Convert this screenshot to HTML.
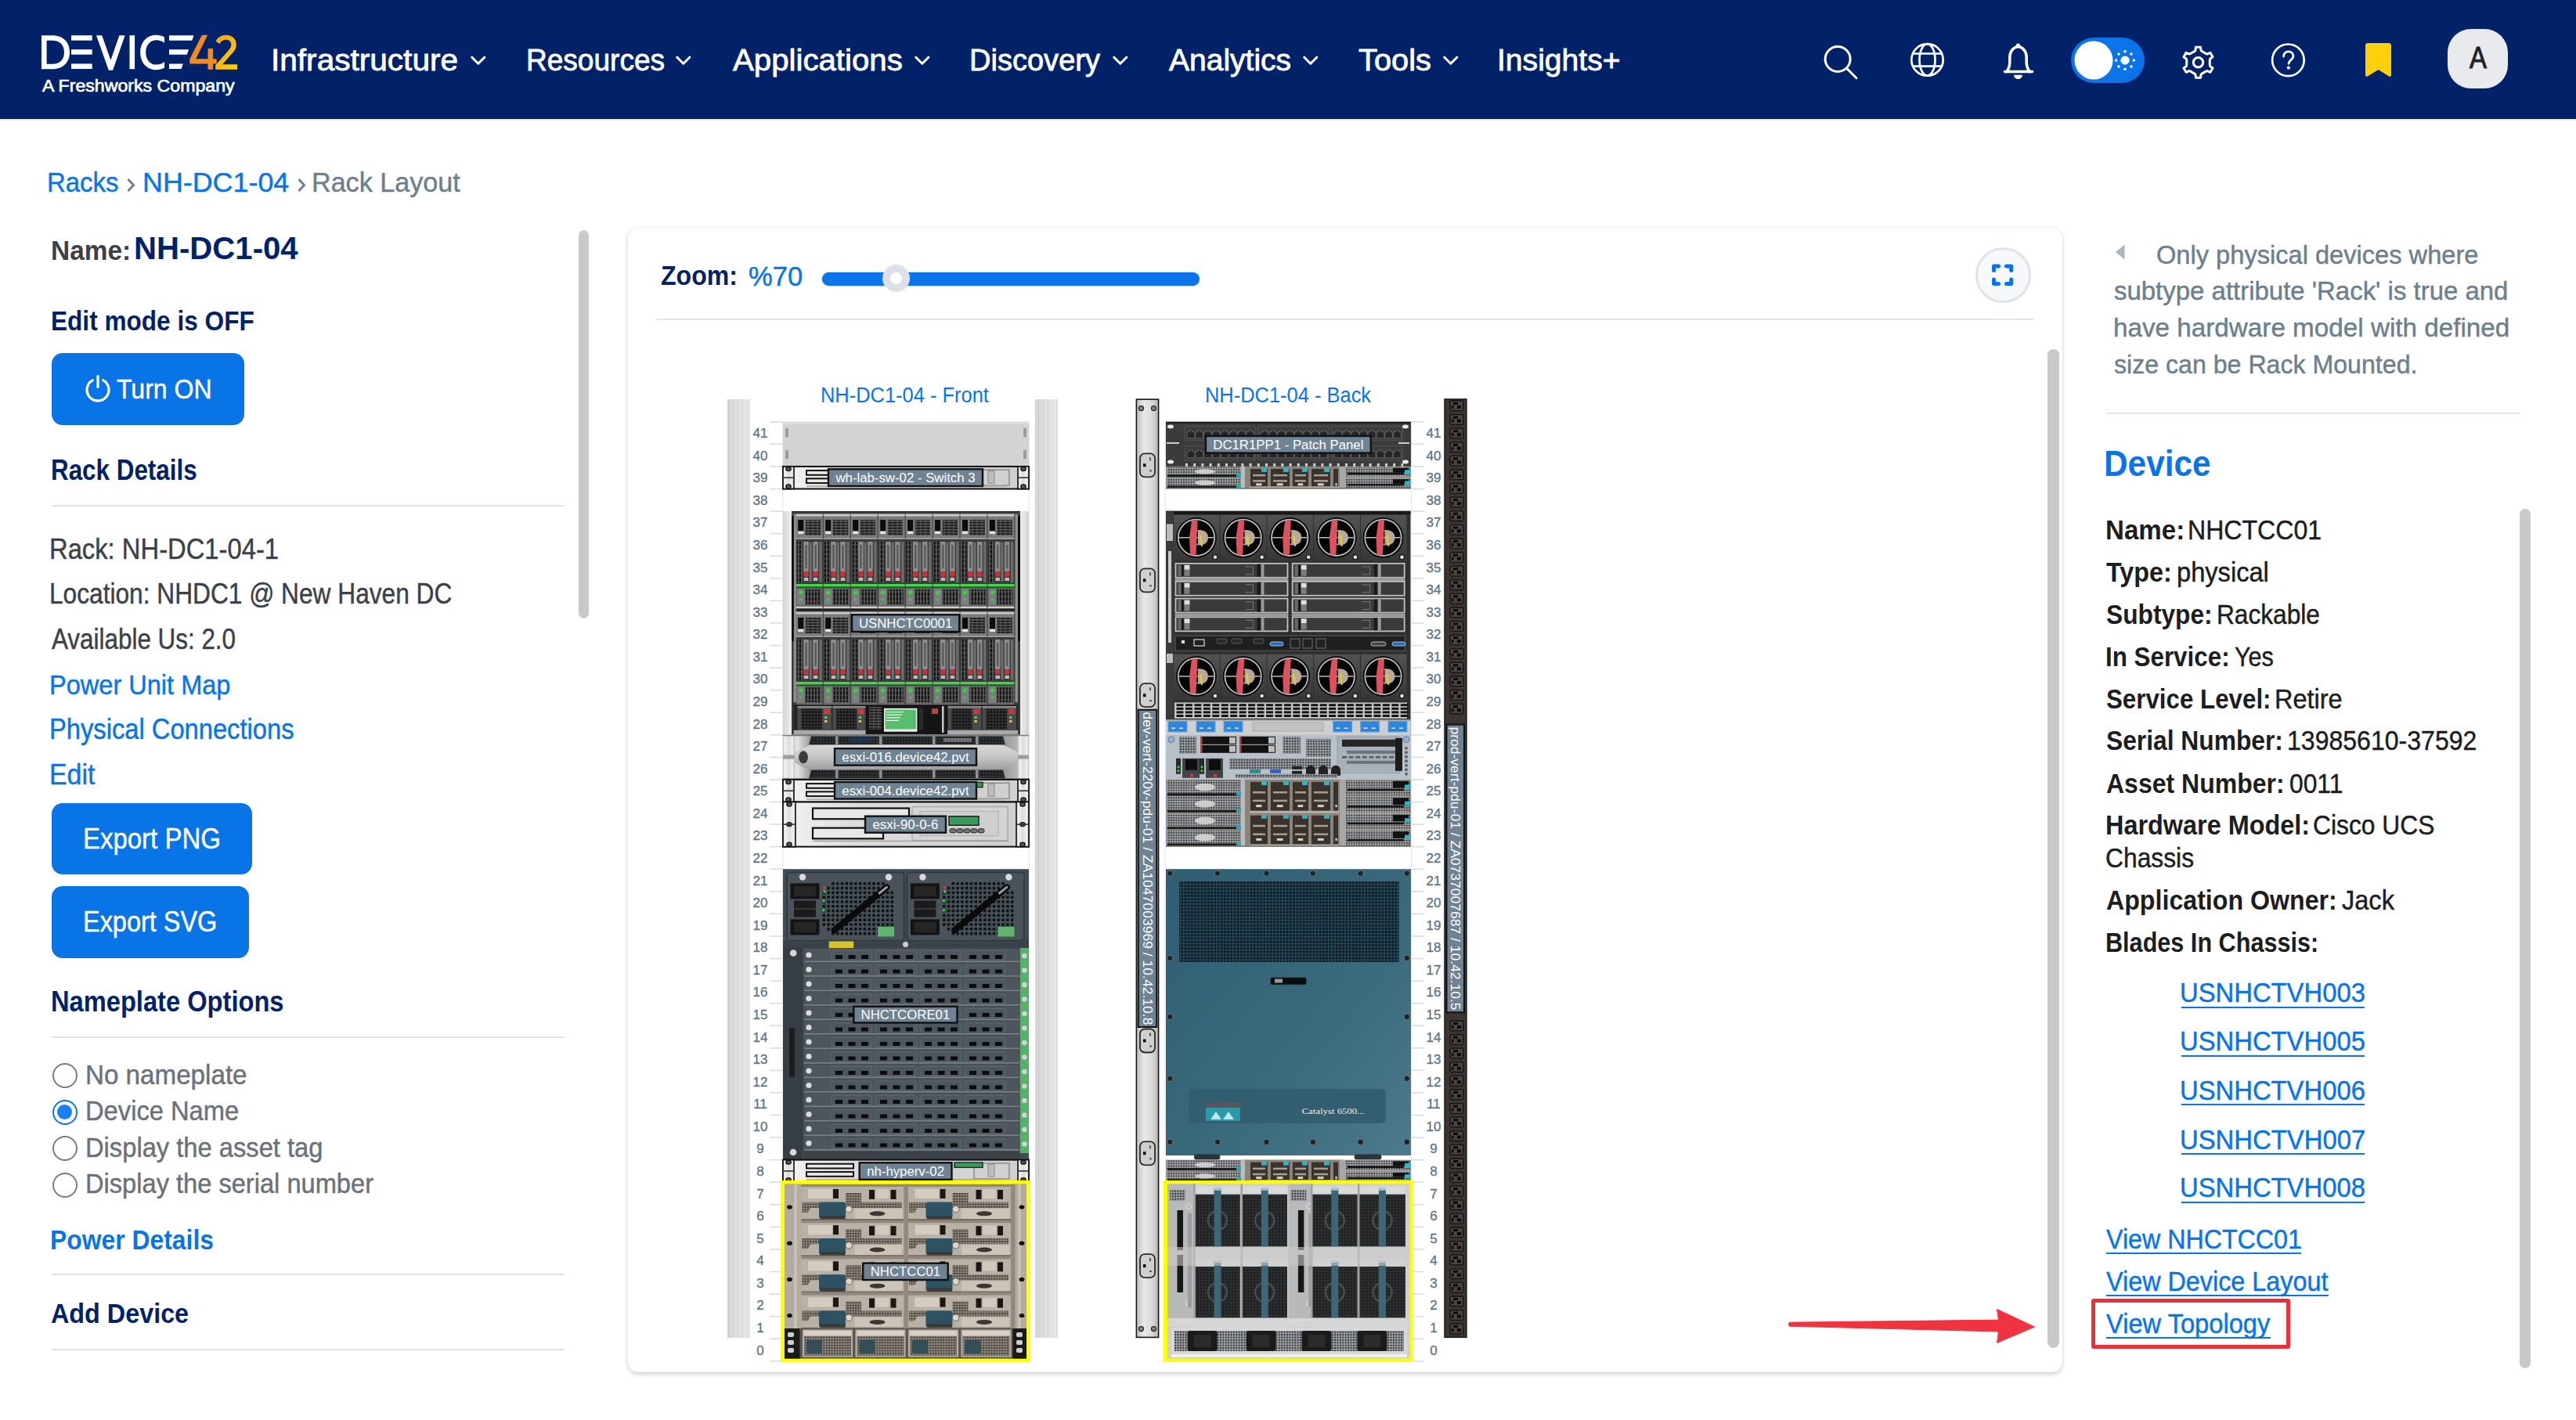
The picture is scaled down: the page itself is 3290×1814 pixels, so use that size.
<!DOCTYPE html>
<html><head><meta charset="utf-8"><title>Rack Layout</title><style>
*{margin:0;padding:0;box-sizing:border-box}
html,body{width:3290px;height:1814px;overflow:hidden;background:#fff;font-family:"Liberation Sans",sans-serif}
.t{position:absolute;white-space:nowrap;line-height:1;transform-origin:0 0}
.a{position:absolute}
</style></head>
<body>
<div class="a" style="left:0;top:0;width:3290px;height:152px;background:#012269"></div>
<div class="a" style="left:0;top:152px;width:3290px;height:2px;background:#e6e9ee"></div>
<svg class="a" style="left:0;top:0" width="320" height="130" viewBox="0 0 320 130">
<defs><linearGradient id="lg2" x1="0" y1="0" x2="1" y2="1"><stop offset="0" stop-color="#f7a21b"/><stop offset="1" stop-color="#fcd20a"/></linearGradient></defs>
<g fill="#fff">
<path d="M53 45.2h14c14 0 22 9 22 21.5S81 88.2 67 88.2H53zM59.6 51.7v30h7.2c9.5 0 15.2-5.5 15.2-15s-5.7-15-15.2-15z"/>
<rect x="91" y="45.2" width="26.7" height="6.5"/><rect x="91" y="63.2" width="26.7" height="6.5"/><rect x="91" y="81.4" width="26.7" height="6.6"/>
<path d="M123 45.2h7.2l11.2 31.5 11-31.5h7.2l-15.5 44.5h-5.3z"/>
<rect x="165.5" y="45.2" width="6.6" height="43"/>
<path d="M210 47.5c-3-1.8-6.7-2.8-10.8-2.8-11.8 0-20 9.4-20 22.2s8.2 22.3 20 22.3c4.1 0 7.8-1 10.8-2.8v-7.4c-2.8 2.3-6.3 3.6-10.3 3.6-8 0-13.5-6.6-13.5-15.7s5.5-15.6 13.5-15.6c4 0 7.5 1.3 10.3 3.6z"/>
<path d="M216 45.2h31.5l-2.2 6.5H216z"/><path d="M216 63.2h25l-2.2 6.5H216z"/><path d="M216 81.5h17.8l-2.2 6.5H216z"/>
</g>
<path fill="#f28a22" d="M258 44.7h7.2l-15 30.5h15.3V62h6.6v13.2h4.6v6.3h-4.6v7.2h-6.6v-7.2h-23.2v-6z"/>
<path fill="url(#lg2)" d="M275.5 53c2.2-5.3 7-8.3 13-8.3 8 0 13.3 5 13.3 12.3 0 5-2.8 9-7 13l-10.8 12.3H303v6.4h-27.8v-5.5l15.7-17.6c3-3.4 4.4-6 4.4-8.5 0-3.8-2.7-6.3-6.8-6.3-3.7 0-6.5 2-7.7 5.3z"/>
</svg>
<div class="t" style="left:54.00px;top:98.34px;font-size:22.90px;font-weight:400;color:#fff;transform:scaleX(1.0109);-webkit-text-stroke:0.7px #fff;">A Freshworks Company</div>
<div class="t" style="left:346.35px;top:57.49px;font-size:39.42px;font-weight:400;color:#fff;transform:scaleX(1.0297);-webkit-text-stroke:0.8px #fff;">Infrastructure</div>
<svg class="a" style="left:601px;top:70px" width="20" height="16" viewBox="0 0 20 16"><path d="M1.8 3.2l8 8 8-8" fill="none" stroke="#fff" stroke-width="3" stroke-linecap="round" stroke-linejoin="round"/></svg>
<div class="t" style="left:672.04px;top:57.49px;font-size:39.42px;font-weight:400;color:#fff;transform:scaleX(0.9398);-webkit-text-stroke:0.8px #fff;">Resources</div>
<svg class="a" style="left:863px;top:70px" width="20" height="16" viewBox="0 0 20 16"><path d="M1.8 3.2l8 8 8-8" fill="none" stroke="#fff" stroke-width="3" stroke-linecap="round" stroke-linejoin="round"/></svg>
<div class="t" style="left:936.00px;top:57.49px;font-size:39.42px;font-weight:400;color:#fff;transform:scaleX(1.0200);-webkit-text-stroke:0.8px #fff;">Applications</div>
<svg class="a" style="left:1168px;top:70px" width="20" height="16" viewBox="0 0 20 16"><path d="M1.8 3.2l8 8 8-8" fill="none" stroke="#fff" stroke-width="3" stroke-linecap="round" stroke-linejoin="round"/></svg>
<div class="t" style="left:1237.96px;top:57.49px;font-size:39.42px;font-weight:400;color:#fff;transform:scaleX(0.9653);-webkit-text-stroke:0.8px #fff;">Discovery</div>
<svg class="a" style="left:1421px;top:70px" width="20" height="16" viewBox="0 0 20 16"><path d="M1.8 3.2l8 8 8-8" fill="none" stroke="#fff" stroke-width="3" stroke-linecap="round" stroke-linejoin="round"/></svg>
<div class="t" style="left:1493.00px;top:57.49px;font-size:39.42px;font-weight:400;color:#fff;transform:scaleX(0.9901);-webkit-text-stroke:0.8px #fff;">Analytics</div>
<svg class="a" style="left:1664px;top:70px" width="20" height="16" viewBox="0 0 20 16"><path d="M1.8 3.2l8 8 8-8" fill="none" stroke="#fff" stroke-width="3" stroke-linecap="round" stroke-linejoin="round"/></svg>
<div class="t" style="left:1735.20px;top:57.49px;font-size:39.42px;font-weight:400;color:#fff;transform:scaleX(1.0105);-webkit-text-stroke:0.8px #fff;">Tools</div>
<svg class="a" style="left:1843px;top:70px" width="20" height="16" viewBox="0 0 20 16"><path d="M1.8 3.2l8 8 8-8" fill="none" stroke="#fff" stroke-width="3" stroke-linecap="round" stroke-linejoin="round"/></svg>
<div class="t" style="left:1912.08px;top:57.49px;font-size:39.42px;font-weight:400;color:#fff;transform:scaleX(0.9922);-webkit-text-stroke:0.8px #fff;">Insights+</div>
<svg class="a" style="left:2300px;top:30px" width="960" height="100" viewBox="2300 30 960 100">
<g fill="none" stroke="#fff" stroke-width="3" stroke-linecap="round" stroke-linejoin="round">
<circle cx="2347.1" cy="75.5" r="16"/><path d="M2358.8 87.6l12.2 12.2"/>
<g stroke-width="2.7"><circle cx="2461.5" cy="76.4" r="20.2"/><ellipse cx="2461.5" cy="76.4" rx="10" ry="20.2"/><path d="M2443.3 68.5h36.4M2443.3 84.6h36.4"/></g>
<path d="M2560.5 91.5h35" stroke-width="3.6"/>
<path d="M2562.8 91.5c2.5-3 4-7.5 4-12.5v-5c0-8.8 5-14 10.7-14.5 5.7.5 10.7 5.7 10.7 14.5v5c0 5 1.5 9.5 4 12.5" stroke-width="3.6"/>
<circle cx="2807.5" cy="79.8" r="6.2"/>
<path d="M2801.96 66.08L2803.95 64.40L2804.40 60.24L2810.60 60.24L2811.05 64.40L2813.04 66.08A14.8 14.8 0 0 1 2816.61 68.14L2819.06 69.02L2822.89 67.34L2825.98 72.70L2822.61 75.18L2822.16 77.74A14.8 14.8 0 0 1 2822.16 81.86L2822.61 84.42L2825.98 86.90L2822.89 92.26L2819.06 90.58L2816.61 91.46A14.8 14.8 0 0 1 2813.04 93.52L2811.05 95.20L2810.60 99.36L2804.40 99.36L2803.95 95.20L2801.96 93.52A14.8 14.8 0 0 1 2798.39 91.46L2795.94 90.58L2792.11 92.26L2789.02 86.90L2792.39 84.42L2792.84 81.86A14.8 14.8 0 0 1 2792.84 77.74L2792.39 75.18L2789.02 72.70L2792.11 67.34L2795.94 69.02L2798.39 68.14A14.8 14.8 0 0 1 2801.96 66.08z"/>
<circle cx="2922.4" cy="76.8" r="20.3" stroke-width="2.7"/><path d="M2916.6 72c0-3.6 2.8-6.2 6.2-6.2s6.1 2.5 6.1 5.9c0 4.6-5.9 5.3-5.9 9.6" stroke-width="2.8"/>
</g>
<g fill="#fff"><circle cx="2577.5" cy="58.3" r="2.7"/><path d="M2572 95.8a5.5 5.3 0 0 0 11 0z"/><circle cx="2922.9" cy="86.6" r="2.1"/></g>
<rect x="2645" y="48" width="94" height="58" rx="29" fill="#0a74e8"/>
<circle cx="2674" cy="77" r="24.5" fill="#fff"/>
<circle cx="2714" cy="77" r="5.6" fill="#fff"/>
<g fill="#fff"><circle cx="2714" cy="65.7" r="1.8"/><circle cx="2714" cy="88.3" r="1.8"/><circle cx="2702.7" cy="77" r="1.8"/><circle cx="2725.3" cy="77" r="1.8"/><circle cx="2706" cy="69" r="1.8"/><circle cx="2722" cy="69" r="1.8"/><circle cx="2706" cy="85" r="1.8"/><circle cx="2722" cy="85" r="1.8"/></g>
<path d="M3024 55h27c1.6 0 3 1.4 3 3v38c0 1.5-1.6 2.3-2.8 1.5l-13.7-8.5-13.7 8.5c-1.2.8-2.8 0-2.8-1.5V58c0-1.6 1.4-3 3-3z" fill="#fdd10a"/>
<rect x="3126" y="37" width="77" height="76" rx="30" fill="#e8eaee"/>
</svg>
<div class="t" style="left:3153.50px;top:55.16px;font-size:38.41px;font-weight:400;color:#1f2023;transform:scaleX(0.8550);-webkit-text-stroke:1.0px #1f2023;">A</div>
<div class="t" style="left:60.16px;top:215.91px;font-size:34.93px;font-weight:400;color:#0874e6;transform:scaleX(0.9432);-webkit-text-stroke:0.45px #0874e6;">Racks</div>
<svg class="a" style="left:158px;top:224px" width="20" height="24" viewBox="0 0 20 24"><path d="M5.5 5l7 7.5-7 7.5" fill="none" stroke="#6f7f8b" stroke-width="3"/></svg>
<div class="t" style="left:181.63px;top:215.91px;font-size:34.93px;font-weight:400;color:#0874e6;transform:scaleX(1.0267);-webkit-text-stroke:0.45px #0874e6;">NH-DC1-04</div>
<svg class="a" style="left:376px;top:224px" width="20" height="24" viewBox="0 0 20 24"><path d="M5.5 5l7 7.5-7 7.5" fill="none" stroke="#6f7f8b" stroke-width="3"/></svg>
<div class="t" style="left:398.27px;top:215.91px;font-size:34.93px;font-weight:400;color:#6c7f8d;transform:scaleX(0.9769);-webkit-text-stroke:0.45px #6c7f8d;">Rack Layout</div>
<div class="t" style="left:65.00px;top:301.87px;font-size:35.22px;font-weight:700;color:#3b4149;transform:scaleX(0.9486);">Name:</div>
<div class="t" style="left:171.19px;top:297.31px;font-size:40.58px;font-weight:700;color:#012269;transform:scaleX(0.9891);">NH-DC1-04</div>
<div class="t" style="left:65.10px;top:393.23px;font-size:34.78px;font-weight:700;color:#012269;transform:scaleX(0.9086);">Edit mode is OFF</div>
<div class="a" style="left:66px;top:451px;width:246px;height:92px;background:#0874e6;border-radius:14px"></div>
<svg class="a" style="left:105px;top:476px" width="40" height="40" viewBox="0 0 40 40"><path d="M13.2 9.8a14 14 0 1 0 13.6 0" fill="none" stroke="#fff" stroke-width="3.2" stroke-linecap="round"/><path d="M20 4.5v14" stroke="#fff" stroke-width="3.2" stroke-linecap="round"/></svg>
<div class="t" style="left:149.36px;top:479.62px;font-size:35.51px;font-weight:400;color:#fff;transform:scaleX(0.9016);-webkit-text-stroke:0.45px #fff;">Turn ON</div>
<div class="t" style="left:65.12px;top:583.00px;font-size:36.23px;font-weight:700;color:#012269;transform:scaleX(0.8664);">Rack Details</div>
<div class="a" style="left:66px;top:645px;width:655px;height:2px;background:#dfe3e8"></div>
<div class="t" style="left:63.38px;top:683.51px;font-size:36.81px;font-weight:400;color:#3b4149;transform:scaleX(0.8901);-webkit-text-stroke:0.45px #3b4149;">Rack: NH-DC1-04-1</div>
<div class="t" style="left:63.47px;top:740.51px;font-size:36.81px;font-weight:400;color:#3b4149;transform:scaleX(0.8605);-webkit-text-stroke:0.45px #3b4149;">Location: NHDC1 @ New Haven DC</div>
<div class="t" style="left:66.00px;top:799.00px;font-size:36.23px;font-weight:400;color:#3b4149;transform:scaleX(0.8669);-webkit-text-stroke:0.45px #3b4149;">Available Us: 2.0</div>
<div class="t" style="left:63.40px;top:857.14px;font-size:35.36px;font-weight:400;color:#0874e6;transform:scaleX(0.9202);-webkit-text-stroke:0.45px #0874e6;">Power Unit Map</div>
<div class="t" style="left:63.38px;top:914.00px;font-size:36.23px;font-weight:400;color:#0874e6;transform:scaleX(0.9024);-webkit-text-stroke:0.45px #0874e6;">Physical Connections</div>
<div class="t" style="left:63.29px;top:972.00px;font-size:36.23px;font-weight:400;color:#0874e6;transform:scaleX(0.9344);-webkit-text-stroke:0.45px #0874e6;">Edit</div>
<div class="a" style="left:66px;top:1025.5px;width:256px;height:91px;background:#0874e6;border-radius:14px"></div>
<div class="t" style="left:106.36px;top:1052.82px;font-size:37.39px;font-weight:400;color:#fff;transform:scaleX(0.8817);-webkit-text-stroke:0.45px #fff;">Export PNG</div>
<div class="a" style="left:66px;top:1131.5px;width:252px;height:92.5px;background:#0874e6;border-radius:14px"></div>
<div class="t" style="left:106.40px;top:1158.62px;font-size:37.39px;font-weight:400;color:#fff;transform:scaleX(0.8682);-webkit-text-stroke:0.45px #fff;">Export SVG</div>
<div class="t" style="left:64.64px;top:1261.89px;font-size:36.96px;font-weight:700;color:#012269;transform:scaleX(0.8835);">Nameplate Options</div>
<div class="a" style="left:66px;top:1323.6px;width:655px;height:2px;background:#dfe3e8"></div>
<div class="a" style="left:66.6px;top:1358px;width:32px;height:32px;border-radius:50%;border:2.5px solid #767c83;background:#fff"></div>
<div class="t" style="left:109.35px;top:1354.74px;font-size:35.36px;font-weight:400;color:#6b7178;transform:scaleX(0.9382);-webkit-text-stroke:0.45px #6b7178;">No nameplate</div>
<div class="a" style="left:66.6px;top:1404.5px;width:32px;height:32px;border-radius:50%;border:2.5px solid #0a74e8;background:#fff"></div>
<div class="a" style="left:73.1px;top:1411.0px;width:19px;height:19px;border-radius:50%;background:#1a7ff0"></div>
<div class="t" style="left:109.38px;top:1401.24px;font-size:35.36px;font-weight:400;color:#6b7178;transform:scaleX(0.9244);-webkit-text-stroke:0.45px #6b7178;">Device Name</div>
<div class="a" style="left:66.6px;top:1451px;width:32px;height:32px;border-radius:50%;border:2.5px solid #767c83;background:#fff"></div>
<div class="t" style="left:109.38px;top:1447.74px;font-size:35.36px;font-weight:400;color:#6b7178;transform:scaleX(0.9244);-webkit-text-stroke:0.45px #6b7178;">Display the asset tag</div>
<div class="a" style="left:66.6px;top:1497.5px;width:32px;height:32px;border-radius:50%;border:2.5px solid #767c83;background:#fff"></div>
<div class="t" style="left:109.39px;top:1494.24px;font-size:35.36px;font-weight:400;color:#6b7178;transform:scaleX(0.9224);-webkit-text-stroke:0.45px #6b7178;">Display the serial number</div>
<div class="t" style="left:64.09px;top:1566.73px;font-size:34.20px;font-weight:700;color:#0874e6;transform:scaleX(0.9321);">Power Details</div>
<div class="a" style="left:66px;top:1627px;width:655px;height:2px;background:#dfe3e8"></div>
<div class="t" style="left:65.35px;top:1661.07px;font-size:35.80px;font-weight:700;color:#012269;transform:scaleX(0.9032);">Add Device</div>
<div class="a" style="left:66px;top:1722.6px;width:655px;height:2px;background:#dfe3e8"></div>
<div class="a" style="left:739px;top:294px;width:13px;height:496px;background:#c9c9c9;border-radius:7px"></div>
<div class="a" style="left:802px;top:290.5px;width:1832px;height:1462px;background:#fff;border-radius:13px;box-shadow:0 3px 6px rgba(0,0,0,0.16),0 0 2px rgba(0,0,0,0.12)"></div>
<div class="t" style="left:843.66px;top:334.62px;font-size:35.51px;font-weight:700;color:#012269;transform:scaleX(0.9038);">Zoom:</div>
<div class="t" style="left:955.96px;top:335.60px;font-size:34.35px;font-weight:400;color:#0874e6;transform:scaleX(1.0079);-webkit-text-stroke:0.45px #0874e6;">%70</div>
<div class="a" style="left:1050px;top:347.5px;width:482px;height:17.5px;background:#0a74e8;border-radius:9px;box-shadow:0 0 0 1px #d6dde6"></div>
<div class="a" style="left:1126.5px;top:337.5px;width:35px;height:35px;border-radius:50%;background:#fff;border:10px solid #dde1e7"></div>
<div class="a" style="left:2523.4px;top:316.3px;width:70.5px;height:70.5px;border-radius:50%;background:#f6f8f9;border:3.5px solid #dfe2e6"></div>
<svg class="a" style="left:2540px;top:334px" width="36" height="36" viewBox="2540 334 36 36"><path d="M2546.5 345.5v-5.5h6M2562.5 340h6.2v5.5M2546.5 357v5.5h6M2562.5 362.5h6.2V357" fill="none" stroke="#0a74e8" stroke-width="5" stroke-linecap="round" stroke-linejoin="round"/></svg>
<div class="a" style="left:838px;top:406.5px;width:1760px;height:2px;background:#e3e6ea"></div>
<div class="a" style="left:2615px;top:446px;width:15px;height:1276px;background:#c9c9c9;border-radius:8px"></div>
<svg class="a" style="left:2698px;top:308px" width="20" height="28" viewBox="0 0 20 28"><path d="M15.5 4.5v19L4 14z" fill="#aab4bc"/></svg>
<div class="t" style="left:2753.70px;top:308.97px;font-size:33.33px;font-weight:400;color:#6c7f8d;transform:scaleX(0.9784);-webkit-text-stroke:0.45px #6c7f8d;">Only physical devices where</div>
<div class="t" style="left:2700.34px;top:355.47px;font-size:33.33px;font-weight:400;color:#6c7f8d;transform:scaleX(0.9886);-webkit-text-stroke:0.45px #6c7f8d;">subtype attribute 'Rack' is true and</div>
<div class="t" style="left:2699.01px;top:402.17px;font-size:33.33px;font-weight:400;color:#6c7f8d;transform:scaleX(0.9973);-webkit-text-stroke:0.45px #6c7f8d;">have hardware model with defined</div>
<div class="t" style="left:2700.36px;top:449.47px;font-size:33.33px;font-weight:400;color:#6c7f8d;transform:scaleX(0.9637);-webkit-text-stroke:0.45px #6c7f8d;">size can be Rack Mounted.</div>
<div class="a" style="left:2690px;top:527px;width:528px;height:2px;background:#e0e4e8"></div>
<div class="t" style="left:2687.46px;top:569.38px;font-size:46.38px;font-weight:700;color:#0874e6;transform:scaleX(0.9138);">Device</div>
<div class="a" style="left:3218px;top:650px;width:14px;height:1097.5px;background:#c9c9c9;border-radius:7px"></div>
<div class="t" style="left:2688.51px;top:658.74px;font-size:35.36px;font-weight:700;color:#1c1d20;transform:scaleX(0.9359);">Name:</div>
<div class="t" style="left:2793.93px;top:658.74px;font-size:35.36px;font-weight:400;color:#1c1d20;transform:scaleX(0.9074);-webkit-text-stroke:0.45px #1c1d20;">NHCTCC01</div>
<div class="t" style="left:2690.18px;top:712.94px;font-size:35.36px;font-weight:700;color:#1c1d20;transform:scaleX(0.9143);">Type:</div>
<div class="t" style="left:2779.54px;top:712.94px;font-size:35.36px;font-weight:400;color:#1c1d20;transform:scaleX(0.9227);-webkit-text-stroke:0.45px #1c1d20;">physical</div>
<div class="t" style="left:2689.87px;top:766.74px;font-size:35.36px;font-weight:700;color:#1c1d20;transform:scaleX(0.8969);">Subtype:</div>
<div class="t" style="left:2830.87px;top:766.74px;font-size:35.36px;font-weight:400;color:#1c1d20;transform:scaleX(0.8952);-webkit-text-stroke:0.45px #1c1d20;">Rackable</div>
<div class="t" style="left:2688.62px;top:820.64px;font-size:35.36px;font-weight:700;color:#1c1d20;transform:scaleX(0.8867);">In Service:</div>
<div class="t" style="left:2853.69px;top:820.64px;font-size:35.36px;font-weight:400;color:#1c1d20;transform:scaleX(0.8655);-webkit-text-stroke:0.45px #1c1d20;">Yes</div>
<div class="t" style="left:2689.87px;top:874.94px;font-size:35.36px;font-weight:700;color:#1c1d20;transform:scaleX(0.8851);">Service Level:</div>
<div class="t" style="left:2905.10px;top:874.94px;font-size:35.36px;font-weight:400;color:#1c1d20;transform:scaleX(0.9189);-webkit-text-stroke:0.45px #1c1d20;">Retire</div>
<div class="t" style="left:2689.86px;top:928.24px;font-size:35.36px;font-weight:700;color:#1c1d20;transform:scaleX(0.8980);">Serial Number:</div>
<div class="t" style="left:2920.76px;top:928.24px;font-size:35.36px;font-weight:400;color:#1c1d20;transform:scaleX(0.9064);-webkit-text-stroke:0.45px #1c1d20;">13985610-37592</div>
<div class="t" style="left:2689.86px;top:982.74px;font-size:35.36px;font-weight:700;color:#1c1d20;transform:scaleX(0.9049);">Asset Number:</div>
<div class="t" style="left:2923.75px;top:982.74px;font-size:35.36px;font-weight:400;color:#1c1d20;transform:scaleX(0.8984);-webkit-text-stroke:0.45px #1c1d20;">0011</div>
<div class="t" style="left:2688.56px;top:1035.94px;font-size:35.36px;font-weight:700;color:#1c1d20;transform:scaleX(0.9166);">Hardware Model:</div>
<div class="t" style="left:2954.31px;top:1035.94px;font-size:35.36px;font-weight:400;color:#1c1d20;transform:scaleX(0.8985);-webkit-text-stroke:0.45px #1c1d20;">Cisco UCS</div>
<div class="t" style="left:2689.86px;top:1132.34px;font-size:35.36px;font-weight:700;color:#1c1d20;transform:scaleX(0.9095);">Application Owner:</div>
<div class="t" style="left:2991.07px;top:1132.34px;font-size:35.36px;font-weight:400;color:#1c1d20;transform:scaleX(0.9201);-webkit-text-stroke:0.45px #1c1d20;">Jack</div>
<div class="t" style="left:2688.66px;top:1186.04px;font-size:35.36px;font-weight:700;color:#1c1d20;transform:scaleX(0.8656);">Blades In Chassis:</div>
<div class="t" style="left:2688.91px;top:1077.74px;font-size:35.36px;font-weight:400;color:#1c1d20;transform:scaleX(0.8988);-webkit-text-stroke:0.45px #1c1d20;">Chassis</div>
<div class="t" style="left:2783.70px;top:1251.33px;font-size:34.20px;font-weight:400;color:#0874e6;transform:scaleX(0.9591);-webkit-text-stroke:0.45px #0874e6;">USNHCTVH003</div>
<div class="a" style="left:2786px;top:1285.6px;width:233.5px;height:2.4px;background:#0874e6"></div>
<div class="t" style="left:2783.70px;top:1313.33px;font-size:34.20px;font-weight:400;color:#0874e6;transform:scaleX(0.9591);-webkit-text-stroke:0.45px #0874e6;">USNHCTVH005</div>
<div class="a" style="left:2786px;top:1347.6px;width:233.5px;height:2.4px;background:#0874e6"></div>
<div class="t" style="left:2783.70px;top:1375.73px;font-size:34.20px;font-weight:400;color:#0874e6;transform:scaleX(0.9591);-webkit-text-stroke:0.45px #0874e6;">USNHCTVH006</div>
<div class="a" style="left:2786px;top:1410px;width:233.5px;height:2.4px;background:#0874e6"></div>
<div class="t" style="left:2783.70px;top:1438.73px;font-size:34.20px;font-weight:400;color:#0874e6;transform:scaleX(0.9605);-webkit-text-stroke:0.45px #0874e6;">USNHCTVH007</div>
<div class="a" style="left:2786px;top:1473px;width:233.5px;height:2.4px;background:#0874e6"></div>
<div class="t" style="left:2783.70px;top:1500.43px;font-size:34.20px;font-weight:400;color:#0874e6;transform:scaleX(0.9591);-webkit-text-stroke:0.45px #0874e6;">USNHCTVH008</div>
<div class="a" style="left:2786px;top:1534.7px;width:233.5px;height:2.4px;background:#0874e6"></div>
<div class="t" style="left:2690.00px;top:1565.73px;font-size:34.20px;font-weight:400;color:#0874e6;transform:scaleX(0.9417);-webkit-text-stroke:0.45px #0874e6;">View NHCTCC01</div>
<div class="a" style="left:2690px;top:1600px;width:248.5px;height:2.4px;background:#0874e6"></div>
<div class="t" style="left:2690.00px;top:1619.73px;font-size:34.20px;font-weight:400;color:#0874e6;transform:scaleX(0.9459);-webkit-text-stroke:0.45px #0874e6;">View Device Layout</div>
<div class="a" style="left:2690px;top:1654px;width:283.5999999999999px;height:2.4px;background:#0874e6"></div>
<div class="t" style="left:2690.00px;top:1673.73px;font-size:34.20px;font-weight:400;color:#0874e6;transform:scaleX(0.9548);-webkit-text-stroke:0.45px #0874e6;">View Topology</div>
<div class="a" style="left:2690px;top:1708px;width:210px;height:2.4px;background:#0874e6"></div>
<div class="a" style="left:2670.6px;top:1658.6px;width:254px;height:64px;border:5px solid #e8303d;border-radius:3px"></div>
<svg class="a" style="left:2280px;top:1665px" width="325" height="56" viewBox="2280 1665 325 56"><path d="M2285.5 1689.2L2552.5 1686.2L2550.5 1672.5L2598.5 1695L2550.5 1715.5L2552.5 1701L2285.5 1694.2Q2283 1691.7 2285.5 1689.2z" fill="#ef3340" stroke="#ef3340" stroke-width="1" stroke-linejoin="round"/></svg>
<div class="t" style="left:1047.96px;top:492.31px;font-size:26.81px;font-weight:400;color:#0874e6;transform:scaleX(0.9494);">NH-DC1-04 - Front</div>
<div class="t" style="left:1538.56px;top:492.31px;font-size:26.81px;font-weight:400;color:#0874e6;transform:scaleX(0.9495);">NH-DC1-04 - Back</div>
<svg class="a" style="left:880px;top:480px" width="1020" height="1290" viewBox="880 480 1020 1290">

<defs>
<linearGradient id="rail" x1="0" x2="1" y1="0" y2="0">
 <stop offset="0" stop-color="#d2d2d2"/><stop offset="0.3" stop-color="#dbdbdb"/><stop offset="0.6" stop-color="#e0e0e1"/><stop offset="0.85" stop-color="#e6e7e9"/><stop offset="1" stop-color="#dedfe0"/>
</linearGradient>
<pattern id="railstreak" width="6" height="10" patternUnits="userSpaceOnUse">
 <rect width="1" height="10" fill="#000" opacity="0.04"/><rect x="3" width="1" height="10" fill="#fff" opacity="0.12"/>
</pattern>
<linearGradient id="silverV" x1="0" x2="0" y1="0" y2="1">
 <stop offset="0" stop-color="#f4f4f4"/><stop offset="0.5" stop-color="#dedede"/><stop offset="1" stop-color="#c4c4c4"/>
</linearGradient>
<linearGradient id="silverH" x1="0" x2="1" y1="0" y2="0">
 <stop offset="0" stop-color="#bdbdbd"/><stop offset="0.15" stop-color="#f2f2f2"/><stop offset="0.5" stop-color="#dcdcdc"/><stop offset="0.85" stop-color="#f0f0f0"/><stop offset="1" stop-color="#bcbcbc"/>
</linearGradient>
<linearGradient id="srv1u" x1="0" x2="1" y1="0" y2="0">
 <stop offset="0" stop-color="#f4f4f4"/><stop offset="0.3" stop-color="#dcdcdc"/><stop offset="1" stop-color="#cfcfcf"/>
</linearGradient>
<pattern id="gDark" width="5" height="4" patternUnits="userSpaceOnUse">
 <rect width="5" height="4" fill="#6a6a6a"/><rect x="0.6" y="0.6" width="3.8" height="2.4" fill="#111"/>
</pattern>
<pattern id="gSlots" width="6" height="3.6" patternUnits="userSpaceOnUse">
 <rect width="6" height="3.6" fill="#5d5d5d"/><rect x="0.5" y="0.6" width="5" height="2" fill="#141414"/>
</pattern>
<pattern id="gVert" width="4" height="6" patternUnits="userSpaceOnUse">
 <rect width="4" height="6" fill="#5a5a5a"/><rect x="0.7" y="0.5" width="2.3" height="5" fill="#121212"/>
</pattern>
<pattern id="gMesh" width="3.4" height="3.4" patternUnits="userSpaceOnUse">
 <rect width="3.4" height="3.4" fill="#9a9ea3"/><circle cx="1.7" cy="1.7" r="1.05" fill="#2a2c2f"/>
</pattern>
<pattern id="gMeshL" width="3.2" height="3.2" patternUnits="userSpaceOnUse">
 <rect width="3.2" height="3.2" fill="#a3a5a8"/><circle cx="1.6" cy="1.6" r="1.1" fill="#2f3133"/>
</pattern>
<pattern id="gTeal" width="4.2" height="4.2" patternUnits="userSpaceOnUse">
 <rect width="4.2" height="4.2" fill="#26495a"/><rect x="0.5" y="0.5" width="2.9" height="2.9" fill="#0d1a22"/>
</pattern>
<pattern id="gBlk" width="4" height="4" patternUnits="userSpaceOnUse">
 <rect width="4" height="4" fill="#3d3d3d"/><rect x="0.5" y="0.5" width="3" height="3" fill="#111"/>
</pattern>
<radialGradient id="fanhub" cx="0.5" cy="0.5" r="0.5">
 <stop offset="0" stop-color="#b9a89a"/><stop offset="0.7" stop-color="#8f8178"/><stop offset="1" stop-color="#222"/>
</radialGradient>
<linearGradient id="tealG" x1="0" x2="1" y1="0" y2="1">
 <stop offset="0" stop-color="#2f5d71"/><stop offset="0.6" stop-color="#3b6a7d"/><stop offset="1" stop-color="#4d7a8c"/>
</linearGradient>
<linearGradient id="beige" x1="0" x2="1" y1="0" y2="1">
 <stop offset="0" stop-color="#c6bcae"/><stop offset="0.5" stop-color="#b0a596"/><stop offset="1" stop-color="#9c9385"/>
</linearGradient>
<linearGradient id="pduL" x1="0" x2="1" y1="0" y2="0"><stop offset="0" stop-color="#bdbdbd"/><stop offset="0.35" stop-color="#e9e9e9"/><stop offset="0.7" stop-color="#dadada"/><stop offset="1" stop-color="#b5b5b5"/></linearGradient>
<linearGradient id="fanbay" x1="0" x2="0" y1="0" y2="1"><stop offset="0" stop-color="#5b5b5b" stop-opacity="0.6"/><stop offset="1" stop-color="#2a2a2a" stop-opacity="0.6"/></linearGradient>
<linearGradient id="dellbez" x1="0" x2="1" y1="0" y2="0"><stop offset="0" stop-color="#cfcfcf"/><stop offset="0.06" stop-color="#e2e2e2"/><stop offset="0.12" stop-color="#8f8f8f"/><stop offset="0.3" stop-color="#c9c9c9"/><stop offset="0.7" stop-color="#d2d2d2"/><stop offset="0.9" stop-color="#9a9a9a"/><stop offset="1" stop-color="#cdcdcd"/></linearGradient>
<linearGradient id="dellmid" x1="0" x2="0" y1="0" y2="1"><stop offset="0" stop-color="#d9d9d9"/><stop offset="0.5" stop-color="#c4c4c4"/><stop offset="1" stop-color="#9c9c9c"/></linearGradient>
<pattern id="gMeshU" width="3.4" height="3.4" patternUnits="userSpaceOnUse"><rect width="3.4" height="3.4" fill="#8c857b"/><circle cx="1.7" cy="1.7" r="1.15" fill="#3a3531"/></pattern>
<linearGradient id="bladeSide" x1="0" x2="1" y1="0" y2="0"><stop offset="0" stop-color="#d5d5d5"/><stop offset="0.035" stop-color="#f0f0f1"/><stop offset="0.5" stop-color="#e6e6e6"/><stop offset="0.965" stop-color="#eeeeef"/><stop offset="1" stop-color="#d2d2d2"/></linearGradient>
</defs>

<rect x="929.00" y="510.00" width="29.00" height="1199.00" fill="url(#rail)" />
<rect x="929.00" y="510.00" width="29.00" height="1199.00" fill="url(#railstreak)" />
<rect x="1322.00" y="510.00" width="29.00" height="1199.00" fill="url(#rail)" />
<rect x="1322.00" y="510.00" width="29.00" height="1199.00" fill="url(#railstreak)" />
<rect x="983.00" y="538.00" width="17.00" height="1.6" fill="#d5dde5"/>
<rect x="983.00" y="566.57" width="17.00" height="1.6" fill="#d5dde5"/>
<rect x="983.00" y="595.14" width="17.00" height="1.6" fill="#d5dde5"/>
<rect x="983.00" y="623.71" width="17.00" height="1.6" fill="#d5dde5"/>
<rect x="983.00" y="652.29" width="17.00" height="1.6" fill="#d5dde5"/>
<rect x="983.00" y="680.86" width="17.00" height="1.6" fill="#d5dde5"/>
<rect x="983.00" y="709.43" width="17.00" height="1.6" fill="#d5dde5"/>
<rect x="983.00" y="738.00" width="17.00" height="1.6" fill="#d5dde5"/>
<rect x="983.00" y="766.57" width="17.00" height="1.6" fill="#d5dde5"/>
<rect x="983.00" y="795.14" width="17.00" height="1.6" fill="#d5dde5"/>
<rect x="983.00" y="823.71" width="17.00" height="1.6" fill="#d5dde5"/>
<rect x="983.00" y="852.29" width="17.00" height="1.6" fill="#d5dde5"/>
<rect x="983.00" y="880.86" width="17.00" height="1.6" fill="#d5dde5"/>
<rect x="983.00" y="909.43" width="17.00" height="1.6" fill="#d5dde5"/>
<rect x="983.00" y="938.00" width="17.00" height="1.6" fill="#d5dde5"/>
<rect x="983.00" y="966.57" width="17.00" height="1.6" fill="#d5dde5"/>
<rect x="983.00" y="995.14" width="17.00" height="1.6" fill="#d5dde5"/>
<rect x="983.00" y="1023.71" width="17.00" height="1.6" fill="#d5dde5"/>
<rect x="983.00" y="1052.29" width="17.00" height="1.6" fill="#d5dde5"/>
<rect x="983.00" y="1080.86" width="17.00" height="1.6" fill="#d5dde5"/>
<rect x="983.00" y="1109.43" width="17.00" height="1.6" fill="#d5dde5"/>
<rect x="983.00" y="1138.00" width="17.00" height="1.6" fill="#d5dde5"/>
<rect x="983.00" y="1166.57" width="17.00" height="1.6" fill="#d5dde5"/>
<rect x="983.00" y="1195.14" width="17.00" height="1.6" fill="#d5dde5"/>
<rect x="983.00" y="1223.71" width="17.00" height="1.6" fill="#d5dde5"/>
<rect x="983.00" y="1252.29" width="17.00" height="1.6" fill="#d5dde5"/>
<rect x="983.00" y="1280.86" width="17.00" height="1.6" fill="#d5dde5"/>
<rect x="983.00" y="1309.43" width="17.00" height="1.6" fill="#d5dde5"/>
<rect x="983.00" y="1338.00" width="17.00" height="1.6" fill="#d5dde5"/>
<rect x="983.00" y="1366.57" width="17.00" height="1.6" fill="#d5dde5"/>
<rect x="983.00" y="1395.14" width="17.00" height="1.6" fill="#d5dde5"/>
<rect x="983.00" y="1423.71" width="17.00" height="1.6" fill="#d5dde5"/>
<rect x="983.00" y="1452.29" width="17.00" height="1.6" fill="#d5dde5"/>
<rect x="983.00" y="1480.86" width="17.00" height="1.6" fill="#d5dde5"/>
<rect x="983.00" y="1509.43" width="17.00" height="1.6" fill="#d5dde5"/>
<rect x="983.00" y="1538.00" width="17.00" height="1.6" fill="#d5dde5"/>
<rect x="983.00" y="1566.57" width="17.00" height="1.6" fill="#d5dde5"/>
<rect x="983.00" y="1595.14" width="17.00" height="1.6" fill="#d5dde5"/>
<rect x="983.00" y="1623.71" width="17.00" height="1.6" fill="#d5dde5"/>
<rect x="983.00" y="1652.29" width="17.00" height="1.6" fill="#d5dde5"/>
<rect x="983.00" y="1680.86" width="17.00" height="1.6" fill="#d5dde5"/>
<rect x="983.00" y="1709.43" width="17.00" height="1.6" fill="#d5dde5"/>
<rect x="983.00" y="1738.00" width="17.00" height="1.6" fill="#d5dde5"/>
<text x="971.00" y="1730.61" font-size="17" fill="#5f7686" stroke="#5f7686" stroke-width="0.35" text-anchor="middle" font-family="Liberation Sans">0</text>
<text x="971.00" y="1702.04" font-size="17" fill="#5f7686" stroke="#5f7686" stroke-width="0.35" text-anchor="middle" font-family="Liberation Sans">1</text>
<text x="971.00" y="1673.47" font-size="17" fill="#5f7686" stroke="#5f7686" stroke-width="0.35" text-anchor="middle" font-family="Liberation Sans">2</text>
<text x="971.00" y="1644.90" font-size="17" fill="#5f7686" stroke="#5f7686" stroke-width="0.35" text-anchor="middle" font-family="Liberation Sans">3</text>
<text x="971.00" y="1616.33" font-size="17" fill="#5f7686" stroke="#5f7686" stroke-width="0.35" text-anchor="middle" font-family="Liberation Sans">4</text>
<text x="971.00" y="1587.76" font-size="17" fill="#5f7686" stroke="#5f7686" stroke-width="0.35" text-anchor="middle" font-family="Liberation Sans">5</text>
<text x="971.00" y="1559.19" font-size="17" fill="#5f7686" stroke="#5f7686" stroke-width="0.35" text-anchor="middle" font-family="Liberation Sans">6</text>
<text x="971.00" y="1530.61" font-size="17" fill="#5f7686" stroke="#5f7686" stroke-width="0.35" text-anchor="middle" font-family="Liberation Sans">7</text>
<text x="971.00" y="1502.04" font-size="17" fill="#5f7686" stroke="#5f7686" stroke-width="0.35" text-anchor="middle" font-family="Liberation Sans">8</text>
<text x="971.00" y="1473.47" font-size="17" fill="#5f7686" stroke="#5f7686" stroke-width="0.35" text-anchor="middle" font-family="Liberation Sans">9</text>
<text x="971.00" y="1444.90" font-size="17" fill="#5f7686" stroke="#5f7686" stroke-width="0.35" text-anchor="middle" font-family="Liberation Sans">10</text>
<text x="971.00" y="1416.33" font-size="17" fill="#5f7686" stroke="#5f7686" stroke-width="0.35" text-anchor="middle" font-family="Liberation Sans">11</text>
<text x="971.00" y="1387.76" font-size="17" fill="#5f7686" stroke="#5f7686" stroke-width="0.35" text-anchor="middle" font-family="Liberation Sans">12</text>
<text x="971.00" y="1359.19" font-size="17" fill="#5f7686" stroke="#5f7686" stroke-width="0.35" text-anchor="middle" font-family="Liberation Sans">13</text>
<text x="971.00" y="1330.61" font-size="17" fill="#5f7686" stroke="#5f7686" stroke-width="0.35" text-anchor="middle" font-family="Liberation Sans">14</text>
<text x="971.00" y="1302.04" font-size="17" fill="#5f7686" stroke="#5f7686" stroke-width="0.35" text-anchor="middle" font-family="Liberation Sans">15</text>
<text x="971.00" y="1273.47" font-size="17" fill="#5f7686" stroke="#5f7686" stroke-width="0.35" text-anchor="middle" font-family="Liberation Sans">16</text>
<text x="971.00" y="1244.90" font-size="17" fill="#5f7686" stroke="#5f7686" stroke-width="0.35" text-anchor="middle" font-family="Liberation Sans">17</text>
<text x="971.00" y="1216.33" font-size="17" fill="#5f7686" stroke="#5f7686" stroke-width="0.35" text-anchor="middle" font-family="Liberation Sans">18</text>
<text x="971.00" y="1187.76" font-size="17" fill="#5f7686" stroke="#5f7686" stroke-width="0.35" text-anchor="middle" font-family="Liberation Sans">19</text>
<text x="971.00" y="1159.19" font-size="17" fill="#5f7686" stroke="#5f7686" stroke-width="0.35" text-anchor="middle" font-family="Liberation Sans">20</text>
<text x="971.00" y="1130.61" font-size="17" fill="#5f7686" stroke="#5f7686" stroke-width="0.35" text-anchor="middle" font-family="Liberation Sans">21</text>
<text x="971.00" y="1102.04" font-size="17" fill="#5f7686" stroke="#5f7686" stroke-width="0.35" text-anchor="middle" font-family="Liberation Sans">22</text>
<text x="971.00" y="1073.47" font-size="17" fill="#5f7686" stroke="#5f7686" stroke-width="0.35" text-anchor="middle" font-family="Liberation Sans">23</text>
<text x="971.00" y="1044.90" font-size="17" fill="#5f7686" stroke="#5f7686" stroke-width="0.35" text-anchor="middle" font-family="Liberation Sans">24</text>
<text x="971.00" y="1016.33" font-size="17" fill="#5f7686" stroke="#5f7686" stroke-width="0.35" text-anchor="middle" font-family="Liberation Sans">25</text>
<text x="971.00" y="987.76" font-size="17" fill="#5f7686" stroke="#5f7686" stroke-width="0.35" text-anchor="middle" font-family="Liberation Sans">26</text>
<text x="971.00" y="959.19" font-size="17" fill="#5f7686" stroke="#5f7686" stroke-width="0.35" text-anchor="middle" font-family="Liberation Sans">27</text>
<text x="971.00" y="930.61" font-size="17" fill="#5f7686" stroke="#5f7686" stroke-width="0.35" text-anchor="middle" font-family="Liberation Sans">28</text>
<text x="971.00" y="902.04" font-size="17" fill="#5f7686" stroke="#5f7686" stroke-width="0.35" text-anchor="middle" font-family="Liberation Sans">29</text>
<text x="971.00" y="873.47" font-size="17" fill="#5f7686" stroke="#5f7686" stroke-width="0.35" text-anchor="middle" font-family="Liberation Sans">30</text>
<text x="971.00" y="844.90" font-size="17" fill="#5f7686" stroke="#5f7686" stroke-width="0.35" text-anchor="middle" font-family="Liberation Sans">31</text>
<text x="971.00" y="816.33" font-size="17" fill="#5f7686" stroke="#5f7686" stroke-width="0.35" text-anchor="middle" font-family="Liberation Sans">32</text>
<text x="971.00" y="787.76" font-size="17" fill="#5f7686" stroke="#5f7686" stroke-width="0.35" text-anchor="middle" font-family="Liberation Sans">33</text>
<text x="971.00" y="759.19" font-size="17" fill="#5f7686" stroke="#5f7686" stroke-width="0.35" text-anchor="middle" font-family="Liberation Sans">34</text>
<text x="971.00" y="730.61" font-size="17" fill="#5f7686" stroke="#5f7686" stroke-width="0.35" text-anchor="middle" font-family="Liberation Sans">35</text>
<text x="971.00" y="702.04" font-size="17" fill="#5f7686" stroke="#5f7686" stroke-width="0.35" text-anchor="middle" font-family="Liberation Sans">36</text>
<text x="971.00" y="673.47" font-size="17" fill="#5f7686" stroke="#5f7686" stroke-width="0.35" text-anchor="middle" font-family="Liberation Sans">37</text>
<text x="971.00" y="644.90" font-size="17" fill="#5f7686" stroke="#5f7686" stroke-width="0.35" text-anchor="middle" font-family="Liberation Sans">38</text>
<text x="971.00" y="616.33" font-size="17" fill="#5f7686" stroke="#5f7686" stroke-width="0.35" text-anchor="middle" font-family="Liberation Sans">39</text>
<text x="971.00" y="587.76" font-size="17" fill="#5f7686" stroke="#5f7686" stroke-width="0.35" text-anchor="middle" font-family="Liberation Sans">40</text>
<text x="971.00" y="559.19" font-size="17" fill="#5f7686" stroke="#5f7686" stroke-width="0.35" text-anchor="middle" font-family="Liberation Sans">41</text>
<rect x="999.20" y="538.80" width="1.20" height="1200.00" fill="#e3e8ee" />
<rect x="1313.40" y="538.80" width="1.20" height="1200.00" fill="#e3e8ee" />
<rect x="1000.00" y="538.80" width="314.00" height="57.14" fill="#d3d3d3" />
<rect x="1000.00" y="538.80" width="314.00" height="3.00" fill="#dedede" />
<rect x="1003" y="546.8" width="4" height="12" rx="2" fill="#9b9b9b"/><rect x="1307" y="546.8" width="4" height="12" rx="2" fill="#9b9b9b"/>
<rect x="1003" y="574.8" width="4" height="12" rx="2" fill="#9b9b9b"/><rect x="1307" y="574.8" width="4" height="12" rx="2" fill="#9b9b9b"/>
<rect x="1000.00" y="595.94" width="314.00" height="28.57" fill="url(#srv1u)" stroke="#111" stroke-width="2"/>
<rect x="1000.00" y="595.94" width="14.00" height="28.57" fill="url(#silverH)" stroke="#111" stroke-width="1.6"/>
<ellipse cx="1007.00" cy="598.94" rx="3.2" ry="2.6" fill="#555" stroke="#111" stroke-width="1.2"/>
<ellipse cx="1007.00" cy="621.51" rx="3.2" ry="2.6" fill="#555" stroke="#111" stroke-width="1.2"/>
<rect x="1000.00" y="609.43" width="14" height="1.6" fill="#333"/>
<rect x="1300.00" y="595.94" width="14.00" height="28.57" fill="url(#silverH)" stroke="#111" stroke-width="1.6"/>
<ellipse cx="1307.00" cy="598.94" rx="3.2" ry="2.6" fill="#555" stroke="#111" stroke-width="1.2"/>
<ellipse cx="1307.00" cy="621.51" rx="3.2" ry="2.6" fill="#555" stroke="#111" stroke-width="1.2"/>
<rect x="1300.00" y="609.43" width="14" height="1.6" fill="#333"/>
<rect x="1030.00" y="601.09" width="60" height="5.71" fill="#e9e9e9" stroke="#111" stroke-width="2"/>
<rect x="1030.00" y="611.37" width="60" height="5.71" fill="#e9e9e9" stroke="#111" stroke-width="2"/>
<rect x="1244.00" y="600.23" width="45" height="20.00" fill="#d0d0d0" stroke="#8c8c8c" stroke-width="1.5"/>
<rect x="1262.00" y="601.66" width="8" height="15.71" fill="#bdbdbd" stroke="#8c8c8c" stroke-width="1"/>
<rect x="1030.00" y="620.23" width="254.00" height="1.6" fill="#a8a8a8"/>
<rect x="1058.00" y="599.30" width="197.00" height="21.70" fill="#6f8393" stroke="#111" stroke-width="2.4"/>
<text x="1156.50" y="616.20" font-size="16.8" fill="#fff" text-anchor="middle" font-family="Liberation Sans">wh-lab-sw-02 - Switch 3</text>
<rect x="1000.00" y="653.09" width="314.00" height="285.71" fill="url(#bladeSide)" />
<rect x="1011.00" y="653.09" width="292.00" height="285.71" fill="#3a3a3a" />
<rect x="1011.00" y="653.09" width="292.00" height="4.50" fill="#4a4a4a" />
<rect x="1011.00" y="653.09" width="292.00" height="1.50" fill="#222" />
<rect x="1013.50" y="657.09" width="3.50" height="240.00" fill="#8f8f8f" />
<rect x="1296.50" y="657.09" width="3.50" height="240.00" fill="#8f8f8f" />
<rect x="1011.00" y="659.09" width="2.80" height="160.00" fill="#0d0d0d" />
<rect x="1300.00" y="659.09" width="2.80" height="160.00" fill="#0d0d0d" />
<rect x="1016.80" y="656.00" width="33.95" height="33.00" fill="#7b7b7b" />
<rect x="1016.80" y="657.00" width="33.95" height="2.50" fill="#c9c9c9" />
<rect x="1019.30" y="664.00" width="7.00" height="14.00" fill="#0c0c0c" />
<rect x="1019.30" y="679.00" width="7.00" height="3.00" fill="#e6e6e6" />
<rect x="1028.80" y="664.00" width="19.50" height="20.00" fill="url(#gSlots)" />
<rect x="1016.80" y="687.00" width="33.95" height="2.00" fill="#9a9a9a" />
<rect x="1016.80" y="690.00" width="33.95" height="56.00" fill="#3c3c3c" />
<rect x="1017.80" y="692.00" width="7.00" height="52.00" fill="url(#gVert)" />
<rect x="1026.30" y="692.00" width="6.50" height="38.00" fill="#8d8d8d" />
<rect x="1028.30" y="696.00" width="2.50" height="30.00" fill="#5b5b5b" />
<rect x="1026.30" y="730.00" width="6.5" height="7" rx="2" fill="#c0353b"/>
<rect x="1026.80" y="738.00" width="5.50" height="4.00" fill="#bdbdbd" />
<rect x="1038.30" y="692.00" width="6.50" height="38.00" fill="#8d8d8d" />
<rect x="1040.30" y="696.00" width="2.50" height="30.00" fill="#5b5b5b" />
<rect x="1038.30" y="730.00" width="6.5" height="7" rx="2" fill="#c0353b"/>
<rect x="1038.80" y="738.00" width="5.50" height="4.00" fill="#bdbdbd" />
<rect x="1033.80" y="693.00" width="3.00" height="50.00" fill="#6f6f6f" />
<rect x="1046.30" y="692.00" width="3.50" height="52.00" fill="#6b6b6b" />
<rect x="1016.80" y="746.00" width="33.95" height="3.60" fill="#41d64a" />
<rect x="1016.80" y="749.60" width="33.95" height="1.20" fill="#1d5a22" />
<rect x="1016.80" y="751.00" width="33.95" height="23.00" fill="#5f5f5f" />
<rect x="1017.80" y="752.00" width="10.00" height="21.00" fill="#7d7d7d" />
<circle cx="1022.80" cy="757.00" r="2.6" fill="#2bdc3a"/><circle cx="1022.80" cy="766.00" r="1.6" fill="#2bdc3a"/>
<rect x="1028.80" y="753.00" width="20.00" height="19.00" fill="url(#gVert)" />
<rect x="1016.80" y="774.50" width="33.95" height="3.00" fill="#cfcfcf" />
<rect x="1016.80" y="777.50" width="33.95" height="2.50" fill="#1b1b1b" />
<rect x="1051.75" y="656.00" width="33.95" height="33.00" fill="#7b7b7b" />
<rect x="1051.75" y="657.00" width="33.95" height="2.50" fill="#c9c9c9" />
<rect x="1054.25" y="664.00" width="7.00" height="14.00" fill="#0c0c0c" />
<rect x="1054.25" y="679.00" width="7.00" height="3.00" fill="#e6e6e6" />
<rect x="1063.75" y="664.00" width="19.50" height="20.00" fill="url(#gSlots)" />
<rect x="1051.75" y="687.00" width="33.95" height="2.00" fill="#9a9a9a" />
<rect x="1051.75" y="690.00" width="33.95" height="56.00" fill="#3c3c3c" />
<rect x="1052.75" y="692.00" width="7.00" height="52.00" fill="url(#gVert)" />
<rect x="1061.25" y="692.00" width="6.50" height="38.00" fill="#8d8d8d" />
<rect x="1063.25" y="696.00" width="2.50" height="30.00" fill="#5b5b5b" />
<rect x="1061.25" y="730.00" width="6.5" height="7" rx="2" fill="#c0353b"/>
<rect x="1061.75" y="738.00" width="5.50" height="4.00" fill="#bdbdbd" />
<rect x="1073.25" y="692.00" width="6.50" height="38.00" fill="#8d8d8d" />
<rect x="1075.25" y="696.00" width="2.50" height="30.00" fill="#5b5b5b" />
<rect x="1073.25" y="730.00" width="6.5" height="7" rx="2" fill="#c0353b"/>
<rect x="1073.75" y="738.00" width="5.50" height="4.00" fill="#bdbdbd" />
<rect x="1068.75" y="693.00" width="3.00" height="50.00" fill="#6f6f6f" />
<rect x="1081.25" y="692.00" width="3.50" height="52.00" fill="#6b6b6b" />
<rect x="1051.75" y="746.00" width="33.95" height="3.60" fill="#41d64a" />
<rect x="1051.75" y="749.60" width="33.95" height="1.20" fill="#1d5a22" />
<rect x="1051.75" y="751.00" width="33.95" height="23.00" fill="#5f5f5f" />
<rect x="1052.75" y="752.00" width="10.00" height="21.00" fill="#7d7d7d" />
<circle cx="1057.75" cy="757.00" r="2.6" fill="#2bdc3a"/><circle cx="1057.75" cy="766.00" r="1.6" fill="#2bdc3a"/>
<rect x="1063.75" y="753.00" width="20.00" height="19.00" fill="url(#gVert)" />
<rect x="1051.75" y="774.50" width="33.95" height="3.00" fill="#cfcfcf" />
<rect x="1051.75" y="777.50" width="33.95" height="2.50" fill="#1b1b1b" />
<rect x="1086.70" y="656.00" width="33.95" height="33.00" fill="#7b7b7b" />
<rect x="1086.70" y="657.00" width="33.95" height="2.50" fill="#c9c9c9" />
<rect x="1089.20" y="664.00" width="7.00" height="14.00" fill="#0c0c0c" />
<rect x="1089.20" y="679.00" width="7.00" height="3.00" fill="#e6e6e6" />
<rect x="1098.70" y="664.00" width="19.50" height="20.00" fill="url(#gSlots)" />
<rect x="1086.70" y="687.00" width="33.95" height="2.00" fill="#9a9a9a" />
<rect x="1086.70" y="690.00" width="33.95" height="56.00" fill="#3c3c3c" />
<rect x="1087.70" y="692.00" width="7.00" height="52.00" fill="url(#gVert)" />
<rect x="1096.20" y="692.00" width="6.50" height="38.00" fill="#8d8d8d" />
<rect x="1098.20" y="696.00" width="2.50" height="30.00" fill="#5b5b5b" />
<rect x="1096.20" y="730.00" width="6.5" height="7" rx="2" fill="#c0353b"/>
<rect x="1096.70" y="738.00" width="5.50" height="4.00" fill="#bdbdbd" />
<rect x="1108.20" y="692.00" width="6.50" height="38.00" fill="#8d8d8d" />
<rect x="1110.20" y="696.00" width="2.50" height="30.00" fill="#5b5b5b" />
<rect x="1108.20" y="730.00" width="6.5" height="7" rx="2" fill="#c0353b"/>
<rect x="1108.70" y="738.00" width="5.50" height="4.00" fill="#bdbdbd" />
<rect x="1103.70" y="693.00" width="3.00" height="50.00" fill="#6f6f6f" />
<rect x="1116.20" y="692.00" width="3.50" height="52.00" fill="#6b6b6b" />
<rect x="1086.70" y="746.00" width="33.95" height="3.60" fill="#41d64a" />
<rect x="1086.70" y="749.60" width="33.95" height="1.20" fill="#1d5a22" />
<rect x="1086.70" y="751.00" width="33.95" height="23.00" fill="#5f5f5f" />
<rect x="1087.70" y="752.00" width="10.00" height="21.00" fill="#7d7d7d" />
<circle cx="1092.70" cy="757.00" r="2.6" fill="#2bdc3a"/><circle cx="1092.70" cy="766.00" r="1.6" fill="#2bdc3a"/>
<rect x="1098.70" y="753.00" width="20.00" height="19.00" fill="url(#gVert)" />
<rect x="1086.70" y="774.50" width="33.95" height="3.00" fill="#cfcfcf" />
<rect x="1086.70" y="777.50" width="33.95" height="2.50" fill="#1b1b1b" />
<rect x="1121.65" y="656.00" width="33.95" height="33.00" fill="#7b7b7b" />
<rect x="1121.65" y="657.00" width="33.95" height="2.50" fill="#c9c9c9" />
<rect x="1124.15" y="664.00" width="7.00" height="14.00" fill="#0c0c0c" />
<rect x="1124.15" y="679.00" width="7.00" height="3.00" fill="#e6e6e6" />
<rect x="1133.65" y="664.00" width="19.50" height="20.00" fill="url(#gSlots)" />
<rect x="1121.65" y="687.00" width="33.95" height="2.00" fill="#9a9a9a" />
<rect x="1121.65" y="690.00" width="33.95" height="56.00" fill="#3c3c3c" />
<rect x="1122.65" y="692.00" width="7.00" height="52.00" fill="url(#gVert)" />
<rect x="1131.15" y="692.00" width="6.50" height="38.00" fill="#8d8d8d" />
<rect x="1133.15" y="696.00" width="2.50" height="30.00" fill="#5b5b5b" />
<rect x="1131.15" y="730.00" width="6.5" height="7" rx="2" fill="#c0353b"/>
<rect x="1131.65" y="738.00" width="5.50" height="4.00" fill="#bdbdbd" />
<rect x="1143.15" y="692.00" width="6.50" height="38.00" fill="#8d8d8d" />
<rect x="1145.15" y="696.00" width="2.50" height="30.00" fill="#5b5b5b" />
<rect x="1143.15" y="730.00" width="6.5" height="7" rx="2" fill="#c0353b"/>
<rect x="1143.65" y="738.00" width="5.50" height="4.00" fill="#bdbdbd" />
<rect x="1138.65" y="693.00" width="3.00" height="50.00" fill="#6f6f6f" />
<rect x="1151.15" y="692.00" width="3.50" height="52.00" fill="#6b6b6b" />
<rect x="1121.65" y="746.00" width="33.95" height="3.60" fill="#41d64a" />
<rect x="1121.65" y="749.60" width="33.95" height="1.20" fill="#1d5a22" />
<rect x="1121.65" y="751.00" width="33.95" height="23.00" fill="#5f5f5f" />
<rect x="1122.65" y="752.00" width="10.00" height="21.00" fill="#7d7d7d" />
<circle cx="1127.65" cy="757.00" r="2.6" fill="#2bdc3a"/><circle cx="1127.65" cy="766.00" r="1.6" fill="#2bdc3a"/>
<rect x="1133.65" y="753.00" width="20.00" height="19.00" fill="url(#gVert)" />
<rect x="1121.65" y="774.50" width="33.95" height="3.00" fill="#cfcfcf" />
<rect x="1121.65" y="777.50" width="33.95" height="2.50" fill="#1b1b1b" />
<rect x="1156.60" y="656.00" width="33.95" height="33.00" fill="#7b7b7b" />
<rect x="1156.60" y="657.00" width="33.95" height="2.50" fill="#c9c9c9" />
<rect x="1159.10" y="664.00" width="7.00" height="14.00" fill="#0c0c0c" />
<rect x="1159.10" y="679.00" width="7.00" height="3.00" fill="#e6e6e6" />
<rect x="1168.60" y="664.00" width="19.50" height="20.00" fill="url(#gSlots)" />
<rect x="1156.60" y="687.00" width="33.95" height="2.00" fill="#9a9a9a" />
<rect x="1156.60" y="690.00" width="33.95" height="56.00" fill="#3c3c3c" />
<rect x="1157.60" y="692.00" width="7.00" height="52.00" fill="url(#gVert)" />
<rect x="1166.10" y="692.00" width="6.50" height="38.00" fill="#8d8d8d" />
<rect x="1168.10" y="696.00" width="2.50" height="30.00" fill="#5b5b5b" />
<rect x="1166.10" y="730.00" width="6.5" height="7" rx="2" fill="#c0353b"/>
<rect x="1166.60" y="738.00" width="5.50" height="4.00" fill="#bdbdbd" />
<rect x="1178.10" y="692.00" width="6.50" height="38.00" fill="#8d8d8d" />
<rect x="1180.10" y="696.00" width="2.50" height="30.00" fill="#5b5b5b" />
<rect x="1178.10" y="730.00" width="6.5" height="7" rx="2" fill="#c0353b"/>
<rect x="1178.60" y="738.00" width="5.50" height="4.00" fill="#bdbdbd" />
<rect x="1173.60" y="693.00" width="3.00" height="50.00" fill="#6f6f6f" />
<rect x="1186.10" y="692.00" width="3.50" height="52.00" fill="#6b6b6b" />
<rect x="1156.60" y="746.00" width="33.95" height="3.60" fill="#41d64a" />
<rect x="1156.60" y="749.60" width="33.95" height="1.20" fill="#1d5a22" />
<rect x="1156.60" y="751.00" width="33.95" height="23.00" fill="#5f5f5f" />
<rect x="1157.60" y="752.00" width="10.00" height="21.00" fill="#7d7d7d" />
<circle cx="1162.60" cy="757.00" r="2.6" fill="#2bdc3a"/><circle cx="1162.60" cy="766.00" r="1.6" fill="#2bdc3a"/>
<rect x="1168.60" y="753.00" width="20.00" height="19.00" fill="url(#gVert)" />
<rect x="1156.60" y="774.50" width="33.95" height="3.00" fill="#cfcfcf" />
<rect x="1156.60" y="777.50" width="33.95" height="2.50" fill="#1b1b1b" />
<rect x="1191.55" y="656.00" width="33.95" height="33.00" fill="#7b7b7b" />
<rect x="1191.55" y="657.00" width="33.95" height="2.50" fill="#c9c9c9" />
<rect x="1194.05" y="664.00" width="7.00" height="14.00" fill="#0c0c0c" />
<rect x="1194.05" y="679.00" width="7.00" height="3.00" fill="#e6e6e6" />
<rect x="1203.55" y="664.00" width="19.50" height="20.00" fill="url(#gSlots)" />
<rect x="1191.55" y="687.00" width="33.95" height="2.00" fill="#9a9a9a" />
<rect x="1191.55" y="690.00" width="33.95" height="56.00" fill="#3c3c3c" />
<rect x="1192.55" y="692.00" width="7.00" height="52.00" fill="url(#gVert)" />
<rect x="1201.05" y="692.00" width="6.50" height="38.00" fill="#8d8d8d" />
<rect x="1203.05" y="696.00" width="2.50" height="30.00" fill="#5b5b5b" />
<rect x="1201.05" y="730.00" width="6.5" height="7" rx="2" fill="#c0353b"/>
<rect x="1201.55" y="738.00" width="5.50" height="4.00" fill="#bdbdbd" />
<rect x="1213.05" y="692.00" width="6.50" height="38.00" fill="#8d8d8d" />
<rect x="1215.05" y="696.00" width="2.50" height="30.00" fill="#5b5b5b" />
<rect x="1213.05" y="730.00" width="6.5" height="7" rx="2" fill="#c0353b"/>
<rect x="1213.55" y="738.00" width="5.50" height="4.00" fill="#bdbdbd" />
<rect x="1208.55" y="693.00" width="3.00" height="50.00" fill="#6f6f6f" />
<rect x="1221.05" y="692.00" width="3.50" height="52.00" fill="#6b6b6b" />
<rect x="1191.55" y="746.00" width="33.95" height="3.60" fill="#41d64a" />
<rect x="1191.55" y="749.60" width="33.95" height="1.20" fill="#1d5a22" />
<rect x="1191.55" y="751.00" width="33.95" height="23.00" fill="#5f5f5f" />
<rect x="1192.55" y="752.00" width="10.00" height="21.00" fill="#7d7d7d" />
<circle cx="1197.55" cy="757.00" r="2.6" fill="#2bdc3a"/><circle cx="1197.55" cy="766.00" r="1.6" fill="#2bdc3a"/>
<rect x="1203.55" y="753.00" width="20.00" height="19.00" fill="url(#gVert)" />
<rect x="1191.55" y="774.50" width="33.95" height="3.00" fill="#cfcfcf" />
<rect x="1191.55" y="777.50" width="33.95" height="2.50" fill="#1b1b1b" />
<rect x="1226.50" y="656.00" width="33.95" height="33.00" fill="#7b7b7b" />
<rect x="1226.50" y="657.00" width="33.95" height="2.50" fill="#c9c9c9" />
<rect x="1229.00" y="664.00" width="7.00" height="14.00" fill="#0c0c0c" />
<rect x="1229.00" y="679.00" width="7.00" height="3.00" fill="#e6e6e6" />
<rect x="1238.50" y="664.00" width="19.50" height="20.00" fill="url(#gSlots)" />
<rect x="1226.50" y="687.00" width="33.95" height="2.00" fill="#9a9a9a" />
<rect x="1226.50" y="690.00" width="33.95" height="56.00" fill="#3c3c3c" />
<rect x="1227.50" y="692.00" width="7.00" height="52.00" fill="url(#gVert)" />
<rect x="1236.00" y="692.00" width="6.50" height="38.00" fill="#8d8d8d" />
<rect x="1238.00" y="696.00" width="2.50" height="30.00" fill="#5b5b5b" />
<rect x="1236.00" y="730.00" width="6.5" height="7" rx="2" fill="#c0353b"/>
<rect x="1236.50" y="738.00" width="5.50" height="4.00" fill="#bdbdbd" />
<rect x="1248.00" y="692.00" width="6.50" height="38.00" fill="#8d8d8d" />
<rect x="1250.00" y="696.00" width="2.50" height="30.00" fill="#5b5b5b" />
<rect x="1248.00" y="730.00" width="6.5" height="7" rx="2" fill="#c0353b"/>
<rect x="1248.50" y="738.00" width="5.50" height="4.00" fill="#bdbdbd" />
<rect x="1243.50" y="693.00" width="3.00" height="50.00" fill="#6f6f6f" />
<rect x="1256.00" y="692.00" width="3.50" height="52.00" fill="#6b6b6b" />
<rect x="1226.50" y="746.00" width="33.95" height="3.60" fill="#41d64a" />
<rect x="1226.50" y="749.60" width="33.95" height="1.20" fill="#1d5a22" />
<rect x="1226.50" y="751.00" width="33.95" height="23.00" fill="#5f5f5f" />
<rect x="1227.50" y="752.00" width="10.00" height="21.00" fill="#7d7d7d" />
<circle cx="1232.50" cy="757.00" r="2.6" fill="#2bdc3a"/><circle cx="1232.50" cy="766.00" r="1.6" fill="#2bdc3a"/>
<rect x="1238.50" y="753.00" width="20.00" height="19.00" fill="url(#gVert)" />
<rect x="1226.50" y="774.50" width="33.95" height="3.00" fill="#cfcfcf" />
<rect x="1226.50" y="777.50" width="33.95" height="2.50" fill="#1b1b1b" />
<rect x="1261.45" y="656.00" width="33.95" height="33.00" fill="#7b7b7b" />
<rect x="1261.45" y="657.00" width="33.95" height="2.50" fill="#c9c9c9" />
<rect x="1263.95" y="664.00" width="7.00" height="14.00" fill="#0c0c0c" />
<rect x="1263.95" y="679.00" width="7.00" height="3.00" fill="#e6e6e6" />
<rect x="1273.45" y="664.00" width="19.50" height="20.00" fill="url(#gSlots)" />
<rect x="1261.45" y="687.00" width="33.95" height="2.00" fill="#9a9a9a" />
<rect x="1261.45" y="690.00" width="33.95" height="56.00" fill="#3c3c3c" />
<rect x="1262.45" y="692.00" width="7.00" height="52.00" fill="url(#gVert)" />
<rect x="1270.95" y="692.00" width="6.50" height="38.00" fill="#8d8d8d" />
<rect x="1272.95" y="696.00" width="2.50" height="30.00" fill="#5b5b5b" />
<rect x="1270.95" y="730.00" width="6.5" height="7" rx="2" fill="#c0353b"/>
<rect x="1271.45" y="738.00" width="5.50" height="4.00" fill="#bdbdbd" />
<rect x="1282.95" y="692.00" width="6.50" height="38.00" fill="#8d8d8d" />
<rect x="1284.95" y="696.00" width="2.50" height="30.00" fill="#5b5b5b" />
<rect x="1282.95" y="730.00" width="6.5" height="7" rx="2" fill="#c0353b"/>
<rect x="1283.45" y="738.00" width="5.50" height="4.00" fill="#bdbdbd" />
<rect x="1278.45" y="693.00" width="3.00" height="50.00" fill="#6f6f6f" />
<rect x="1290.95" y="692.00" width="3.50" height="52.00" fill="#6b6b6b" />
<rect x="1261.45" y="746.00" width="33.95" height="3.60" fill="#41d64a" />
<rect x="1261.45" y="749.60" width="33.95" height="1.20" fill="#1d5a22" />
<rect x="1261.45" y="751.00" width="33.95" height="23.00" fill="#5f5f5f" />
<rect x="1262.45" y="752.00" width="10.00" height="21.00" fill="#7d7d7d" />
<circle cx="1267.45" cy="757.00" r="2.6" fill="#2bdc3a"/><circle cx="1267.45" cy="766.00" r="1.6" fill="#2bdc3a"/>
<rect x="1273.45" y="753.00" width="20.00" height="19.00" fill="url(#gVert)" />
<rect x="1261.45" y="774.50" width="33.95" height="3.00" fill="#cfcfcf" />
<rect x="1261.45" y="777.50" width="33.95" height="2.50" fill="#1b1b1b" />
<rect x="1016.80" y="781.00" width="33.95" height="33.00" fill="#7b7b7b" />
<rect x="1016.80" y="782.00" width="33.95" height="2.50" fill="#c9c9c9" />
<rect x="1019.30" y="789.00" width="7.00" height="14.00" fill="#0c0c0c" />
<rect x="1019.30" y="804.00" width="7.00" height="3.00" fill="#e6e6e6" />
<rect x="1028.80" y="789.00" width="19.50" height="20.00" fill="url(#gSlots)" />
<rect x="1016.80" y="812.00" width="33.95" height="2.00" fill="#9a9a9a" />
<rect x="1016.80" y="815.00" width="33.95" height="56.00" fill="#3c3c3c" />
<rect x="1017.80" y="817.00" width="7.00" height="52.00" fill="url(#gVert)" />
<rect x="1026.30" y="817.00" width="6.50" height="38.00" fill="#8d8d8d" />
<rect x="1028.30" y="821.00" width="2.50" height="30.00" fill="#5b5b5b" />
<rect x="1026.30" y="855.00" width="6.5" height="7" rx="2" fill="#c0353b"/>
<rect x="1026.80" y="863.00" width="5.50" height="4.00" fill="#bdbdbd" />
<rect x="1038.30" y="817.00" width="6.50" height="38.00" fill="#8d8d8d" />
<rect x="1040.30" y="821.00" width="2.50" height="30.00" fill="#5b5b5b" />
<rect x="1038.30" y="855.00" width="6.5" height="7" rx="2" fill="#c0353b"/>
<rect x="1038.80" y="863.00" width="5.50" height="4.00" fill="#bdbdbd" />
<rect x="1033.80" y="818.00" width="3.00" height="50.00" fill="#6f6f6f" />
<rect x="1046.30" y="817.00" width="3.50" height="52.00" fill="#6b6b6b" />
<rect x="1016.80" y="871.00" width="33.95" height="3.60" fill="#41d64a" />
<rect x="1016.80" y="874.60" width="33.95" height="1.20" fill="#1d5a22" />
<rect x="1016.80" y="876.00" width="33.95" height="23.00" fill="#5f5f5f" />
<rect x="1017.80" y="877.00" width="10.00" height="21.00" fill="#7d7d7d" />
<circle cx="1022.80" cy="882.00" r="2.6" fill="#2bdc3a"/><circle cx="1022.80" cy="891.00" r="1.6" fill="#2bdc3a"/>
<rect x="1028.80" y="878.00" width="20.00" height="19.00" fill="url(#gVert)" />
<rect x="1016.80" y="899.50" width="33.95" height="3.00" fill="#cfcfcf" />
<rect x="1016.80" y="902.50" width="33.95" height="2.50" fill="#1b1b1b" />
<rect x="1051.75" y="781.00" width="33.95" height="33.00" fill="#7b7b7b" />
<rect x="1051.75" y="782.00" width="33.95" height="2.50" fill="#c9c9c9" />
<rect x="1054.25" y="789.00" width="7.00" height="14.00" fill="#0c0c0c" />
<rect x="1054.25" y="804.00" width="7.00" height="3.00" fill="#e6e6e6" />
<rect x="1063.75" y="789.00" width="19.50" height="20.00" fill="url(#gSlots)" />
<rect x="1051.75" y="812.00" width="33.95" height="2.00" fill="#9a9a9a" />
<rect x="1051.75" y="815.00" width="33.95" height="56.00" fill="#3c3c3c" />
<rect x="1052.75" y="817.00" width="7.00" height="52.00" fill="url(#gVert)" />
<rect x="1061.25" y="817.00" width="6.50" height="38.00" fill="#8d8d8d" />
<rect x="1063.25" y="821.00" width="2.50" height="30.00" fill="#5b5b5b" />
<rect x="1061.25" y="855.00" width="6.5" height="7" rx="2" fill="#c0353b"/>
<rect x="1061.75" y="863.00" width="5.50" height="4.00" fill="#bdbdbd" />
<rect x="1073.25" y="817.00" width="6.50" height="38.00" fill="#8d8d8d" />
<rect x="1075.25" y="821.00" width="2.50" height="30.00" fill="#5b5b5b" />
<rect x="1073.25" y="855.00" width="6.5" height="7" rx="2" fill="#c0353b"/>
<rect x="1073.75" y="863.00" width="5.50" height="4.00" fill="#bdbdbd" />
<rect x="1068.75" y="818.00" width="3.00" height="50.00" fill="#6f6f6f" />
<rect x="1081.25" y="817.00" width="3.50" height="52.00" fill="#6b6b6b" />
<rect x="1051.75" y="871.00" width="33.95" height="3.60" fill="#41d64a" />
<rect x="1051.75" y="874.60" width="33.95" height="1.20" fill="#1d5a22" />
<rect x="1051.75" y="876.00" width="33.95" height="23.00" fill="#5f5f5f" />
<rect x="1052.75" y="877.00" width="10.00" height="21.00" fill="#7d7d7d" />
<circle cx="1057.75" cy="882.00" r="2.6" fill="#2bdc3a"/><circle cx="1057.75" cy="891.00" r="1.6" fill="#2bdc3a"/>
<rect x="1063.75" y="878.00" width="20.00" height="19.00" fill="url(#gVert)" />
<rect x="1051.75" y="899.50" width="33.95" height="3.00" fill="#cfcfcf" />
<rect x="1051.75" y="902.50" width="33.95" height="2.50" fill="#1b1b1b" />
<rect x="1086.70" y="781.00" width="33.95" height="33.00" fill="#7b7b7b" />
<rect x="1086.70" y="782.00" width="33.95" height="2.50" fill="#c9c9c9" />
<rect x="1089.20" y="789.00" width="7.00" height="14.00" fill="#0c0c0c" />
<rect x="1089.20" y="804.00" width="7.00" height="3.00" fill="#e6e6e6" />
<rect x="1098.70" y="789.00" width="19.50" height="20.00" fill="url(#gSlots)" />
<rect x="1086.70" y="812.00" width="33.95" height="2.00" fill="#9a9a9a" />
<rect x="1086.70" y="815.00" width="33.95" height="56.00" fill="#3c3c3c" />
<rect x="1087.70" y="817.00" width="7.00" height="52.00" fill="url(#gVert)" />
<rect x="1096.20" y="817.00" width="6.50" height="38.00" fill="#8d8d8d" />
<rect x="1098.20" y="821.00" width="2.50" height="30.00" fill="#5b5b5b" />
<rect x="1096.20" y="855.00" width="6.5" height="7" rx="2" fill="#c0353b"/>
<rect x="1096.70" y="863.00" width="5.50" height="4.00" fill="#bdbdbd" />
<rect x="1108.20" y="817.00" width="6.50" height="38.00" fill="#8d8d8d" />
<rect x="1110.20" y="821.00" width="2.50" height="30.00" fill="#5b5b5b" />
<rect x="1108.20" y="855.00" width="6.5" height="7" rx="2" fill="#c0353b"/>
<rect x="1108.70" y="863.00" width="5.50" height="4.00" fill="#bdbdbd" />
<rect x="1103.70" y="818.00" width="3.00" height="50.00" fill="#6f6f6f" />
<rect x="1116.20" y="817.00" width="3.50" height="52.00" fill="#6b6b6b" />
<rect x="1086.70" y="871.00" width="33.95" height="3.60" fill="#41d64a" />
<rect x="1086.70" y="874.60" width="33.95" height="1.20" fill="#1d5a22" />
<rect x="1086.70" y="876.00" width="33.95" height="23.00" fill="#5f5f5f" />
<rect x="1087.70" y="877.00" width="10.00" height="21.00" fill="#7d7d7d" />
<circle cx="1092.70" cy="882.00" r="2.6" fill="#2bdc3a"/><circle cx="1092.70" cy="891.00" r="1.6" fill="#2bdc3a"/>
<rect x="1098.70" y="878.00" width="20.00" height="19.00" fill="url(#gVert)" />
<rect x="1086.70" y="899.50" width="33.95" height="3.00" fill="#cfcfcf" />
<rect x="1086.70" y="902.50" width="33.95" height="2.50" fill="#1b1b1b" />
<rect x="1121.65" y="781.00" width="33.95" height="33.00" fill="#7b7b7b" />
<rect x="1121.65" y="782.00" width="33.95" height="2.50" fill="#c9c9c9" />
<rect x="1124.15" y="789.00" width="7.00" height="14.00" fill="#0c0c0c" />
<rect x="1124.15" y="804.00" width="7.00" height="3.00" fill="#e6e6e6" />
<rect x="1133.65" y="789.00" width="19.50" height="20.00" fill="url(#gSlots)" />
<rect x="1121.65" y="812.00" width="33.95" height="2.00" fill="#9a9a9a" />
<rect x="1121.65" y="815.00" width="33.95" height="56.00" fill="#3c3c3c" />
<rect x="1122.65" y="817.00" width="7.00" height="52.00" fill="url(#gVert)" />
<rect x="1131.15" y="817.00" width="6.50" height="38.00" fill="#8d8d8d" />
<rect x="1133.15" y="821.00" width="2.50" height="30.00" fill="#5b5b5b" />
<rect x="1131.15" y="855.00" width="6.5" height="7" rx="2" fill="#c0353b"/>
<rect x="1131.65" y="863.00" width="5.50" height="4.00" fill="#bdbdbd" />
<rect x="1143.15" y="817.00" width="6.50" height="38.00" fill="#8d8d8d" />
<rect x="1145.15" y="821.00" width="2.50" height="30.00" fill="#5b5b5b" />
<rect x="1143.15" y="855.00" width="6.5" height="7" rx="2" fill="#c0353b"/>
<rect x="1143.65" y="863.00" width="5.50" height="4.00" fill="#bdbdbd" />
<rect x="1138.65" y="818.00" width="3.00" height="50.00" fill="#6f6f6f" />
<rect x="1151.15" y="817.00" width="3.50" height="52.00" fill="#6b6b6b" />
<rect x="1121.65" y="871.00" width="33.95" height="3.60" fill="#41d64a" />
<rect x="1121.65" y="874.60" width="33.95" height="1.20" fill="#1d5a22" />
<rect x="1121.65" y="876.00" width="33.95" height="23.00" fill="#5f5f5f" />
<rect x="1122.65" y="877.00" width="10.00" height="21.00" fill="#7d7d7d" />
<circle cx="1127.65" cy="882.00" r="2.6" fill="#2bdc3a"/><circle cx="1127.65" cy="891.00" r="1.6" fill="#2bdc3a"/>
<rect x="1133.65" y="878.00" width="20.00" height="19.00" fill="url(#gVert)" />
<rect x="1121.65" y="899.50" width="33.95" height="3.00" fill="#cfcfcf" />
<rect x="1121.65" y="902.50" width="33.95" height="2.50" fill="#1b1b1b" />
<rect x="1156.60" y="781.00" width="33.95" height="33.00" fill="#7b7b7b" />
<rect x="1156.60" y="782.00" width="33.95" height="2.50" fill="#c9c9c9" />
<rect x="1159.10" y="789.00" width="7.00" height="14.00" fill="#0c0c0c" />
<rect x="1159.10" y="804.00" width="7.00" height="3.00" fill="#e6e6e6" />
<rect x="1168.60" y="789.00" width="19.50" height="20.00" fill="url(#gSlots)" />
<rect x="1156.60" y="812.00" width="33.95" height="2.00" fill="#9a9a9a" />
<rect x="1156.60" y="815.00" width="33.95" height="56.00" fill="#3c3c3c" />
<rect x="1157.60" y="817.00" width="7.00" height="52.00" fill="url(#gVert)" />
<rect x="1166.10" y="817.00" width="6.50" height="38.00" fill="#8d8d8d" />
<rect x="1168.10" y="821.00" width="2.50" height="30.00" fill="#5b5b5b" />
<rect x="1166.10" y="855.00" width="6.5" height="7" rx="2" fill="#c0353b"/>
<rect x="1166.60" y="863.00" width="5.50" height="4.00" fill="#bdbdbd" />
<rect x="1178.10" y="817.00" width="6.50" height="38.00" fill="#8d8d8d" />
<rect x="1180.10" y="821.00" width="2.50" height="30.00" fill="#5b5b5b" />
<rect x="1178.10" y="855.00" width="6.5" height="7" rx="2" fill="#c0353b"/>
<rect x="1178.60" y="863.00" width="5.50" height="4.00" fill="#bdbdbd" />
<rect x="1173.60" y="818.00" width="3.00" height="50.00" fill="#6f6f6f" />
<rect x="1186.10" y="817.00" width="3.50" height="52.00" fill="#6b6b6b" />
<rect x="1156.60" y="871.00" width="33.95" height="3.60" fill="#41d64a" />
<rect x="1156.60" y="874.60" width="33.95" height="1.20" fill="#1d5a22" />
<rect x="1156.60" y="876.00" width="33.95" height="23.00" fill="#5f5f5f" />
<rect x="1157.60" y="877.00" width="10.00" height="21.00" fill="#7d7d7d" />
<circle cx="1162.60" cy="882.00" r="2.6" fill="#2bdc3a"/><circle cx="1162.60" cy="891.00" r="1.6" fill="#2bdc3a"/>
<rect x="1168.60" y="878.00" width="20.00" height="19.00" fill="url(#gVert)" />
<rect x="1156.60" y="899.50" width="33.95" height="3.00" fill="#cfcfcf" />
<rect x="1156.60" y="902.50" width="33.95" height="2.50" fill="#1b1b1b" />
<rect x="1191.55" y="781.00" width="33.95" height="33.00" fill="#7b7b7b" />
<rect x="1191.55" y="782.00" width="33.95" height="2.50" fill="#c9c9c9" />
<rect x="1194.05" y="789.00" width="7.00" height="14.00" fill="#0c0c0c" />
<rect x="1194.05" y="804.00" width="7.00" height="3.00" fill="#e6e6e6" />
<rect x="1203.55" y="789.00" width="19.50" height="20.00" fill="url(#gSlots)" />
<rect x="1191.55" y="812.00" width="33.95" height="2.00" fill="#9a9a9a" />
<rect x="1191.55" y="815.00" width="33.95" height="56.00" fill="#3c3c3c" />
<rect x="1192.55" y="817.00" width="7.00" height="52.00" fill="url(#gVert)" />
<rect x="1201.05" y="817.00" width="6.50" height="38.00" fill="#8d8d8d" />
<rect x="1203.05" y="821.00" width="2.50" height="30.00" fill="#5b5b5b" />
<rect x="1201.05" y="855.00" width="6.5" height="7" rx="2" fill="#c0353b"/>
<rect x="1201.55" y="863.00" width="5.50" height="4.00" fill="#bdbdbd" />
<rect x="1213.05" y="817.00" width="6.50" height="38.00" fill="#8d8d8d" />
<rect x="1215.05" y="821.00" width="2.50" height="30.00" fill="#5b5b5b" />
<rect x="1213.05" y="855.00" width="6.5" height="7" rx="2" fill="#c0353b"/>
<rect x="1213.55" y="863.00" width="5.50" height="4.00" fill="#bdbdbd" />
<rect x="1208.55" y="818.00" width="3.00" height="50.00" fill="#6f6f6f" />
<rect x="1221.05" y="817.00" width="3.50" height="52.00" fill="#6b6b6b" />
<rect x="1191.55" y="871.00" width="33.95" height="3.60" fill="#41d64a" />
<rect x="1191.55" y="874.60" width="33.95" height="1.20" fill="#1d5a22" />
<rect x="1191.55" y="876.00" width="33.95" height="23.00" fill="#5f5f5f" />
<rect x="1192.55" y="877.00" width="10.00" height="21.00" fill="#7d7d7d" />
<circle cx="1197.55" cy="882.00" r="2.6" fill="#2bdc3a"/><circle cx="1197.55" cy="891.00" r="1.6" fill="#2bdc3a"/>
<rect x="1203.55" y="878.00" width="20.00" height="19.00" fill="url(#gVert)" />
<rect x="1191.55" y="899.50" width="33.95" height="3.00" fill="#cfcfcf" />
<rect x="1191.55" y="902.50" width="33.95" height="2.50" fill="#1b1b1b" />
<rect x="1226.50" y="781.00" width="33.95" height="33.00" fill="#7b7b7b" />
<rect x="1226.50" y="782.00" width="33.95" height="2.50" fill="#c9c9c9" />
<rect x="1229.00" y="789.00" width="7.00" height="14.00" fill="#0c0c0c" />
<rect x="1229.00" y="804.00" width="7.00" height="3.00" fill="#e6e6e6" />
<rect x="1238.50" y="789.00" width="19.50" height="20.00" fill="url(#gSlots)" />
<rect x="1226.50" y="812.00" width="33.95" height="2.00" fill="#9a9a9a" />
<rect x="1226.50" y="815.00" width="33.95" height="56.00" fill="#3c3c3c" />
<rect x="1227.50" y="817.00" width="7.00" height="52.00" fill="url(#gVert)" />
<rect x="1236.00" y="817.00" width="6.50" height="38.00" fill="#8d8d8d" />
<rect x="1238.00" y="821.00" width="2.50" height="30.00" fill="#5b5b5b" />
<rect x="1236.00" y="855.00" width="6.5" height="7" rx="2" fill="#c0353b"/>
<rect x="1236.50" y="863.00" width="5.50" height="4.00" fill="#bdbdbd" />
<rect x="1248.00" y="817.00" width="6.50" height="38.00" fill="#8d8d8d" />
<rect x="1250.00" y="821.00" width="2.50" height="30.00" fill="#5b5b5b" />
<rect x="1248.00" y="855.00" width="6.5" height="7" rx="2" fill="#c0353b"/>
<rect x="1248.50" y="863.00" width="5.50" height="4.00" fill="#bdbdbd" />
<rect x="1243.50" y="818.00" width="3.00" height="50.00" fill="#6f6f6f" />
<rect x="1256.00" y="817.00" width="3.50" height="52.00" fill="#6b6b6b" />
<rect x="1226.50" y="871.00" width="33.95" height="3.60" fill="#41d64a" />
<rect x="1226.50" y="874.60" width="33.95" height="1.20" fill="#1d5a22" />
<rect x="1226.50" y="876.00" width="33.95" height="23.00" fill="#5f5f5f" />
<rect x="1227.50" y="877.00" width="10.00" height="21.00" fill="#7d7d7d" />
<circle cx="1232.50" cy="882.00" r="2.6" fill="#2bdc3a"/><circle cx="1232.50" cy="891.00" r="1.6" fill="#2bdc3a"/>
<rect x="1238.50" y="878.00" width="20.00" height="19.00" fill="url(#gVert)" />
<rect x="1226.50" y="899.50" width="33.95" height="3.00" fill="#cfcfcf" />
<rect x="1226.50" y="902.50" width="33.95" height="2.50" fill="#1b1b1b" />
<rect x="1261.45" y="781.00" width="33.95" height="33.00" fill="#7b7b7b" />
<rect x="1261.45" y="782.00" width="33.95" height="2.50" fill="#c9c9c9" />
<rect x="1263.95" y="789.00" width="7.00" height="14.00" fill="#0c0c0c" />
<rect x="1263.95" y="804.00" width="7.00" height="3.00" fill="#e6e6e6" />
<rect x="1273.45" y="789.00" width="19.50" height="20.00" fill="url(#gSlots)" />
<rect x="1261.45" y="812.00" width="33.95" height="2.00" fill="#9a9a9a" />
<rect x="1261.45" y="815.00" width="33.95" height="56.00" fill="#3c3c3c" />
<rect x="1262.45" y="817.00" width="7.00" height="52.00" fill="url(#gVert)" />
<rect x="1270.95" y="817.00" width="6.50" height="38.00" fill="#8d8d8d" />
<rect x="1272.95" y="821.00" width="2.50" height="30.00" fill="#5b5b5b" />
<rect x="1270.95" y="855.00" width="6.5" height="7" rx="2" fill="#c0353b"/>
<rect x="1271.45" y="863.00" width="5.50" height="4.00" fill="#bdbdbd" />
<rect x="1282.95" y="817.00" width="6.50" height="38.00" fill="#8d8d8d" />
<rect x="1284.95" y="821.00" width="2.50" height="30.00" fill="#5b5b5b" />
<rect x="1282.95" y="855.00" width="6.5" height="7" rx="2" fill="#c0353b"/>
<rect x="1283.45" y="863.00" width="5.50" height="4.00" fill="#bdbdbd" />
<rect x="1278.45" y="818.00" width="3.00" height="50.00" fill="#6f6f6f" />
<rect x="1290.95" y="817.00" width="3.50" height="52.00" fill="#6b6b6b" />
<rect x="1261.45" y="871.00" width="33.95" height="3.60" fill="#41d64a" />
<rect x="1261.45" y="874.60" width="33.95" height="1.20" fill="#1d5a22" />
<rect x="1261.45" y="876.00" width="33.95" height="23.00" fill="#5f5f5f" />
<rect x="1262.45" y="877.00" width="10.00" height="21.00" fill="#7d7d7d" />
<circle cx="1267.45" cy="882.00" r="2.6" fill="#2bdc3a"/><circle cx="1267.45" cy="891.00" r="1.6" fill="#2bdc3a"/>
<rect x="1273.45" y="878.00" width="20.00" height="19.00" fill="url(#gVert)" />
<rect x="1261.45" y="899.50" width="33.95" height="3.00" fill="#cfcfcf" />
<rect x="1261.45" y="902.50" width="33.95" height="2.50" fill="#1b1b1b" />
<rect x="1013.70" y="899.90" width="286.30" height="38.50" fill="#262626" />
<rect x="1013.70" y="932.80" width="286.30" height="5.60" fill="#a9a9a9" />
<rect x="1018.60" y="902.00" width="43.40" height="31.00" fill="#4b4b4b" />
<rect x="1018.60" y="902.00" width="43.40" height="2.50" fill="#8a8a8a" />
<rect x="1023.10" y="905.50" width="26.91" height="26.00" fill="url(#gBlk)" />
<rect x="1052.00" y="905.50" width="8.00" height="7.00" fill="#b84047" />
<rect x="1053.00" y="915.00" width="3.5" height="3" fill="#39d845"/><rect x="1053.00" y="920.00" width="3.5" height="3" fill="#d8c23a"/>
<rect x="1063.40" y="902.00" width="42.20" height="31.00" fill="#4b4b4b" />
<rect x="1063.40" y="902.00" width="42.20" height="2.50" fill="#8a8a8a" />
<rect x="1067.90" y="905.50" width="26.16" height="26.00" fill="url(#gBlk)" />
<rect x="1095.60" y="905.50" width="8.00" height="7.00" fill="#b84047" />
<rect x="1096.60" y="915.00" width="3.5" height="3" fill="#39d845"/><rect x="1096.60" y="920.00" width="3.5" height="3" fill="#d8c23a"/>
<rect x="1210.60" y="902.00" width="42.80" height="31.00" fill="#4b4b4b" />
<rect x="1210.60" y="902.00" width="42.80" height="2.50" fill="#8a8a8a" />
<rect x="1215.10" y="905.50" width="26.54" height="26.00" fill="url(#gBlk)" />
<rect x="1243.40" y="905.50" width="8.00" height="7.00" fill="#b84047" />
<rect x="1244.40" y="915.00" width="3.5" height="3" fill="#39d845"/><rect x="1244.40" y="920.00" width="3.5" height="3" fill="#d8c23a"/>
<rect x="1254.70" y="902.00" width="43.30" height="31.00" fill="#4b4b4b" />
<rect x="1254.70" y="902.00" width="43.30" height="2.50" fill="#8a8a8a" />
<rect x="1259.20" y="905.50" width="26.85" height="26.00" fill="url(#gBlk)" />
<rect x="1288.00" y="905.50" width="8.00" height="7.00" fill="#b84047" />
<rect x="1289.00" y="915.00" width="3.5" height="3" fill="#39d845"/><rect x="1289.00" y="920.00" width="3.5" height="3" fill="#d8c23a"/>
<rect x="1105.60" y="901.00" width="104.40" height="37.00" fill="#151515" />
<rect x="1110.00" y="903.00" width="16.00" height="29.00" fill="url(#gSlots)" />
<rect x="1129.00" y="904.80" width="42.40" height="29.90" fill="#f1f1f1" />
<rect x="1130.50" y="906.50" width="39.40" height="25.00" fill="#58bd6c" />
<rect x="1132.00" y="909.00" width="22.00" height="1.20" fill="#e6f7e8" />
<rect x="1132.00" y="912.60" width="20.00" height="1.20" fill="#e6f7e8" />
<rect x="1132.00" y="916.20" width="18.00" height="1.20" fill="#e6f7e8" />
<rect x="1132.00" y="919.80" width="16.00" height="1.20" fill="#e6f7e8" />
<rect x="1174.00" y="905.00" width="5.00" height="27.00" fill="#2b2b2b" />
<rect x="1190.00" y="905.00" width="8.00" height="7.00" fill="#b84047" />
<rect x="1203.00" y="902.00" width="2.50" height="34.00" fill="#c8c8c8" />
<rect x="1088.00" y="785.30" width="137.20" height="21.70" fill="#6f8393" stroke="#111" stroke-width="2.4"/>
<text x="1156.60" y="802.20" font-size="16.8" fill="#fff" text-anchor="middle" font-family="Liberation Sans">USNHCTC0001</text>
<rect x="1000" y="938.80" width="314" height="57.14" fill="url(#dellbez)"/>
<path d="M1034.7 951.8H1281L1300 960.8V973.9428571428571L1281 983.9428571428571H1034.7L1014.6 973.9428571428571V960.8z" fill="url(#dellmid)"/>
<path d="M1036 940.30H1281L1284 951.30H1033z" fill="#2b2e31"/>
<rect x="1037.00" y="941.30" width="28.00" height="9.00" fill="url(#gBlk)" opacity="0.7"/>
<rect x="1072.00" y="941.30" width="49.00" height="9.00" fill="url(#gBlk)" opacity="0.7"/>
<rect x="1128.00" y="941.30" width="61.00" height="9.00" fill="url(#gBlk)" opacity="0.7"/>
<rect x="1196.00" y="941.30" width="48.00" height="9.00" fill="url(#gBlk)" opacity="0.7"/>
<rect x="1251.00" y="941.30" width="29.00" height="9.00" fill="url(#gBlk)" opacity="0.7"/>
<rect x="1067.00" y="940.30" width="3.50" height="11.00" fill="#8e9194" />
<rect x="1123.00" y="940.30" width="3.50" height="11.00" fill="#8e9194" />
<rect x="1191.00" y="940.30" width="3.50" height="11.00" fill="#8e9194" />
<rect x="1246.00" y="940.30" width="3.50" height="11.00" fill="#8e9194" />
<path d="M1036 983.44H1281L1284 994.44H1033z" fill="#2b2e31"/>
<rect x="1037.00" y="984.44" width="28.00" height="9.00" fill="url(#gBlk)" opacity="0.7"/>
<rect x="1072.00" y="984.44" width="49.00" height="9.00" fill="url(#gBlk)" opacity="0.7"/>
<rect x="1128.00" y="984.44" width="61.00" height="9.00" fill="url(#gBlk)" opacity="0.7"/>
<rect x="1196.00" y="984.44" width="48.00" height="9.00" fill="url(#gBlk)" opacity="0.7"/>
<rect x="1251.00" y="984.44" width="29.00" height="9.00" fill="url(#gBlk)" opacity="0.7"/>
<rect x="1067.00" y="983.44" width="3.50" height="11.00" fill="#8e9194" />
<rect x="1123.00" y="983.44" width="3.50" height="11.00" fill="#8e9194" />
<rect x="1191.00" y="983.44" width="3.50" height="11.00" fill="#8e9194" />
<rect x="1246.00" y="983.44" width="3.50" height="11.00" fill="#8e9194" />
<rect x="1000.00" y="938.80" width="14.60" height="57.14" fill="url(#silverH)" />
<rect x="1300.00" y="938.80" width="14.00" height="57.14" fill="url(#silverH)" />
<rect x="1000.00" y="964.51" width="14.60" height="5.00" fill="#9d9d9d" />
<rect x="1300.00" y="964.51" width="14.00" height="5.00" fill="#9d9d9d" />
<ellipse cx="1026" cy="967.37" rx="6" ry="8" fill="#3b3b3b"/>
<rect x="1085.00" y="941.80" width="30.00" height="6.00" fill="#1b3a66" opacity="0.6"/>
<rect x="1205.00" y="942.80" width="36.00" height="5.00" fill="#b9b9b9" opacity="0.5"/>
<rect x="1000.00" y="938.80" width="314.00" height="1.50" fill="#6f7c86" />
<rect x="1000.00" y="994.44" width="314.00" height="1.50" fill="#545454" />
<rect x="1066.00" y="956.20" width="181.00" height="21.40" fill="#6f8393" stroke="#111" stroke-width="2.4"/>
<text x="1156.50" y="972.95" font-size="16.8" fill="#fff" text-anchor="middle" font-family="Liberation Sans">esxi-016.device42.pvt</text>
<rect x="1000.00" y="995.94" width="314.00" height="28.57" fill="url(#srv1u)" stroke="#111" stroke-width="2"/>
<rect x="1000.00" y="995.94" width="14.00" height="28.57" fill="url(#silverH)" stroke="#111" stroke-width="1.6"/>
<ellipse cx="1007.00" cy="998.94" rx="3.2" ry="2.6" fill="#555" stroke="#111" stroke-width="1.2"/>
<ellipse cx="1007.00" cy="1021.51" rx="3.2" ry="2.6" fill="#555" stroke="#111" stroke-width="1.2"/>
<rect x="1000.00" y="1009.43" width="14" height="1.6" fill="#333"/>
<rect x="1300.00" y="995.94" width="14.00" height="28.57" fill="url(#silverH)" stroke="#111" stroke-width="1.6"/>
<ellipse cx="1307.00" cy="998.94" rx="3.2" ry="2.6" fill="#555" stroke="#111" stroke-width="1.2"/>
<ellipse cx="1307.00" cy="1021.51" rx="3.2" ry="2.6" fill="#555" stroke="#111" stroke-width="1.2"/>
<rect x="1300.00" y="1009.43" width="14" height="1.6" fill="#333"/>
<rect x="1030.00" y="1001.09" width="60" height="5.71" fill="#e9e9e9" stroke="#111" stroke-width="2"/>
<rect x="1030.00" y="1011.37" width="60" height="5.71" fill="#e9e9e9" stroke="#111" stroke-width="2"/>
<rect x="1244.00" y="1000.23" width="45" height="20.00" fill="#d0d0d0" stroke="#8c8c8c" stroke-width="1.5"/>
<rect x="1262.00" y="1001.66" width="8" height="15.71" fill="#bdbdbd" stroke="#8c8c8c" stroke-width="1"/>
<rect x="1030.00" y="1020.23" width="254.00" height="1.6" fill="#a8a8a8"/>
<rect x="1219.00" y="999.37" width="36" height="6.29" fill="#3c9a5a" stroke="#222" stroke-width="1.4"/>
<rect x="1066.00" y="999.00" width="181.00" height="21.50" fill="#6f8393" stroke="#111" stroke-width="2.4"/>
<text x="1156.50" y="1015.80" font-size="16.8" fill="#fff" text-anchor="middle" font-family="Liberation Sans">esxi-004.device42.pvt</text>
<rect x="1000.00" y="1024.51" width="314.00" height="57.14" fill="url(#srv1u)" stroke="#111" stroke-width="2"/>
<rect x="1000.00" y="1024.51" width="16.00" height="57.14" fill="url(#silverH)" stroke="#111" stroke-width="1.6"/>
<ellipse cx="1008.00" cy="1027.51" rx="3.2" ry="2.6" fill="#555" stroke="#111" stroke-width="1.2"/>
<ellipse cx="1008.00" cy="1053.09" rx="3.2" ry="2.6" fill="#555" stroke="#111" stroke-width="1.2"/>
<ellipse cx="1008.00" cy="1078.66" rx="3.2" ry="2.6" fill="#555" stroke="#111" stroke-width="1.2"/>
<rect x="1000.00" y="1052.29" width="16" height="1.6" fill="#333"/>
<rect x="1298.00" y="1024.51" width="16.00" height="57.14" fill="url(#silverH)" stroke="#111" stroke-width="1.6"/>
<ellipse cx="1306.00" cy="1027.51" rx="3.2" ry="2.6" fill="#555" stroke="#111" stroke-width="1.2"/>
<ellipse cx="1306.00" cy="1053.09" rx="3.2" ry="2.6" fill="#555" stroke="#111" stroke-width="1.2"/>
<ellipse cx="1306.00" cy="1078.66" rx="3.2" ry="2.6" fill="#555" stroke="#111" stroke-width="1.2"/>
<rect x="1298.00" y="1052.29" width="16" height="1.6" fill="#333"/>
<rect x="1038" y="1032.51" width="123" height="13.71" fill="#e8e8e8" stroke="#111" stroke-width="2.2"/>
<rect x="1038" y="1057.66" width="90" height="13.71" fill="#e8e8e8" stroke="#111" stroke-width="2.2"/>
<rect x="1165" y="1030.51" width="122" height="43.14" fill="#d4d4d4" stroke="#a9a9a9" stroke-width="1.5"/>
<rect x="1175" y="1036.51" width="100" height="31.14" fill="#cfcfcf" stroke="#b3b3b3" stroke-width="1.2"/>
<rect x="1212" y="1042.80" width="38" height="11.43" fill="#3c9a5a" stroke="#222" stroke-width="1.5"/>
<rect x="1213.00" y="1058.80" width="8" height="5" rx="2" fill="#777" stroke="#222" stroke-width="1"/>
<rect x="1222.00" y="1058.80" width="8" height="5" rx="2" fill="#777" stroke="#222" stroke-width="1"/>
<rect x="1231.00" y="1058.80" width="8" height="5" rx="2" fill="#777" stroke="#222" stroke-width="1"/>
<rect x="1240.00" y="1058.80" width="8" height="5" rx="2" fill="#777" stroke="#222" stroke-width="1"/>
<rect x="1249.00" y="1058.80" width="8" height="5" rx="2" fill="#777" stroke="#222" stroke-width="1"/>
<rect x="1038.00" y="1073.66" width="250.00" height="1.60" fill="#a5a5a5" />
<rect x="1105.00" y="1042.70" width="103.00" height="21.00" fill="#6f8393" stroke="#111" stroke-width="2.4"/>
<text x="1156.50" y="1059.25" font-size="16.8" fill="#fff" text-anchor="middle" font-family="Liberation Sans">esxi-90-0-6</text>
<rect x="1000.00" y="1110.23" width="314.00" height="371.43" fill="#434b52" />
<rect x="1005.00" y="1114.5" width="149.6" height="87" rx="4" fill="#4a535a" stroke="#2f363b" stroke-width="1.5"/>
<rect x="1062.1" y="1127.0" width="3.6" height="3.6" fill="#111417"/>
<rect x="1067.9" y="1127.0" width="3.6" height="3.6" fill="#111417"/>
<rect x="1073.7" y="1127.0" width="3.6" height="3.6" fill="#111417"/>
<rect x="1079.5" y="1127.0" width="3.6" height="3.6" fill="#111417"/>
<rect x="1085.3" y="1127.0" width="3.6" height="3.6" fill="#111417"/>
<rect x="1091.1" y="1127.0" width="3.6" height="3.6" fill="#111417"/>
<rect x="1096.9" y="1127.0" width="3.6" height="3.6" fill="#111417"/>
<rect x="1102.7" y="1127.0" width="3.6" height="3.6" fill="#111417"/>
<rect x="1108.5" y="1127.0" width="3.6" height="3.6" fill="#111417"/>
<rect x="1114.3" y="1127.0" width="3.6" height="3.6" fill="#111417"/>
<rect x="1120.1" y="1127.0" width="3.6" height="3.6" fill="#111417"/>
<rect x="1125.9" y="1127.0" width="3.6" height="3.6" fill="#111417"/>
<rect x="1056.3" y="1132.8" width="3.6" height="3.6" fill="#111417"/>
<rect x="1062.1" y="1132.8" width="3.6" height="3.6" fill="#111417"/>
<rect x="1067.9" y="1132.8" width="3.6" height="3.6" fill="#111417"/>
<rect x="1073.7" y="1132.8" width="3.6" height="3.6" fill="#111417"/>
<rect x="1079.5" y="1132.8" width="3.6" height="3.6" fill="#111417"/>
<rect x="1085.3" y="1132.8" width="3.6" height="3.6" fill="#111417"/>
<rect x="1091.1" y="1132.8" width="3.6" height="3.6" fill="#111417"/>
<rect x="1096.9" y="1132.8" width="3.6" height="3.6" fill="#111417"/>
<rect x="1102.7" y="1132.8" width="3.6" height="3.6" fill="#111417"/>
<rect x="1108.5" y="1132.8" width="3.6" height="3.6" fill="#111417"/>
<rect x="1114.3" y="1132.8" width="3.6" height="3.6" fill="#111417"/>
<rect x="1120.1" y="1132.8" width="3.6" height="3.6" fill="#111417"/>
<rect x="1125.9" y="1132.8" width="3.6" height="3.6" fill="#111417"/>
<rect x="1131.7" y="1132.8" width="3.6" height="3.6" fill="#111417"/>
<rect x="1050.5" y="1138.6" width="3.6" height="3.6" fill="#111417"/>
<rect x="1056.3" y="1138.6" width="3.6" height="3.6" fill="#111417"/>
<rect x="1062.1" y="1138.6" width="3.6" height="3.6" fill="#111417"/>
<rect x="1067.9" y="1138.6" width="3.6" height="3.6" fill="#111417"/>
<rect x="1073.7" y="1138.6" width="3.6" height="3.6" fill="#111417"/>
<rect x="1079.5" y="1138.6" width="3.6" height="3.6" fill="#111417"/>
<rect x="1085.3" y="1138.6" width="3.6" height="3.6" fill="#111417"/>
<rect x="1091.1" y="1138.6" width="3.6" height="3.6" fill="#111417"/>
<rect x="1096.9" y="1138.6" width="3.6" height="3.6" fill="#111417"/>
<rect x="1102.7" y="1138.6" width="3.6" height="3.6" fill="#111417"/>
<rect x="1108.5" y="1138.6" width="3.6" height="3.6" fill="#111417"/>
<rect x="1114.3" y="1138.6" width="3.6" height="3.6" fill="#111417"/>
<rect x="1120.1" y="1138.6" width="3.6" height="3.6" fill="#111417"/>
<rect x="1125.9" y="1138.6" width="3.6" height="3.6" fill="#111417"/>
<rect x="1131.7" y="1138.6" width="3.6" height="3.6" fill="#111417"/>
<rect x="1137.5" y="1138.6" width="3.6" height="3.6" fill="#111417"/>
<rect x="1050.5" y="1144.4" width="3.6" height="3.6" fill="#111417"/>
<rect x="1056.3" y="1144.4" width="3.6" height="3.6" fill="#111417"/>
<rect x="1062.1" y="1144.4" width="3.6" height="3.6" fill="#111417"/>
<rect x="1067.9" y="1144.4" width="3.6" height="3.6" fill="#111417"/>
<rect x="1073.7" y="1144.4" width="3.6" height="3.6" fill="#111417"/>
<rect x="1079.5" y="1144.4" width="3.6" height="3.6" fill="#111417"/>
<rect x="1085.3" y="1144.4" width="3.6" height="3.6" fill="#111417"/>
<rect x="1091.1" y="1144.4" width="3.6" height="3.6" fill="#111417"/>
<rect x="1096.9" y="1144.4" width="3.6" height="3.6" fill="#111417"/>
<rect x="1102.7" y="1144.4" width="3.6" height="3.6" fill="#111417"/>
<rect x="1108.5" y="1144.4" width="3.6" height="3.6" fill="#111417"/>
<rect x="1114.3" y="1144.4" width="3.6" height="3.6" fill="#111417"/>
<rect x="1120.1" y="1144.4" width="3.6" height="3.6" fill="#111417"/>
<rect x="1125.9" y="1144.4" width="3.6" height="3.6" fill="#111417"/>
<rect x="1131.7" y="1144.4" width="3.6" height="3.6" fill="#111417"/>
<rect x="1137.5" y="1144.4" width="3.6" height="3.6" fill="#111417"/>
<rect x="1050.5" y="1150.2" width="3.6" height="3.6" fill="#111417"/>
<rect x="1056.3" y="1150.2" width="3.6" height="3.6" fill="#111417"/>
<rect x="1062.1" y="1150.2" width="3.6" height="3.6" fill="#111417"/>
<rect x="1067.9" y="1150.2" width="3.6" height="3.6" fill="#111417"/>
<rect x="1073.7" y="1150.2" width="3.6" height="3.6" fill="#111417"/>
<rect x="1079.5" y="1150.2" width="3.6" height="3.6" fill="#111417"/>
<rect x="1085.3" y="1150.2" width="3.6" height="3.6" fill="#111417"/>
<rect x="1091.1" y="1150.2" width="3.6" height="3.6" fill="#111417"/>
<rect x="1096.9" y="1150.2" width="3.6" height="3.6" fill="#111417"/>
<rect x="1102.7" y="1150.2" width="3.6" height="3.6" fill="#111417"/>
<rect x="1108.5" y="1150.2" width="3.6" height="3.6" fill="#111417"/>
<rect x="1114.3" y="1150.2" width="3.6" height="3.6" fill="#111417"/>
<rect x="1120.1" y="1150.2" width="3.6" height="3.6" fill="#111417"/>
<rect x="1125.9" y="1150.2" width="3.6" height="3.6" fill="#111417"/>
<rect x="1131.7" y="1150.2" width="3.6" height="3.6" fill="#111417"/>
<rect x="1137.5" y="1150.2" width="3.6" height="3.6" fill="#111417"/>
<rect x="1050.5" y="1156.0" width="3.6" height="3.6" fill="#111417"/>
<rect x="1056.3" y="1156.0" width="3.6" height="3.6" fill="#111417"/>
<rect x="1062.1" y="1156.0" width="3.6" height="3.6" fill="#111417"/>
<rect x="1067.9" y="1156.0" width="3.6" height="3.6" fill="#111417"/>
<rect x="1073.7" y="1156.0" width="3.6" height="3.6" fill="#111417"/>
<rect x="1079.5" y="1156.0" width="3.6" height="3.6" fill="#111417"/>
<rect x="1085.3" y="1156.0" width="3.6" height="3.6" fill="#111417"/>
<rect x="1091.1" y="1156.0" width="3.6" height="3.6" fill="#111417"/>
<rect x="1096.9" y="1156.0" width="3.6" height="3.6" fill="#111417"/>
<rect x="1102.7" y="1156.0" width="3.6" height="3.6" fill="#111417"/>
<rect x="1108.5" y="1156.0" width="3.6" height="3.6" fill="#111417"/>
<rect x="1114.3" y="1156.0" width="3.6" height="3.6" fill="#111417"/>
<rect x="1120.1" y="1156.0" width="3.6" height="3.6" fill="#111417"/>
<rect x="1125.9" y="1156.0" width="3.6" height="3.6" fill="#111417"/>
<rect x="1131.7" y="1156.0" width="3.6" height="3.6" fill="#111417"/>
<rect x="1137.5" y="1156.0" width="3.6" height="3.6" fill="#111417"/>
<rect x="1050.5" y="1161.8" width="3.6" height="3.6" fill="#111417"/>
<rect x="1056.3" y="1161.8" width="3.6" height="3.6" fill="#111417"/>
<rect x="1062.1" y="1161.8" width="3.6" height="3.6" fill="#111417"/>
<rect x="1067.9" y="1161.8" width="3.6" height="3.6" fill="#111417"/>
<rect x="1073.7" y="1161.8" width="3.6" height="3.6" fill="#111417"/>
<rect x="1079.5" y="1161.8" width="3.6" height="3.6" fill="#111417"/>
<rect x="1085.3" y="1161.8" width="3.6" height="3.6" fill="#111417"/>
<rect x="1091.1" y="1161.8" width="3.6" height="3.6" fill="#111417"/>
<rect x="1096.9" y="1161.8" width="3.6" height="3.6" fill="#111417"/>
<rect x="1102.7" y="1161.8" width="3.6" height="3.6" fill="#111417"/>
<rect x="1108.5" y="1161.8" width="3.6" height="3.6" fill="#111417"/>
<rect x="1114.3" y="1161.8" width="3.6" height="3.6" fill="#111417"/>
<rect x="1120.1" y="1161.8" width="3.6" height="3.6" fill="#111417"/>
<rect x="1125.9" y="1161.8" width="3.6" height="3.6" fill="#111417"/>
<rect x="1131.7" y="1161.8" width="3.6" height="3.6" fill="#111417"/>
<rect x="1137.5" y="1161.8" width="3.6" height="3.6" fill="#111417"/>
<rect x="1050.5" y="1167.6" width="3.6" height="3.6" fill="#111417"/>
<rect x="1056.3" y="1167.6" width="3.6" height="3.6" fill="#111417"/>
<rect x="1062.1" y="1167.6" width="3.6" height="3.6" fill="#111417"/>
<rect x="1067.9" y="1167.6" width="3.6" height="3.6" fill="#111417"/>
<rect x="1073.7" y="1167.6" width="3.6" height="3.6" fill="#111417"/>
<rect x="1079.5" y="1167.6" width="3.6" height="3.6" fill="#111417"/>
<rect x="1085.3" y="1167.6" width="3.6" height="3.6" fill="#111417"/>
<rect x="1091.1" y="1167.6" width="3.6" height="3.6" fill="#111417"/>
<rect x="1096.9" y="1167.6" width="3.6" height="3.6" fill="#111417"/>
<rect x="1102.7" y="1167.6" width="3.6" height="3.6" fill="#111417"/>
<rect x="1108.5" y="1167.6" width="3.6" height="3.6" fill="#111417"/>
<rect x="1114.3" y="1167.6" width="3.6" height="3.6" fill="#111417"/>
<rect x="1120.1" y="1167.6" width="3.6" height="3.6" fill="#111417"/>
<rect x="1125.9" y="1167.6" width="3.6" height="3.6" fill="#111417"/>
<rect x="1131.7" y="1167.6" width="3.6" height="3.6" fill="#111417"/>
<rect x="1137.5" y="1167.6" width="3.6" height="3.6" fill="#111417"/>
<rect x="1050.5" y="1173.4" width="3.6" height="3.6" fill="#111417"/>
<rect x="1056.3" y="1173.4" width="3.6" height="3.6" fill="#111417"/>
<rect x="1062.1" y="1173.4" width="3.6" height="3.6" fill="#111417"/>
<rect x="1067.9" y="1173.4" width="3.6" height="3.6" fill="#111417"/>
<rect x="1073.7" y="1173.4" width="3.6" height="3.6" fill="#111417"/>
<rect x="1079.5" y="1173.4" width="3.6" height="3.6" fill="#111417"/>
<rect x="1085.3" y="1173.4" width="3.6" height="3.6" fill="#111417"/>
<rect x="1091.1" y="1173.4" width="3.6" height="3.6" fill="#111417"/>
<rect x="1096.9" y="1173.4" width="3.6" height="3.6" fill="#111417"/>
<rect x="1102.7" y="1173.4" width="3.6" height="3.6" fill="#111417"/>
<rect x="1108.5" y="1173.4" width="3.6" height="3.6" fill="#111417"/>
<rect x="1114.3" y="1173.4" width="3.6" height="3.6" fill="#111417"/>
<rect x="1120.1" y="1173.4" width="3.6" height="3.6" fill="#111417"/>
<rect x="1125.9" y="1173.4" width="3.6" height="3.6" fill="#111417"/>
<rect x="1131.7" y="1173.4" width="3.6" height="3.6" fill="#111417"/>
<rect x="1137.5" y="1173.4" width="3.6" height="3.6" fill="#111417"/>
<rect x="1050.5" y="1179.2" width="3.6" height="3.6" fill="#111417"/>
<rect x="1056.3" y="1179.2" width="3.6" height="3.6" fill="#111417"/>
<rect x="1062.1" y="1179.2" width="3.6" height="3.6" fill="#111417"/>
<rect x="1067.9" y="1179.2" width="3.6" height="3.6" fill="#111417"/>
<rect x="1073.7" y="1179.2" width="3.6" height="3.6" fill="#111417"/>
<rect x="1079.5" y="1179.2" width="3.6" height="3.6" fill="#111417"/>
<rect x="1085.3" y="1179.2" width="3.6" height="3.6" fill="#111417"/>
<rect x="1091.1" y="1179.2" width="3.6" height="3.6" fill="#111417"/>
<rect x="1096.9" y="1179.2" width="3.6" height="3.6" fill="#111417"/>
<rect x="1102.7" y="1179.2" width="3.6" height="3.6" fill="#111417"/>
<rect x="1108.5" y="1179.2" width="3.6" height="3.6" fill="#111417"/>
<rect x="1114.3" y="1179.2" width="3.6" height="3.6" fill="#111417"/>
<rect x="1120.1" y="1179.2" width="3.6" height="3.6" fill="#111417"/>
<rect x="1125.9" y="1179.2" width="3.6" height="3.6" fill="#111417"/>
<rect x="1131.7" y="1179.2" width="3.6" height="3.6" fill="#111417"/>
<rect x="1137.5" y="1179.2" width="3.6" height="3.6" fill="#111417"/>
<rect x="1056.3" y="1185.0" width="3.6" height="3.6" fill="#111417"/>
<rect x="1062.1" y="1185.0" width="3.6" height="3.6" fill="#111417"/>
<rect x="1067.9" y="1185.0" width="3.6" height="3.6" fill="#111417"/>
<rect x="1073.7" y="1185.0" width="3.6" height="3.6" fill="#111417"/>
<rect x="1079.5" y="1185.0" width="3.6" height="3.6" fill="#111417"/>
<rect x="1085.3" y="1185.0" width="3.6" height="3.6" fill="#111417"/>
<rect x="1091.1" y="1185.0" width="3.6" height="3.6" fill="#111417"/>
<rect x="1096.9" y="1185.0" width="3.6" height="3.6" fill="#111417"/>
<rect x="1102.7" y="1185.0" width="3.6" height="3.6" fill="#111417"/>
<rect x="1108.5" y="1185.0" width="3.6" height="3.6" fill="#111417"/>
<rect x="1114.3" y="1185.0" width="3.6" height="3.6" fill="#111417"/>
<rect x="1120.1" y="1185.0" width="3.6" height="3.6" fill="#111417"/>
<rect x="1125.9" y="1185.0" width="3.6" height="3.6" fill="#111417"/>
<rect x="1131.7" y="1185.0" width="3.6" height="3.6" fill="#111417"/>
<rect x="1062.1" y="1190.8" width="3.6" height="3.6" fill="#111417"/>
<rect x="1067.9" y="1190.8" width="3.6" height="3.6" fill="#111417"/>
<rect x="1073.7" y="1190.8" width="3.6" height="3.6" fill="#111417"/>
<rect x="1079.5" y="1190.8" width="3.6" height="3.6" fill="#111417"/>
<rect x="1085.3" y="1190.8" width="3.6" height="3.6" fill="#111417"/>
<rect x="1091.1" y="1190.8" width="3.6" height="3.6" fill="#111417"/>
<rect x="1096.9" y="1190.8" width="3.6" height="3.6" fill="#111417"/>
<rect x="1102.7" y="1190.8" width="3.6" height="3.6" fill="#111417"/>
<rect x="1108.5" y="1190.8" width="3.6" height="3.6" fill="#111417"/>
<rect x="1114.3" y="1190.8" width="3.6" height="3.6" fill="#111417"/>
<rect x="1120.1" y="1190.8" width="3.6" height="3.6" fill="#111417"/>
<rect x="1125.9" y="1190.8" width="3.6" height="3.6" fill="#111417"/>
<rect x="1009.50" y="1128.40" width="37.00" height="20.00" fill="#141414" />
<rect x="1014.00" y="1132.00" width="28.00" height="13.00" fill="#262626" />
<rect x="1009.50" y="1174.40" width="37.00" height="20.00" fill="#141414" />
<rect x="1014.00" y="1178.00" width="28.00" height="13.00" fill="#262626" />
<rect x="1014.00" y="1150.50" width="28.00" height="10.00" fill="#1b1b1b" />
<rect x="1014.00" y="1161.50" width="28.00" height="10.00" fill="#1b1b1b" />
<circle cx="1053.00" cy="1134" r="1.8" fill="#e13a3a"/><circle cx="1053.00" cy="1139" r="1.8" fill="#3bd14a"/><circle cx="1052.00" cy="1151" r="1.8" fill="#3bd14a"/><circle cx="1052.00" cy="1163" r="1.8" fill="#3bd14a"/>
<line x1="1065.70" y1="1188.3" x2="1132.50" y2="1133.4" stroke="#0b0b0b" stroke-width="8" stroke-linecap="round"/>
<line x1="1123.00" y1="1141" x2="1132.50" y2="1133.4" stroke="#9a9a9a" stroke-width="3" stroke-linecap="round"/>
<rect x="1121.00" y="1184.00" width="21.00" height="12.50" fill="#5fb56e" />
<circle cx="1025.00" cy="1120.5" r="4.2" fill="#d9d9d9"/><circle cx="1135.00" cy="1120.5" r="4.2" fill="#d9d9d9"/>
<rect x="1158.40" y="1114.5" width="149.6" height="87" rx="4" fill="#4a535a" stroke="#2f363b" stroke-width="1.5"/>
<rect x="1215.5" y="1127.0" width="3.6" height="3.6" fill="#111417"/>
<rect x="1221.3" y="1127.0" width="3.6" height="3.6" fill="#111417"/>
<rect x="1227.1" y="1127.0" width="3.6" height="3.6" fill="#111417"/>
<rect x="1232.9" y="1127.0" width="3.6" height="3.6" fill="#111417"/>
<rect x="1238.7" y="1127.0" width="3.6" height="3.6" fill="#111417"/>
<rect x="1244.5" y="1127.0" width="3.6" height="3.6" fill="#111417"/>
<rect x="1250.3" y="1127.0" width="3.6" height="3.6" fill="#111417"/>
<rect x="1256.1" y="1127.0" width="3.6" height="3.6" fill="#111417"/>
<rect x="1261.9" y="1127.0" width="3.6" height="3.6" fill="#111417"/>
<rect x="1267.7" y="1127.0" width="3.6" height="3.6" fill="#111417"/>
<rect x="1273.5" y="1127.0" width="3.6" height="3.6" fill="#111417"/>
<rect x="1279.3" y="1127.0" width="3.6" height="3.6" fill="#111417"/>
<rect x="1209.7" y="1132.8" width="3.6" height="3.6" fill="#111417"/>
<rect x="1215.5" y="1132.8" width="3.6" height="3.6" fill="#111417"/>
<rect x="1221.3" y="1132.8" width="3.6" height="3.6" fill="#111417"/>
<rect x="1227.1" y="1132.8" width="3.6" height="3.6" fill="#111417"/>
<rect x="1232.9" y="1132.8" width="3.6" height="3.6" fill="#111417"/>
<rect x="1238.7" y="1132.8" width="3.6" height="3.6" fill="#111417"/>
<rect x="1244.5" y="1132.8" width="3.6" height="3.6" fill="#111417"/>
<rect x="1250.3" y="1132.8" width="3.6" height="3.6" fill="#111417"/>
<rect x="1256.1" y="1132.8" width="3.6" height="3.6" fill="#111417"/>
<rect x="1261.9" y="1132.8" width="3.6" height="3.6" fill="#111417"/>
<rect x="1267.7" y="1132.8" width="3.6" height="3.6" fill="#111417"/>
<rect x="1273.5" y="1132.8" width="3.6" height="3.6" fill="#111417"/>
<rect x="1279.3" y="1132.8" width="3.6" height="3.6" fill="#111417"/>
<rect x="1285.1" y="1132.8" width="3.6" height="3.6" fill="#111417"/>
<rect x="1203.9" y="1138.6" width="3.6" height="3.6" fill="#111417"/>
<rect x="1209.7" y="1138.6" width="3.6" height="3.6" fill="#111417"/>
<rect x="1215.5" y="1138.6" width="3.6" height="3.6" fill="#111417"/>
<rect x="1221.3" y="1138.6" width="3.6" height="3.6" fill="#111417"/>
<rect x="1227.1" y="1138.6" width="3.6" height="3.6" fill="#111417"/>
<rect x="1232.9" y="1138.6" width="3.6" height="3.6" fill="#111417"/>
<rect x="1238.7" y="1138.6" width="3.6" height="3.6" fill="#111417"/>
<rect x="1244.5" y="1138.6" width="3.6" height="3.6" fill="#111417"/>
<rect x="1250.3" y="1138.6" width="3.6" height="3.6" fill="#111417"/>
<rect x="1256.1" y="1138.6" width="3.6" height="3.6" fill="#111417"/>
<rect x="1261.9" y="1138.6" width="3.6" height="3.6" fill="#111417"/>
<rect x="1267.7" y="1138.6" width="3.6" height="3.6" fill="#111417"/>
<rect x="1273.5" y="1138.6" width="3.6" height="3.6" fill="#111417"/>
<rect x="1279.3" y="1138.6" width="3.6" height="3.6" fill="#111417"/>
<rect x="1285.1" y="1138.6" width="3.6" height="3.6" fill="#111417"/>
<rect x="1290.9" y="1138.6" width="3.6" height="3.6" fill="#111417"/>
<rect x="1203.9" y="1144.4" width="3.6" height="3.6" fill="#111417"/>
<rect x="1209.7" y="1144.4" width="3.6" height="3.6" fill="#111417"/>
<rect x="1215.5" y="1144.4" width="3.6" height="3.6" fill="#111417"/>
<rect x="1221.3" y="1144.4" width="3.6" height="3.6" fill="#111417"/>
<rect x="1227.1" y="1144.4" width="3.6" height="3.6" fill="#111417"/>
<rect x="1232.9" y="1144.4" width="3.6" height="3.6" fill="#111417"/>
<rect x="1238.7" y="1144.4" width="3.6" height="3.6" fill="#111417"/>
<rect x="1244.5" y="1144.4" width="3.6" height="3.6" fill="#111417"/>
<rect x="1250.3" y="1144.4" width="3.6" height="3.6" fill="#111417"/>
<rect x="1256.1" y="1144.4" width="3.6" height="3.6" fill="#111417"/>
<rect x="1261.9" y="1144.4" width="3.6" height="3.6" fill="#111417"/>
<rect x="1267.7" y="1144.4" width="3.6" height="3.6" fill="#111417"/>
<rect x="1273.5" y="1144.4" width="3.6" height="3.6" fill="#111417"/>
<rect x="1279.3" y="1144.4" width="3.6" height="3.6" fill="#111417"/>
<rect x="1285.1" y="1144.4" width="3.6" height="3.6" fill="#111417"/>
<rect x="1290.9" y="1144.4" width="3.6" height="3.6" fill="#111417"/>
<rect x="1203.9" y="1150.2" width="3.6" height="3.6" fill="#111417"/>
<rect x="1209.7" y="1150.2" width="3.6" height="3.6" fill="#111417"/>
<rect x="1215.5" y="1150.2" width="3.6" height="3.6" fill="#111417"/>
<rect x="1221.3" y="1150.2" width="3.6" height="3.6" fill="#111417"/>
<rect x="1227.1" y="1150.2" width="3.6" height="3.6" fill="#111417"/>
<rect x="1232.9" y="1150.2" width="3.6" height="3.6" fill="#111417"/>
<rect x="1238.7" y="1150.2" width="3.6" height="3.6" fill="#111417"/>
<rect x="1244.5" y="1150.2" width="3.6" height="3.6" fill="#111417"/>
<rect x="1250.3" y="1150.2" width="3.6" height="3.6" fill="#111417"/>
<rect x="1256.1" y="1150.2" width="3.6" height="3.6" fill="#111417"/>
<rect x="1261.9" y="1150.2" width="3.6" height="3.6" fill="#111417"/>
<rect x="1267.7" y="1150.2" width="3.6" height="3.6" fill="#111417"/>
<rect x="1273.5" y="1150.2" width="3.6" height="3.6" fill="#111417"/>
<rect x="1279.3" y="1150.2" width="3.6" height="3.6" fill="#111417"/>
<rect x="1285.1" y="1150.2" width="3.6" height="3.6" fill="#111417"/>
<rect x="1290.9" y="1150.2" width="3.6" height="3.6" fill="#111417"/>
<rect x="1203.9" y="1156.0" width="3.6" height="3.6" fill="#111417"/>
<rect x="1209.7" y="1156.0" width="3.6" height="3.6" fill="#111417"/>
<rect x="1215.5" y="1156.0" width="3.6" height="3.6" fill="#111417"/>
<rect x="1221.3" y="1156.0" width="3.6" height="3.6" fill="#111417"/>
<rect x="1227.1" y="1156.0" width="3.6" height="3.6" fill="#111417"/>
<rect x="1232.9" y="1156.0" width="3.6" height="3.6" fill="#111417"/>
<rect x="1238.7" y="1156.0" width="3.6" height="3.6" fill="#111417"/>
<rect x="1244.5" y="1156.0" width="3.6" height="3.6" fill="#111417"/>
<rect x="1250.3" y="1156.0" width="3.6" height="3.6" fill="#111417"/>
<rect x="1256.1" y="1156.0" width="3.6" height="3.6" fill="#111417"/>
<rect x="1261.9" y="1156.0" width="3.6" height="3.6" fill="#111417"/>
<rect x="1267.7" y="1156.0" width="3.6" height="3.6" fill="#111417"/>
<rect x="1273.5" y="1156.0" width="3.6" height="3.6" fill="#111417"/>
<rect x="1279.3" y="1156.0" width="3.6" height="3.6" fill="#111417"/>
<rect x="1285.1" y="1156.0" width="3.6" height="3.6" fill="#111417"/>
<rect x="1290.9" y="1156.0" width="3.6" height="3.6" fill="#111417"/>
<rect x="1203.9" y="1161.8" width="3.6" height="3.6" fill="#111417"/>
<rect x="1209.7" y="1161.8" width="3.6" height="3.6" fill="#111417"/>
<rect x="1215.5" y="1161.8" width="3.6" height="3.6" fill="#111417"/>
<rect x="1221.3" y="1161.8" width="3.6" height="3.6" fill="#111417"/>
<rect x="1227.1" y="1161.8" width="3.6" height="3.6" fill="#111417"/>
<rect x="1232.9" y="1161.8" width="3.6" height="3.6" fill="#111417"/>
<rect x="1238.7" y="1161.8" width="3.6" height="3.6" fill="#111417"/>
<rect x="1244.5" y="1161.8" width="3.6" height="3.6" fill="#111417"/>
<rect x="1250.3" y="1161.8" width="3.6" height="3.6" fill="#111417"/>
<rect x="1256.1" y="1161.8" width="3.6" height="3.6" fill="#111417"/>
<rect x="1261.9" y="1161.8" width="3.6" height="3.6" fill="#111417"/>
<rect x="1267.7" y="1161.8" width="3.6" height="3.6" fill="#111417"/>
<rect x="1273.5" y="1161.8" width="3.6" height="3.6" fill="#111417"/>
<rect x="1279.3" y="1161.8" width="3.6" height="3.6" fill="#111417"/>
<rect x="1285.1" y="1161.8" width="3.6" height="3.6" fill="#111417"/>
<rect x="1290.9" y="1161.8" width="3.6" height="3.6" fill="#111417"/>
<rect x="1203.9" y="1167.6" width="3.6" height="3.6" fill="#111417"/>
<rect x="1209.7" y="1167.6" width="3.6" height="3.6" fill="#111417"/>
<rect x="1215.5" y="1167.6" width="3.6" height="3.6" fill="#111417"/>
<rect x="1221.3" y="1167.6" width="3.6" height="3.6" fill="#111417"/>
<rect x="1227.1" y="1167.6" width="3.6" height="3.6" fill="#111417"/>
<rect x="1232.9" y="1167.6" width="3.6" height="3.6" fill="#111417"/>
<rect x="1238.7" y="1167.6" width="3.6" height="3.6" fill="#111417"/>
<rect x="1244.5" y="1167.6" width="3.6" height="3.6" fill="#111417"/>
<rect x="1250.3" y="1167.6" width="3.6" height="3.6" fill="#111417"/>
<rect x="1256.1" y="1167.6" width="3.6" height="3.6" fill="#111417"/>
<rect x="1261.9" y="1167.6" width="3.6" height="3.6" fill="#111417"/>
<rect x="1267.7" y="1167.6" width="3.6" height="3.6" fill="#111417"/>
<rect x="1273.5" y="1167.6" width="3.6" height="3.6" fill="#111417"/>
<rect x="1279.3" y="1167.6" width="3.6" height="3.6" fill="#111417"/>
<rect x="1285.1" y="1167.6" width="3.6" height="3.6" fill="#111417"/>
<rect x="1290.9" y="1167.6" width="3.6" height="3.6" fill="#111417"/>
<rect x="1203.9" y="1173.4" width="3.6" height="3.6" fill="#111417"/>
<rect x="1209.7" y="1173.4" width="3.6" height="3.6" fill="#111417"/>
<rect x="1215.5" y="1173.4" width="3.6" height="3.6" fill="#111417"/>
<rect x="1221.3" y="1173.4" width="3.6" height="3.6" fill="#111417"/>
<rect x="1227.1" y="1173.4" width="3.6" height="3.6" fill="#111417"/>
<rect x="1232.9" y="1173.4" width="3.6" height="3.6" fill="#111417"/>
<rect x="1238.7" y="1173.4" width="3.6" height="3.6" fill="#111417"/>
<rect x="1244.5" y="1173.4" width="3.6" height="3.6" fill="#111417"/>
<rect x="1250.3" y="1173.4" width="3.6" height="3.6" fill="#111417"/>
<rect x="1256.1" y="1173.4" width="3.6" height="3.6" fill="#111417"/>
<rect x="1261.9" y="1173.4" width="3.6" height="3.6" fill="#111417"/>
<rect x="1267.7" y="1173.4" width="3.6" height="3.6" fill="#111417"/>
<rect x="1273.5" y="1173.4" width="3.6" height="3.6" fill="#111417"/>
<rect x="1279.3" y="1173.4" width="3.6" height="3.6" fill="#111417"/>
<rect x="1285.1" y="1173.4" width="3.6" height="3.6" fill="#111417"/>
<rect x="1290.9" y="1173.4" width="3.6" height="3.6" fill="#111417"/>
<rect x="1203.9" y="1179.2" width="3.6" height="3.6" fill="#111417"/>
<rect x="1209.7" y="1179.2" width="3.6" height="3.6" fill="#111417"/>
<rect x="1215.5" y="1179.2" width="3.6" height="3.6" fill="#111417"/>
<rect x="1221.3" y="1179.2" width="3.6" height="3.6" fill="#111417"/>
<rect x="1227.1" y="1179.2" width="3.6" height="3.6" fill="#111417"/>
<rect x="1232.9" y="1179.2" width="3.6" height="3.6" fill="#111417"/>
<rect x="1238.7" y="1179.2" width="3.6" height="3.6" fill="#111417"/>
<rect x="1244.5" y="1179.2" width="3.6" height="3.6" fill="#111417"/>
<rect x="1250.3" y="1179.2" width="3.6" height="3.6" fill="#111417"/>
<rect x="1256.1" y="1179.2" width="3.6" height="3.6" fill="#111417"/>
<rect x="1261.9" y="1179.2" width="3.6" height="3.6" fill="#111417"/>
<rect x="1267.7" y="1179.2" width="3.6" height="3.6" fill="#111417"/>
<rect x="1273.5" y="1179.2" width="3.6" height="3.6" fill="#111417"/>
<rect x="1279.3" y="1179.2" width="3.6" height="3.6" fill="#111417"/>
<rect x="1285.1" y="1179.2" width="3.6" height="3.6" fill="#111417"/>
<rect x="1290.9" y="1179.2" width="3.6" height="3.6" fill="#111417"/>
<rect x="1209.7" y="1185.0" width="3.6" height="3.6" fill="#111417"/>
<rect x="1215.5" y="1185.0" width="3.6" height="3.6" fill="#111417"/>
<rect x="1221.3" y="1185.0" width="3.6" height="3.6" fill="#111417"/>
<rect x="1227.1" y="1185.0" width="3.6" height="3.6" fill="#111417"/>
<rect x="1232.9" y="1185.0" width="3.6" height="3.6" fill="#111417"/>
<rect x="1238.7" y="1185.0" width="3.6" height="3.6" fill="#111417"/>
<rect x="1244.5" y="1185.0" width="3.6" height="3.6" fill="#111417"/>
<rect x="1250.3" y="1185.0" width="3.6" height="3.6" fill="#111417"/>
<rect x="1256.1" y="1185.0" width="3.6" height="3.6" fill="#111417"/>
<rect x="1261.9" y="1185.0" width="3.6" height="3.6" fill="#111417"/>
<rect x="1267.7" y="1185.0" width="3.6" height="3.6" fill="#111417"/>
<rect x="1273.5" y="1185.0" width="3.6" height="3.6" fill="#111417"/>
<rect x="1279.3" y="1185.0" width="3.6" height="3.6" fill="#111417"/>
<rect x="1285.1" y="1185.0" width="3.6" height="3.6" fill="#111417"/>
<rect x="1215.5" y="1190.8" width="3.6" height="3.6" fill="#111417"/>
<rect x="1221.3" y="1190.8" width="3.6" height="3.6" fill="#111417"/>
<rect x="1227.1" y="1190.8" width="3.6" height="3.6" fill="#111417"/>
<rect x="1232.9" y="1190.8" width="3.6" height="3.6" fill="#111417"/>
<rect x="1238.7" y="1190.8" width="3.6" height="3.6" fill="#111417"/>
<rect x="1244.5" y="1190.8" width="3.6" height="3.6" fill="#111417"/>
<rect x="1250.3" y="1190.8" width="3.6" height="3.6" fill="#111417"/>
<rect x="1256.1" y="1190.8" width="3.6" height="3.6" fill="#111417"/>
<rect x="1261.9" y="1190.8" width="3.6" height="3.6" fill="#111417"/>
<rect x="1267.7" y="1190.8" width="3.6" height="3.6" fill="#111417"/>
<rect x="1273.5" y="1190.8" width="3.6" height="3.6" fill="#111417"/>
<rect x="1279.3" y="1190.8" width="3.6" height="3.6" fill="#111417"/>
<rect x="1162.90" y="1128.40" width="37.00" height="20.00" fill="#141414" />
<rect x="1167.40" y="1132.00" width="28.00" height="13.00" fill="#262626" />
<rect x="1162.90" y="1174.40" width="37.00" height="20.00" fill="#141414" />
<rect x="1167.40" y="1178.00" width="28.00" height="13.00" fill="#262626" />
<rect x="1167.40" y="1150.50" width="28.00" height="10.00" fill="#1b1b1b" />
<rect x="1167.40" y="1161.50" width="28.00" height="10.00" fill="#1b1b1b" />
<circle cx="1206.40" cy="1134" r="1.8" fill="#e13a3a"/><circle cx="1206.40" cy="1139" r="1.8" fill="#3bd14a"/><circle cx="1205.40" cy="1151" r="1.8" fill="#3bd14a"/><circle cx="1205.40" cy="1163" r="1.8" fill="#3bd14a"/>
<line x1="1219.10" y1="1188.3" x2="1285.90" y2="1133.4" stroke="#0b0b0b" stroke-width="8" stroke-linecap="round"/>
<line x1="1276.40" y1="1141" x2="1285.90" y2="1133.4" stroke="#9a9a9a" stroke-width="3" stroke-linecap="round"/>
<rect x="1274.40" y="1184.00" width="21.00" height="12.50" fill="#5fb56e" />
<circle cx="1178.40" cy="1120.5" r="4.2" fill="#d9d9d9"/><circle cx="1288.40" cy="1120.5" r="4.2" fill="#d9d9d9"/>
<rect x="1000.00" y="1201.60" width="314.00" height="9.50" fill="#3a4248" />
<rect x="1058.70" y="1202.50" width="31.60" height="8.50" fill="#d6c22d" />
<circle cx="1156.5" cy="1206.5" r="3.5" fill="#cfcfcf"/>
<rect x="1000.00" y="1211.00" width="25.30" height="270.60" fill="#363d43" />
<circle cx="1013.2" cy="1217.5" r="4.3" fill="#d8d8d8"/><circle cx="1013" cy="1472" r="4.3" fill="#d8d8d8"/>
<rect x="1008.00" y="1313.60" width="7.00" height="62.00" fill="#1a1d20" />
<rect x="1027.00" y="1212.00" width="275.00" height="17.20" fill="#4d565d" />
<rect x="1027.00" y="1227.60" width="275.00" height="1.60" fill="#7a838a" />
<circle cx="1033" cy="1220.00" r="3.6" fill="#dcdcdc"/>
<rect x="1062" y="1214.50" width="51" height="12" rx="2" fill="none" stroke="#5f676e" stroke-width="1"/>
<rect x="1067.00" y="1220.00" width="9.00" height="5.00" fill="#0c0c0c" />
<rect x="1083.50" y="1220.00" width="9.00" height="5.00" fill="#0c0c0c" />
<rect x="1100.00" y="1220.00" width="9.00" height="5.00" fill="#0c0c0c" />
<rect x="1119" y="1214.50" width="51" height="12" rx="2" fill="none" stroke="#5f676e" stroke-width="1"/>
<rect x="1124.00" y="1220.00" width="9.00" height="5.00" fill="#0c0c0c" />
<rect x="1140.50" y="1220.00" width="9.00" height="5.00" fill="#0c0c0c" />
<rect x="1157.00" y="1220.00" width="9.00" height="5.00" fill="#0c0c0c" />
<rect x="1176" y="1214.50" width="51" height="12" rx="2" fill="none" stroke="#5f676e" stroke-width="1"/>
<rect x="1181.00" y="1220.00" width="9.00" height="5.00" fill="#0c0c0c" />
<rect x="1197.50" y="1220.00" width="9.00" height="5.00" fill="#0c0c0c" />
<rect x="1214.00" y="1220.00" width="9.00" height="5.00" fill="#0c0c0c" />
<rect x="1233" y="1214.50" width="51" height="12" rx="2" fill="none" stroke="#5f676e" stroke-width="1"/>
<rect x="1238.00" y="1220.00" width="9.00" height="5.00" fill="#0c0c0c" />
<rect x="1254.50" y="1220.00" width="9.00" height="5.00" fill="#0c0c0c" />
<rect x="1271.00" y="1220.00" width="9.00" height="5.00" fill="#0c0c0c" />
<rect x="1027.00" y="1230.50" width="275.00" height="17.20" fill="#4d565d" />
<rect x="1027.00" y="1246.10" width="275.00" height="1.60" fill="#7a838a" />
<circle cx="1033" cy="1238.50" r="3.6" fill="#dcdcdc"/>
<rect x="1062" y="1233.00" width="51" height="12" rx="2" fill="none" stroke="#5f676e" stroke-width="1"/>
<rect x="1067.00" y="1238.50" width="9.00" height="5.00" fill="#0c0c0c" />
<rect x="1083.50" y="1238.50" width="9.00" height="5.00" fill="#0c0c0c" />
<rect x="1100.00" y="1238.50" width="9.00" height="5.00" fill="#0c0c0c" />
<rect x="1119" y="1233.00" width="51" height="12" rx="2" fill="none" stroke="#5f676e" stroke-width="1"/>
<rect x="1124.00" y="1238.50" width="9.00" height="5.00" fill="#0c0c0c" />
<rect x="1140.50" y="1238.50" width="9.00" height="5.00" fill="#0c0c0c" />
<rect x="1157.00" y="1238.50" width="9.00" height="5.00" fill="#0c0c0c" />
<rect x="1176" y="1233.00" width="51" height="12" rx="2" fill="none" stroke="#5f676e" stroke-width="1"/>
<rect x="1181.00" y="1238.50" width="9.00" height="5.00" fill="#0c0c0c" />
<rect x="1197.50" y="1238.50" width="9.00" height="5.00" fill="#0c0c0c" />
<rect x="1214.00" y="1238.50" width="9.00" height="5.00" fill="#0c0c0c" />
<rect x="1233" y="1233.00" width="51" height="12" rx="2" fill="none" stroke="#5f676e" stroke-width="1"/>
<rect x="1238.00" y="1238.50" width="9.00" height="5.00" fill="#0c0c0c" />
<rect x="1254.50" y="1238.50" width="9.00" height="5.00" fill="#0c0c0c" />
<rect x="1271.00" y="1238.50" width="9.00" height="5.00" fill="#0c0c0c" />
<rect x="1027.00" y="1249.00" width="275.00" height="17.20" fill="#4d565d" />
<rect x="1027.00" y="1264.60" width="275.00" height="1.60" fill="#7a838a" />
<circle cx="1033" cy="1257.00" r="3.6" fill="#dcdcdc"/>
<rect x="1062" y="1251.50" width="51" height="12" rx="2" fill="none" stroke="#5f676e" stroke-width="1"/>
<rect x="1067.00" y="1257.00" width="9.00" height="5.00" fill="#0c0c0c" />
<rect x="1083.50" y="1257.00" width="9.00" height="5.00" fill="#0c0c0c" />
<rect x="1100.00" y="1257.00" width="9.00" height="5.00" fill="#0c0c0c" />
<rect x="1119" y="1251.50" width="51" height="12" rx="2" fill="none" stroke="#5f676e" stroke-width="1"/>
<rect x="1124.00" y="1257.00" width="9.00" height="5.00" fill="#0c0c0c" />
<rect x="1140.50" y="1257.00" width="9.00" height="5.00" fill="#0c0c0c" />
<rect x="1157.00" y="1257.00" width="9.00" height="5.00" fill="#0c0c0c" />
<rect x="1176" y="1251.50" width="51" height="12" rx="2" fill="none" stroke="#5f676e" stroke-width="1"/>
<rect x="1181.00" y="1257.00" width="9.00" height="5.00" fill="#0c0c0c" />
<rect x="1197.50" y="1257.00" width="9.00" height="5.00" fill="#0c0c0c" />
<rect x="1214.00" y="1257.00" width="9.00" height="5.00" fill="#0c0c0c" />
<rect x="1233" y="1251.50" width="51" height="12" rx="2" fill="none" stroke="#5f676e" stroke-width="1"/>
<rect x="1238.00" y="1257.00" width="9.00" height="5.00" fill="#0c0c0c" />
<rect x="1254.50" y="1257.00" width="9.00" height="5.00" fill="#0c0c0c" />
<rect x="1271.00" y="1257.00" width="9.00" height="5.00" fill="#0c0c0c" />
<rect x="1027.00" y="1267.50" width="275.00" height="17.20" fill="#4d565d" />
<rect x="1027.00" y="1283.10" width="275.00" height="1.60" fill="#7a838a" />
<circle cx="1033" cy="1275.50" r="3.6" fill="#dcdcdc"/>
<rect x="1062" y="1270.00" width="51" height="12" rx="2" fill="none" stroke="#5f676e" stroke-width="1"/>
<rect x="1067.00" y="1275.50" width="9.00" height="5.00" fill="#0c0c0c" />
<rect x="1083.50" y="1275.50" width="9.00" height="5.00" fill="#0c0c0c" />
<rect x="1100.00" y="1275.50" width="9.00" height="5.00" fill="#0c0c0c" />
<rect x="1119" y="1270.00" width="51" height="12" rx="2" fill="none" stroke="#5f676e" stroke-width="1"/>
<rect x="1124.00" y="1275.50" width="9.00" height="5.00" fill="#0c0c0c" />
<rect x="1140.50" y="1275.50" width="9.00" height="5.00" fill="#0c0c0c" />
<rect x="1157.00" y="1275.50" width="9.00" height="5.00" fill="#0c0c0c" />
<rect x="1176" y="1270.00" width="51" height="12" rx="2" fill="none" stroke="#5f676e" stroke-width="1"/>
<rect x="1181.00" y="1275.50" width="9.00" height="5.00" fill="#0c0c0c" />
<rect x="1197.50" y="1275.50" width="9.00" height="5.00" fill="#0c0c0c" />
<rect x="1214.00" y="1275.50" width="9.00" height="5.00" fill="#0c0c0c" />
<rect x="1233" y="1270.00" width="51" height="12" rx="2" fill="none" stroke="#5f676e" stroke-width="1"/>
<rect x="1238.00" y="1275.50" width="9.00" height="5.00" fill="#0c0c0c" />
<rect x="1254.50" y="1275.50" width="9.00" height="5.00" fill="#0c0c0c" />
<rect x="1271.00" y="1275.50" width="9.00" height="5.00" fill="#0c0c0c" />
<rect x="1027.00" y="1286.00" width="275.00" height="17.20" fill="#4d565d" />
<rect x="1027.00" y="1301.60" width="275.00" height="1.60" fill="#7a838a" />
<circle cx="1033" cy="1294.00" r="3.6" fill="#dcdcdc"/>
<rect x="1062" y="1288.50" width="51" height="12" rx="2" fill="none" stroke="#5f676e" stroke-width="1"/>
<rect x="1067.00" y="1294.00" width="9.00" height="5.00" fill="#0c0c0c" />
<rect x="1083.50" y="1294.00" width="9.00" height="5.00" fill="#0c0c0c" />
<rect x="1100.00" y="1294.00" width="9.00" height="5.00" fill="#0c0c0c" />
<rect x="1119" y="1288.50" width="51" height="12" rx="2" fill="none" stroke="#5f676e" stroke-width="1"/>
<rect x="1124.00" y="1294.00" width="9.00" height="5.00" fill="#0c0c0c" />
<rect x="1140.50" y="1294.00" width="9.00" height="5.00" fill="#0c0c0c" />
<rect x="1157.00" y="1294.00" width="9.00" height="5.00" fill="#0c0c0c" />
<rect x="1176" y="1288.50" width="51" height="12" rx="2" fill="none" stroke="#5f676e" stroke-width="1"/>
<rect x="1181.00" y="1294.00" width="9.00" height="5.00" fill="#0c0c0c" />
<rect x="1197.50" y="1294.00" width="9.00" height="5.00" fill="#0c0c0c" />
<rect x="1214.00" y="1294.00" width="9.00" height="5.00" fill="#0c0c0c" />
<rect x="1233" y="1288.50" width="51" height="12" rx="2" fill="none" stroke="#5f676e" stroke-width="1"/>
<rect x="1238.00" y="1294.00" width="9.00" height="5.00" fill="#0c0c0c" />
<rect x="1254.50" y="1294.00" width="9.00" height="5.00" fill="#0c0c0c" />
<rect x="1271.00" y="1294.00" width="9.00" height="5.00" fill="#0c0c0c" />
<rect x="1027.00" y="1304.50" width="275.00" height="17.20" fill="#4d565d" />
<rect x="1027.00" y="1320.10" width="275.00" height="1.60" fill="#7a838a" />
<circle cx="1033" cy="1312.50" r="3.6" fill="#dcdcdc"/>
<rect x="1062" y="1307.00" width="51" height="12" rx="2" fill="none" stroke="#5f676e" stroke-width="1"/>
<rect x="1067.00" y="1312.50" width="9.00" height="5.00" fill="#0c0c0c" />
<rect x="1083.50" y="1312.50" width="9.00" height="5.00" fill="#0c0c0c" />
<rect x="1100.00" y="1312.50" width="9.00" height="5.00" fill="#0c0c0c" />
<rect x="1119" y="1307.00" width="51" height="12" rx="2" fill="none" stroke="#5f676e" stroke-width="1"/>
<rect x="1124.00" y="1312.50" width="9.00" height="5.00" fill="#0c0c0c" />
<rect x="1140.50" y="1312.50" width="9.00" height="5.00" fill="#0c0c0c" />
<rect x="1157.00" y="1312.50" width="9.00" height="5.00" fill="#0c0c0c" />
<rect x="1176" y="1307.00" width="51" height="12" rx="2" fill="none" stroke="#5f676e" stroke-width="1"/>
<rect x="1181.00" y="1312.50" width="9.00" height="5.00" fill="#0c0c0c" />
<rect x="1197.50" y="1312.50" width="9.00" height="5.00" fill="#0c0c0c" />
<rect x="1214.00" y="1312.50" width="9.00" height="5.00" fill="#0c0c0c" />
<rect x="1233" y="1307.00" width="51" height="12" rx="2" fill="none" stroke="#5f676e" stroke-width="1"/>
<rect x="1238.00" y="1312.50" width="9.00" height="5.00" fill="#0c0c0c" />
<rect x="1254.50" y="1312.50" width="9.00" height="5.00" fill="#0c0c0c" />
<rect x="1271.00" y="1312.50" width="9.00" height="5.00" fill="#0c0c0c" />
<rect x="1027.00" y="1323.00" width="275.00" height="17.20" fill="#4d565d" />
<rect x="1027.00" y="1338.60" width="275.00" height="1.60" fill="#7a838a" />
<circle cx="1033" cy="1331.00" r="3.6" fill="#dcdcdc"/>
<rect x="1062" y="1325.50" width="51" height="12" rx="2" fill="none" stroke="#5f676e" stroke-width="1"/>
<rect x="1067.00" y="1331.00" width="9.00" height="5.00" fill="#0c0c0c" />
<rect x="1083.50" y="1331.00" width="9.00" height="5.00" fill="#0c0c0c" />
<rect x="1100.00" y="1331.00" width="9.00" height="5.00" fill="#0c0c0c" />
<rect x="1119" y="1325.50" width="51" height="12" rx="2" fill="none" stroke="#5f676e" stroke-width="1"/>
<rect x="1124.00" y="1331.00" width="9.00" height="5.00" fill="#0c0c0c" />
<rect x="1140.50" y="1331.00" width="9.00" height="5.00" fill="#0c0c0c" />
<rect x="1157.00" y="1331.00" width="9.00" height="5.00" fill="#0c0c0c" />
<rect x="1176" y="1325.50" width="51" height="12" rx="2" fill="none" stroke="#5f676e" stroke-width="1"/>
<rect x="1181.00" y="1331.00" width="9.00" height="5.00" fill="#0c0c0c" />
<rect x="1197.50" y="1331.00" width="9.00" height="5.00" fill="#0c0c0c" />
<rect x="1214.00" y="1331.00" width="9.00" height="5.00" fill="#0c0c0c" />
<rect x="1233" y="1325.50" width="51" height="12" rx="2" fill="none" stroke="#5f676e" stroke-width="1"/>
<rect x="1238.00" y="1331.00" width="9.00" height="5.00" fill="#0c0c0c" />
<rect x="1254.50" y="1331.00" width="9.00" height="5.00" fill="#0c0c0c" />
<rect x="1271.00" y="1331.00" width="9.00" height="5.00" fill="#0c0c0c" />
<rect x="1027.00" y="1341.50" width="275.00" height="17.20" fill="#4d565d" />
<rect x="1027.00" y="1357.10" width="275.00" height="1.60" fill="#7a838a" />
<circle cx="1033" cy="1349.50" r="3.6" fill="#dcdcdc"/>
<rect x="1062" y="1344.00" width="51" height="12" rx="2" fill="none" stroke="#5f676e" stroke-width="1"/>
<rect x="1067.00" y="1349.50" width="9.00" height="5.00" fill="#0c0c0c" />
<rect x="1083.50" y="1349.50" width="9.00" height="5.00" fill="#0c0c0c" />
<rect x="1100.00" y="1349.50" width="9.00" height="5.00" fill="#0c0c0c" />
<rect x="1119" y="1344.00" width="51" height="12" rx="2" fill="none" stroke="#5f676e" stroke-width="1"/>
<rect x="1124.00" y="1349.50" width="9.00" height="5.00" fill="#0c0c0c" />
<rect x="1140.50" y="1349.50" width="9.00" height="5.00" fill="#0c0c0c" />
<rect x="1157.00" y="1349.50" width="9.00" height="5.00" fill="#0c0c0c" />
<rect x="1176" y="1344.00" width="51" height="12" rx="2" fill="none" stroke="#5f676e" stroke-width="1"/>
<rect x="1181.00" y="1349.50" width="9.00" height="5.00" fill="#0c0c0c" />
<rect x="1197.50" y="1349.50" width="9.00" height="5.00" fill="#0c0c0c" />
<rect x="1214.00" y="1349.50" width="9.00" height="5.00" fill="#0c0c0c" />
<rect x="1233" y="1344.00" width="51" height="12" rx="2" fill="none" stroke="#5f676e" stroke-width="1"/>
<rect x="1238.00" y="1349.50" width="9.00" height="5.00" fill="#0c0c0c" />
<rect x="1254.50" y="1349.50" width="9.00" height="5.00" fill="#0c0c0c" />
<rect x="1271.00" y="1349.50" width="9.00" height="5.00" fill="#0c0c0c" />
<rect x="1027.00" y="1360.00" width="275.00" height="17.20" fill="#4d565d" />
<rect x="1027.00" y="1375.60" width="275.00" height="1.60" fill="#7a838a" />
<circle cx="1033" cy="1368.00" r="3.6" fill="#dcdcdc"/>
<rect x="1062" y="1362.50" width="51" height="12" rx="2" fill="none" stroke="#5f676e" stroke-width="1"/>
<rect x="1067.00" y="1368.00" width="9.00" height="5.00" fill="#0c0c0c" />
<rect x="1083.50" y="1368.00" width="9.00" height="5.00" fill="#0c0c0c" />
<rect x="1100.00" y="1368.00" width="9.00" height="5.00" fill="#0c0c0c" />
<rect x="1119" y="1362.50" width="51" height="12" rx="2" fill="none" stroke="#5f676e" stroke-width="1"/>
<rect x="1124.00" y="1368.00" width="9.00" height="5.00" fill="#0c0c0c" />
<rect x="1140.50" y="1368.00" width="9.00" height="5.00" fill="#0c0c0c" />
<rect x="1157.00" y="1368.00" width="9.00" height="5.00" fill="#0c0c0c" />
<rect x="1176" y="1362.50" width="51" height="12" rx="2" fill="none" stroke="#5f676e" stroke-width="1"/>
<rect x="1181.00" y="1368.00" width="9.00" height="5.00" fill="#0c0c0c" />
<rect x="1197.50" y="1368.00" width="9.00" height="5.00" fill="#0c0c0c" />
<rect x="1214.00" y="1368.00" width="9.00" height="5.00" fill="#0c0c0c" />
<rect x="1233" y="1362.50" width="51" height="12" rx="2" fill="none" stroke="#5f676e" stroke-width="1"/>
<rect x="1238.00" y="1368.00" width="9.00" height="5.00" fill="#0c0c0c" />
<rect x="1254.50" y="1368.00" width="9.00" height="5.00" fill="#0c0c0c" />
<rect x="1271.00" y="1368.00" width="9.00" height="5.00" fill="#0c0c0c" />
<rect x="1027.00" y="1378.50" width="275.00" height="17.20" fill="#4d565d" />
<rect x="1027.00" y="1394.10" width="275.00" height="1.60" fill="#7a838a" />
<circle cx="1033" cy="1386.50" r="3.6" fill="#dcdcdc"/>
<rect x="1062" y="1381.00" width="51" height="12" rx="2" fill="none" stroke="#5f676e" stroke-width="1"/>
<rect x="1067.00" y="1386.50" width="9.00" height="5.00" fill="#0c0c0c" />
<rect x="1083.50" y="1386.50" width="9.00" height="5.00" fill="#0c0c0c" />
<rect x="1100.00" y="1386.50" width="9.00" height="5.00" fill="#0c0c0c" />
<rect x="1119" y="1381.00" width="51" height="12" rx="2" fill="none" stroke="#5f676e" stroke-width="1"/>
<rect x="1124.00" y="1386.50" width="9.00" height="5.00" fill="#0c0c0c" />
<rect x="1140.50" y="1386.50" width="9.00" height="5.00" fill="#0c0c0c" />
<rect x="1157.00" y="1386.50" width="9.00" height="5.00" fill="#0c0c0c" />
<rect x="1176" y="1381.00" width="51" height="12" rx="2" fill="none" stroke="#5f676e" stroke-width="1"/>
<rect x="1181.00" y="1386.50" width="9.00" height="5.00" fill="#0c0c0c" />
<rect x="1197.50" y="1386.50" width="9.00" height="5.00" fill="#0c0c0c" />
<rect x="1214.00" y="1386.50" width="9.00" height="5.00" fill="#0c0c0c" />
<rect x="1233" y="1381.00" width="51" height="12" rx="2" fill="none" stroke="#5f676e" stroke-width="1"/>
<rect x="1238.00" y="1386.50" width="9.00" height="5.00" fill="#0c0c0c" />
<rect x="1254.50" y="1386.50" width="9.00" height="5.00" fill="#0c0c0c" />
<rect x="1271.00" y="1386.50" width="9.00" height="5.00" fill="#0c0c0c" />
<rect x="1027.00" y="1397.00" width="275.00" height="17.20" fill="#4d565d" />
<rect x="1027.00" y="1412.60" width="275.00" height="1.60" fill="#7a838a" />
<circle cx="1033" cy="1405.00" r="3.6" fill="#dcdcdc"/>
<rect x="1062" y="1399.50" width="51" height="12" rx="2" fill="none" stroke="#5f676e" stroke-width="1"/>
<rect x="1067.00" y="1405.00" width="9.00" height="5.00" fill="#0c0c0c" />
<rect x="1083.50" y="1405.00" width="9.00" height="5.00" fill="#0c0c0c" />
<rect x="1100.00" y="1405.00" width="9.00" height="5.00" fill="#0c0c0c" />
<rect x="1119" y="1399.50" width="51" height="12" rx="2" fill="none" stroke="#5f676e" stroke-width="1"/>
<rect x="1124.00" y="1405.00" width="9.00" height="5.00" fill="#0c0c0c" />
<rect x="1140.50" y="1405.00" width="9.00" height="5.00" fill="#0c0c0c" />
<rect x="1157.00" y="1405.00" width="9.00" height="5.00" fill="#0c0c0c" />
<rect x="1176" y="1399.50" width="51" height="12" rx="2" fill="none" stroke="#5f676e" stroke-width="1"/>
<rect x="1181.00" y="1405.00" width="9.00" height="5.00" fill="#0c0c0c" />
<rect x="1197.50" y="1405.00" width="9.00" height="5.00" fill="#0c0c0c" />
<rect x="1214.00" y="1405.00" width="9.00" height="5.00" fill="#0c0c0c" />
<rect x="1233" y="1399.50" width="51" height="12" rx="2" fill="none" stroke="#5f676e" stroke-width="1"/>
<rect x="1238.00" y="1405.00" width="9.00" height="5.00" fill="#0c0c0c" />
<rect x="1254.50" y="1405.00" width="9.00" height="5.00" fill="#0c0c0c" />
<rect x="1271.00" y="1405.00" width="9.00" height="5.00" fill="#0c0c0c" />
<rect x="1027.00" y="1415.50" width="275.00" height="17.20" fill="#4d565d" />
<rect x="1027.00" y="1431.10" width="275.00" height="1.60" fill="#7a838a" />
<circle cx="1033" cy="1423.50" r="3.6" fill="#dcdcdc"/>
<rect x="1062" y="1418.00" width="51" height="12" rx="2" fill="none" stroke="#5f676e" stroke-width="1"/>
<rect x="1067.00" y="1423.50" width="9.00" height="5.00" fill="#0c0c0c" />
<rect x="1083.50" y="1423.50" width="9.00" height="5.00" fill="#0c0c0c" />
<rect x="1100.00" y="1423.50" width="9.00" height="5.00" fill="#0c0c0c" />
<rect x="1119" y="1418.00" width="51" height="12" rx="2" fill="none" stroke="#5f676e" stroke-width="1"/>
<rect x="1124.00" y="1423.50" width="9.00" height="5.00" fill="#0c0c0c" />
<rect x="1140.50" y="1423.50" width="9.00" height="5.00" fill="#0c0c0c" />
<rect x="1157.00" y="1423.50" width="9.00" height="5.00" fill="#0c0c0c" />
<rect x="1176" y="1418.00" width="51" height="12" rx="2" fill="none" stroke="#5f676e" stroke-width="1"/>
<rect x="1181.00" y="1423.50" width="9.00" height="5.00" fill="#0c0c0c" />
<rect x="1197.50" y="1423.50" width="9.00" height="5.00" fill="#0c0c0c" />
<rect x="1214.00" y="1423.50" width="9.00" height="5.00" fill="#0c0c0c" />
<rect x="1233" y="1418.00" width="51" height="12" rx="2" fill="none" stroke="#5f676e" stroke-width="1"/>
<rect x="1238.00" y="1423.50" width="9.00" height="5.00" fill="#0c0c0c" />
<rect x="1254.50" y="1423.50" width="9.00" height="5.00" fill="#0c0c0c" />
<rect x="1271.00" y="1423.50" width="9.00" height="5.00" fill="#0c0c0c" />
<rect x="1027.00" y="1434.00" width="275.00" height="17.20" fill="#4d565d" />
<rect x="1027.00" y="1449.60" width="275.00" height="1.60" fill="#7a838a" />
<circle cx="1033" cy="1442.00" r="3.6" fill="#dcdcdc"/>
<rect x="1062" y="1436.50" width="51" height="12" rx="2" fill="none" stroke="#5f676e" stroke-width="1"/>
<rect x="1067.00" y="1442.00" width="9.00" height="5.00" fill="#0c0c0c" />
<rect x="1083.50" y="1442.00" width="9.00" height="5.00" fill="#0c0c0c" />
<rect x="1100.00" y="1442.00" width="9.00" height="5.00" fill="#0c0c0c" />
<rect x="1119" y="1436.50" width="51" height="12" rx="2" fill="none" stroke="#5f676e" stroke-width="1"/>
<rect x="1124.00" y="1442.00" width="9.00" height="5.00" fill="#0c0c0c" />
<rect x="1140.50" y="1442.00" width="9.00" height="5.00" fill="#0c0c0c" />
<rect x="1157.00" y="1442.00" width="9.00" height="5.00" fill="#0c0c0c" />
<rect x="1176" y="1436.50" width="51" height="12" rx="2" fill="none" stroke="#5f676e" stroke-width="1"/>
<rect x="1181.00" y="1442.00" width="9.00" height="5.00" fill="#0c0c0c" />
<rect x="1197.50" y="1442.00" width="9.00" height="5.00" fill="#0c0c0c" />
<rect x="1214.00" y="1442.00" width="9.00" height="5.00" fill="#0c0c0c" />
<rect x="1233" y="1436.50" width="51" height="12" rx="2" fill="none" stroke="#5f676e" stroke-width="1"/>
<rect x="1238.00" y="1442.00" width="9.00" height="5.00" fill="#0c0c0c" />
<rect x="1254.50" y="1442.00" width="9.00" height="5.00" fill="#0c0c0c" />
<rect x="1271.00" y="1442.00" width="9.00" height="5.00" fill="#0c0c0c" />
<rect x="1027.00" y="1452.50" width="275.00" height="17.20" fill="#4d565d" />
<rect x="1027.00" y="1468.10" width="275.00" height="1.60" fill="#7a838a" />
<circle cx="1033" cy="1460.50" r="3.6" fill="#dcdcdc"/>
<rect x="1062" y="1455.00" width="51" height="12" rx="2" fill="none" stroke="#5f676e" stroke-width="1"/>
<rect x="1067.00" y="1460.50" width="9.00" height="5.00" fill="#0c0c0c" />
<rect x="1083.50" y="1460.50" width="9.00" height="5.00" fill="#0c0c0c" />
<rect x="1100.00" y="1460.50" width="9.00" height="5.00" fill="#0c0c0c" />
<rect x="1119" y="1455.00" width="51" height="12" rx="2" fill="none" stroke="#5f676e" stroke-width="1"/>
<rect x="1124.00" y="1460.50" width="9.00" height="5.00" fill="#0c0c0c" />
<rect x="1140.50" y="1460.50" width="9.00" height="5.00" fill="#0c0c0c" />
<rect x="1157.00" y="1460.50" width="9.00" height="5.00" fill="#0c0c0c" />
<rect x="1176" y="1455.00" width="51" height="12" rx="2" fill="none" stroke="#5f676e" stroke-width="1"/>
<rect x="1181.00" y="1460.50" width="9.00" height="5.00" fill="#0c0c0c" />
<rect x="1197.50" y="1460.50" width="9.00" height="5.00" fill="#0c0c0c" />
<rect x="1214.00" y="1460.50" width="9.00" height="5.00" fill="#0c0c0c" />
<rect x="1233" y="1455.00" width="51" height="12" rx="2" fill="none" stroke="#5f676e" stroke-width="1"/>
<rect x="1238.00" y="1460.50" width="9.00" height="5.00" fill="#0c0c0c" />
<rect x="1254.50" y="1460.50" width="9.00" height="5.00" fill="#0c0c0c" />
<rect x="1271.00" y="1460.50" width="9.00" height="5.00" fill="#0c0c0c" />
<rect x="1027.00" y="1471.00" width="275.00" height="10.60" fill="#3a4248" />
<rect x="1302.80" y="1211.00" width="11.20" height="262.00" fill="#53b468" />
<circle cx="1308.4" cy="1221.00" r="3.3" fill="#cdd5cf"/>
<circle cx="1308.4" cy="1239.50" r="3.3" fill="#cdd5cf"/>
<circle cx="1308.4" cy="1258.00" r="3.3" fill="#cdd5cf"/>
<circle cx="1308.4" cy="1276.50" r="3.3" fill="#cdd5cf"/>
<circle cx="1308.4" cy="1295.00" r="3.3" fill="#cdd5cf"/>
<circle cx="1308.4" cy="1313.50" r="3.3" fill="#cdd5cf"/>
<circle cx="1308.4" cy="1332.00" r="3.3" fill="#cdd5cf"/>
<circle cx="1308.4" cy="1350.50" r="3.3" fill="#cdd5cf"/>
<circle cx="1308.4" cy="1369.00" r="3.3" fill="#cdd5cf"/>
<circle cx="1308.4" cy="1387.50" r="3.3" fill="#cdd5cf"/>
<circle cx="1308.4" cy="1406.00" r="3.3" fill="#cdd5cf"/>
<circle cx="1308.4" cy="1424.50" r="3.3" fill="#cdd5cf"/>
<circle cx="1308.4" cy="1443.00" r="3.3" fill="#cdd5cf"/>
<circle cx="1308.4" cy="1461.50" r="3.3" fill="#cdd5cf"/>
<rect x="1090.30" y="1285.80" width="132.20" height="20.70" fill="#6f8393" stroke="#111" stroke-width="2.4"/>
<text x="1156.40" y="1302.20" font-size="16.8" fill="#fff" text-anchor="middle" font-family="Liberation Sans">NHCTCORE01</text>
<rect x="1000.00" y="1481.66" width="314.00" height="28.57" fill="url(#srv1u)" stroke="#111" stroke-width="2"/>
<rect x="1000.00" y="1481.66" width="14.00" height="28.57" fill="url(#silverH)" stroke="#111" stroke-width="1.6"/>
<ellipse cx="1007.00" cy="1484.66" rx="3.2" ry="2.6" fill="#555" stroke="#111" stroke-width="1.2"/>
<ellipse cx="1007.00" cy="1507.23" rx="3.2" ry="2.6" fill="#555" stroke="#111" stroke-width="1.2"/>
<rect x="1000.00" y="1495.14" width="14" height="1.6" fill="#333"/>
<rect x="1300.00" y="1481.66" width="14.00" height="28.57" fill="url(#silverH)" stroke="#111" stroke-width="1.6"/>
<ellipse cx="1307.00" cy="1484.66" rx="3.2" ry="2.6" fill="#555" stroke="#111" stroke-width="1.2"/>
<ellipse cx="1307.00" cy="1507.23" rx="3.2" ry="2.6" fill="#555" stroke="#111" stroke-width="1.2"/>
<rect x="1300.00" y="1495.14" width="14" height="1.6" fill="#333"/>
<rect x="1030.00" y="1486.80" width="60" height="5.71" fill="#e9e9e9" stroke="#111" stroke-width="2"/>
<rect x="1030.00" y="1497.09" width="60" height="5.71" fill="#e9e9e9" stroke="#111" stroke-width="2"/>
<rect x="1244.00" y="1485.94" width="45" height="20.00" fill="#d0d0d0" stroke="#8c8c8c" stroke-width="1.5"/>
<rect x="1262.00" y="1487.37" width="8" height="15.71" fill="#bdbdbd" stroke="#8c8c8c" stroke-width="1"/>
<rect x="1030.00" y="1505.94" width="254.00" height="1.6" fill="#a8a8a8"/>
<rect x="1219.00" y="1485.09" width="36" height="6.29" fill="#3c9a5a" stroke="#222" stroke-width="1.4"/>
<rect x="1097.70" y="1485.30" width="117.80" height="21.50" fill="#6f8393" stroke="#111" stroke-width="2.4"/>
<text x="1156.60" y="1502.10" font-size="16.8" fill="#fff" text-anchor="middle" font-family="Liberation Sans">nh-hyperv-02</text>
<rect x="996.90" y="1508.00" width="319.10" height="232.30" fill="#ffff00" />
<rect x="1002.00" y="1512.70" width="309.00" height="222.80" fill="#a8a095" />
<rect x="1002.00" y="1512.70" width="21.50" height="222.80" fill="#b3ab9f" />
<rect x="1293.50" y="1512.70" width="17.50" height="222.80" fill="#b3ab9f" />
<rect x="1014.00" y="1512.70" width="4.00" height="222.80" fill="#c7c0b5" />
<rect x="1300.00" y="1512.70" width="4.00" height="222.80" fill="#c7c0b5" />
<ellipse cx="1008.5" cy="1542.0" rx="3.4" ry="2.6" fill="#111"/><ellipse cx="1305" cy="1542.0" rx="3.4" ry="2.6" fill="#111"/>
<ellipse cx="1008.5" cy="1588.2" rx="3.4" ry="2.6" fill="#111"/><ellipse cx="1305" cy="1588.2" rx="3.4" ry="2.6" fill="#111"/>
<ellipse cx="1008.5" cy="1634.4" rx="3.4" ry="2.6" fill="#111"/><ellipse cx="1305" cy="1634.4" rx="3.4" ry="2.6" fill="#111"/>
<ellipse cx="1008.5" cy="1680.6" rx="3.4" ry="2.6" fill="#111"/><ellipse cx="1305" cy="1680.6" rx="3.4" ry="2.6" fill="#111"/>
<rect x="1023.50" y="1513.00" width="131.00" height="46.00" fill="#b9b1a5" />
<rect x="1023.50" y="1513.00" width="131.00" height="3.00" fill="#8f877c" />
<rect x="1032.00" y="1518.80" width="31.00" height="12.20" fill="#d3ccc1" />
<rect x="1064.00" y="1519.00" width="7.00" height="12.00" fill="#1c1714" />
<rect x="1080.00" y="1524.00" width="20.00" height="16.00" fill="url(#gMeshU)" />
<rect x="1110.00" y="1520.00" width="7.00" height="12.00" fill="#1c1714" />
<rect x="1137.50" y="1520.00" width="7.00" height="12.00" fill="#1c1714" />
<rect x="1118.50" y="1519.00" width="17.00" height="12.00" fill="#d0c9be" />
<path d="M1024.5 1535.8H1151.5V1543.0H1035.5L1031.5 1549.0H1024.5z" fill="url(#gMeshU)"/>
<rect x="1046.0" y="1535.8" width="34" height="21" rx="3" fill="#2d5263"/>
<rect x="1047.50" y="1553.00" width="32.00" height="5.00" fill="#3d3a36" />
<circle cx="1084.2" cy="1544.7" r="4.2" fill="#ddd8cf" stroke="#6d6760" stroke-width="1"/>
<rect x="1091.50" y="1544.00" width="61.00" height="13.00" fill="#cbc4b8" />
<ellipse cx="1120.5" cy="1550.3" rx="10" ry="3" fill="#3b3632"/>
<rect x="1023.50" y="1557.20" width="131.00" height="2.00" fill="#6f675e" />
<rect x="1023.50" y="1559.20" width="131.00" height="46.00" fill="#b9b1a5" />
<rect x="1023.50" y="1559.20" width="131.00" height="3.00" fill="#8f877c" />
<rect x="1032.00" y="1565.00" width="31.00" height="12.20" fill="#d3ccc1" />
<rect x="1064.00" y="1565.20" width="7.00" height="12.00" fill="#1c1714" />
<rect x="1080.00" y="1570.20" width="20.00" height="16.00" fill="url(#gMeshU)" />
<rect x="1110.00" y="1566.20" width="7.00" height="12.00" fill="#1c1714" />
<rect x="1137.50" y="1566.20" width="7.00" height="12.00" fill="#1c1714" />
<rect x="1118.50" y="1565.20" width="17.00" height="12.00" fill="#d0c9be" />
<path d="M1024.5 1582.0H1151.5V1589.2H1035.5L1031.5 1595.2H1024.5z" fill="url(#gMeshU)"/>
<rect x="1046.0" y="1582.0" width="34" height="21" rx="3" fill="#2d5263"/>
<rect x="1047.50" y="1599.20" width="32.00" height="5.00" fill="#3d3a36" />
<circle cx="1084.2" cy="1590.9" r="4.2" fill="#ddd8cf" stroke="#6d6760" stroke-width="1"/>
<rect x="1091.50" y="1590.20" width="61.00" height="13.00" fill="#cbc4b8" />
<ellipse cx="1120.5" cy="1596.5" rx="10" ry="3" fill="#3b3632"/>
<rect x="1023.50" y="1603.40" width="131.00" height="2.00" fill="#6f675e" />
<rect x="1023.50" y="1605.40" width="131.00" height="46.00" fill="#b9b1a5" />
<rect x="1023.50" y="1605.40" width="131.00" height="3.00" fill="#8f877c" />
<rect x="1032.00" y="1611.20" width="31.00" height="12.20" fill="#d3ccc1" />
<rect x="1064.00" y="1611.40" width="7.00" height="12.00" fill="#1c1714" />
<rect x="1080.00" y="1616.40" width="20.00" height="16.00" fill="url(#gMeshU)" />
<rect x="1110.00" y="1612.40" width="7.00" height="12.00" fill="#1c1714" />
<rect x="1137.50" y="1612.40" width="7.00" height="12.00" fill="#1c1714" />
<rect x="1118.50" y="1611.40" width="17.00" height="12.00" fill="#d0c9be" />
<path d="M1024.5 1628.2H1151.5V1635.4H1035.5L1031.5 1641.4H1024.5z" fill="url(#gMeshU)"/>
<rect x="1046.0" y="1628.2" width="34" height="21" rx="3" fill="#2d5263"/>
<rect x="1047.50" y="1645.40" width="32.00" height="5.00" fill="#3d3a36" />
<circle cx="1084.2" cy="1637.1" r="4.2" fill="#ddd8cf" stroke="#6d6760" stroke-width="1"/>
<rect x="1091.50" y="1636.40" width="61.00" height="13.00" fill="#cbc4b8" />
<ellipse cx="1120.5" cy="1642.7" rx="10" ry="3" fill="#3b3632"/>
<rect x="1023.50" y="1649.60" width="131.00" height="2.00" fill="#6f675e" />
<rect x="1023.50" y="1651.60" width="131.00" height="46.00" fill="#b9b1a5" />
<rect x="1023.50" y="1651.60" width="131.00" height="3.00" fill="#8f877c" />
<rect x="1032.00" y="1657.40" width="31.00" height="12.20" fill="#d3ccc1" />
<rect x="1064.00" y="1657.60" width="7.00" height="12.00" fill="#1c1714" />
<rect x="1080.00" y="1662.60" width="20.00" height="16.00" fill="url(#gMeshU)" />
<rect x="1110.00" y="1658.60" width="7.00" height="12.00" fill="#1c1714" />
<rect x="1137.50" y="1658.60" width="7.00" height="12.00" fill="#1c1714" />
<rect x="1118.50" y="1657.60" width="17.00" height="12.00" fill="#d0c9be" />
<path d="M1024.5 1674.4H1151.5V1681.6H1035.5L1031.5 1687.6H1024.5z" fill="url(#gMeshU)"/>
<rect x="1046.0" y="1674.4" width="34" height="21" rx="3" fill="#2d5263"/>
<rect x="1047.50" y="1691.60" width="32.00" height="5.00" fill="#3d3a36" />
<circle cx="1084.2" cy="1683.3" r="4.2" fill="#ddd8cf" stroke="#6d6760" stroke-width="1"/>
<rect x="1091.50" y="1682.60" width="61.00" height="13.00" fill="#cbc4b8" />
<ellipse cx="1120.5" cy="1688.9" rx="10" ry="3" fill="#3b3632"/>
<rect x="1023.50" y="1695.80" width="131.00" height="2.00" fill="#6f675e" />
<rect x="1154.50" y="1512.70" width="5.50" height="184.00" fill="#918a80" />
<rect x="1160.00" y="1513.00" width="131.00" height="46.00" fill="#b9b1a5" />
<rect x="1160.00" y="1513.00" width="131.00" height="3.00" fill="#8f877c" />
<rect x="1168.50" y="1518.80" width="31.00" height="12.20" fill="#d3ccc1" />
<rect x="1200.50" y="1519.00" width="7.00" height="12.00" fill="#1c1714" />
<rect x="1216.50" y="1524.00" width="20.00" height="16.00" fill="url(#gMeshU)" />
<rect x="1246.50" y="1520.00" width="7.00" height="12.00" fill="#1c1714" />
<rect x="1274.00" y="1520.00" width="7.00" height="12.00" fill="#1c1714" />
<rect x="1255.00" y="1519.00" width="17.00" height="12.00" fill="#d0c9be" />
<path d="M1161.0 1535.8H1288.0V1543.0H1172.0L1168.0 1549.0H1161.0z" fill="url(#gMeshU)"/>
<rect x="1182.5" y="1535.8" width="34" height="21" rx="3" fill="#2d5263"/>
<rect x="1184.00" y="1553.00" width="32.00" height="5.00" fill="#3d3a36" />
<circle cx="1220.7" cy="1544.7" r="4.2" fill="#ddd8cf" stroke="#6d6760" stroke-width="1"/>
<rect x="1228.00" y="1544.00" width="61.00" height="13.00" fill="#cbc4b8" />
<ellipse cx="1257.0" cy="1550.3" rx="10" ry="3" fill="#3b3632"/>
<rect x="1160.00" y="1557.20" width="131.00" height="2.00" fill="#6f675e" />
<rect x="1160.00" y="1559.20" width="131.00" height="46.00" fill="#b9b1a5" />
<rect x="1160.00" y="1559.20" width="131.00" height="3.00" fill="#8f877c" />
<rect x="1168.50" y="1565.00" width="31.00" height="12.20" fill="#d3ccc1" />
<rect x="1200.50" y="1565.20" width="7.00" height="12.00" fill="#1c1714" />
<rect x="1216.50" y="1570.20" width="20.00" height="16.00" fill="url(#gMeshU)" />
<rect x="1246.50" y="1566.20" width="7.00" height="12.00" fill="#1c1714" />
<rect x="1274.00" y="1566.20" width="7.00" height="12.00" fill="#1c1714" />
<rect x="1255.00" y="1565.20" width="17.00" height="12.00" fill="#d0c9be" />
<path d="M1161.0 1582.0H1288.0V1589.2H1172.0L1168.0 1595.2H1161.0z" fill="url(#gMeshU)"/>
<rect x="1182.5" y="1582.0" width="34" height="21" rx="3" fill="#2d5263"/>
<rect x="1184.00" y="1599.20" width="32.00" height="5.00" fill="#3d3a36" />
<circle cx="1220.7" cy="1590.9" r="4.2" fill="#ddd8cf" stroke="#6d6760" stroke-width="1"/>
<rect x="1228.00" y="1590.20" width="61.00" height="13.00" fill="#cbc4b8" />
<ellipse cx="1257.0" cy="1596.5" rx="10" ry="3" fill="#3b3632"/>
<rect x="1160.00" y="1603.40" width="131.00" height="2.00" fill="#6f675e" />
<rect x="1160.00" y="1605.40" width="131.00" height="46.00" fill="#b9b1a5" />
<rect x="1160.00" y="1605.40" width="131.00" height="3.00" fill="#8f877c" />
<rect x="1168.50" y="1611.20" width="31.00" height="12.20" fill="#d3ccc1" />
<rect x="1200.50" y="1611.40" width="7.00" height="12.00" fill="#1c1714" />
<rect x="1216.50" y="1616.40" width="20.00" height="16.00" fill="url(#gMeshU)" />
<rect x="1246.50" y="1612.40" width="7.00" height="12.00" fill="#1c1714" />
<rect x="1274.00" y="1612.40" width="7.00" height="12.00" fill="#1c1714" />
<rect x="1255.00" y="1611.40" width="17.00" height="12.00" fill="#d0c9be" />
<path d="M1161.0 1628.2H1288.0V1635.4H1172.0L1168.0 1641.4H1161.0z" fill="url(#gMeshU)"/>
<rect x="1182.5" y="1628.2" width="34" height="21" rx="3" fill="#2d5263"/>
<rect x="1184.00" y="1645.40" width="32.00" height="5.00" fill="#3d3a36" />
<circle cx="1220.7" cy="1637.1" r="4.2" fill="#ddd8cf" stroke="#6d6760" stroke-width="1"/>
<rect x="1228.00" y="1636.40" width="61.00" height="13.00" fill="#cbc4b8" />
<ellipse cx="1257.0" cy="1642.7" rx="10" ry="3" fill="#3b3632"/>
<rect x="1160.00" y="1649.60" width="131.00" height="2.00" fill="#6f675e" />
<rect x="1160.00" y="1651.60" width="131.00" height="46.00" fill="#b9b1a5" />
<rect x="1160.00" y="1651.60" width="131.00" height="3.00" fill="#8f877c" />
<rect x="1168.50" y="1657.40" width="31.00" height="12.20" fill="#d3ccc1" />
<rect x="1200.50" y="1657.60" width="7.00" height="12.00" fill="#1c1714" />
<rect x="1216.50" y="1662.60" width="20.00" height="16.00" fill="url(#gMeshU)" />
<rect x="1246.50" y="1658.60" width="7.00" height="12.00" fill="#1c1714" />
<rect x="1274.00" y="1658.60" width="7.00" height="12.00" fill="#1c1714" />
<rect x="1255.00" y="1657.60" width="17.00" height="12.00" fill="#d0c9be" />
<path d="M1161.0 1674.4H1288.0V1681.6H1172.0L1168.0 1687.6H1161.0z" fill="url(#gMeshU)"/>
<rect x="1182.5" y="1674.4" width="34" height="21" rx="3" fill="#2d5263"/>
<rect x="1184.00" y="1691.60" width="32.00" height="5.00" fill="#3d3a36" />
<circle cx="1220.7" cy="1683.3" r="4.2" fill="#ddd8cf" stroke="#6d6760" stroke-width="1"/>
<rect x="1228.00" y="1682.60" width="61.00" height="13.00" fill="#cbc4b8" />
<ellipse cx="1257.0" cy="1688.9" rx="10" ry="3" fill="#3b3632"/>
<rect x="1160.00" y="1695.80" width="131.00" height="2.00" fill="#6f675e" />
<rect x="1291.00" y="1512.70" width="5.50" height="184.00" fill="#918a80" />
<rect x="1002.00" y="1697.00" width="309.00" height="38.50" fill="#5b5752" />
<rect x="1025.00" y="1698.50" width="64.00" height="35.00" fill="#b7b1a8" />
<rect x="1027.00" y="1700.00" width="60.00" height="6.00" fill="#d5d0c8" />
<rect x="1027.00" y="1707.00" width="60.00" height="25.00" fill="url(#gMeshU)" />
<rect x="1030.0" y="1712" width="20" height="17" rx="2" fill="#2d4a55" opacity="0.9"/>
<rect x="1092.50" y="1698.50" width="64.00" height="35.00" fill="#b7b1a8" />
<rect x="1094.50" y="1700.00" width="60.00" height="6.00" fill="#d5d0c8" />
<rect x="1094.50" y="1707.00" width="60.00" height="25.00" fill="url(#gMeshU)" />
<rect x="1097.5" y="1712" width="20" height="17" rx="2" fill="#2d4a55" opacity="0.9"/>
<rect x="1160.00" y="1698.50" width="64.00" height="35.00" fill="#b7b1a8" />
<rect x="1162.00" y="1700.00" width="60.00" height="6.00" fill="#d5d0c8" />
<rect x="1162.00" y="1707.00" width="60.00" height="25.00" fill="url(#gMeshU)" />
<rect x="1165.0" y="1712" width="20" height="17" rx="2" fill="#2d4a55" opacity="0.9"/>
<rect x="1227.50" y="1698.50" width="64.00" height="35.00" fill="#b7b1a8" />
<rect x="1229.50" y="1700.00" width="60.00" height="6.00" fill="#d5d0c8" />
<rect x="1229.50" y="1707.00" width="60.00" height="25.00" fill="url(#gMeshU)" />
<rect x="1232.5" y="1712" width="20" height="17" rx="2" fill="#2d4a55" opacity="0.9"/>
<rect x="1002.00" y="1697.00" width="19.50" height="38.50" fill="#1a1a1a" />
<rect x="1293.50" y="1697.00" width="17.50" height="38.50" fill="#1a1a1a" />
<rect x="1006" y="1702" width="8" height="6" rx="2" fill="#cfcfcf"/><rect x="1298" y="1702" width="8" height="6" rx="2" fill="#cfcfcf"/>
<rect x="1006" y="1712" width="8" height="6" rx="2" fill="#cfcfcf"/><rect x="1298" y="1712" width="8" height="6" rx="2" fill="#cfcfcf"/>
<rect x="1006" y="1722" width="8" height="6" rx="2" fill="#cfcfcf"/><rect x="1298" y="1722" width="8" height="6" rx="2" fill="#cfcfcf"/>
<rect x="1102.20" y="1613.70" width="108.50" height="21.30" fill="#6f8393" stroke="#111" stroke-width="2.4"/>
<text x="1156.45" y="1630.40" font-size="16.8" fill="#fff" text-anchor="middle" font-family="Liberation Sans">NHCTCC01</text>
<rect x="1802.50" y="538.00" width="16.50" height="1.6" fill="#d5dde5"/>
<rect x="1802.50" y="566.57" width="16.50" height="1.6" fill="#d5dde5"/>
<rect x="1802.50" y="595.14" width="16.50" height="1.6" fill="#d5dde5"/>
<rect x="1802.50" y="623.71" width="16.50" height="1.6" fill="#d5dde5"/>
<rect x="1802.50" y="652.29" width="16.50" height="1.6" fill="#d5dde5"/>
<rect x="1802.50" y="680.86" width="16.50" height="1.6" fill="#d5dde5"/>
<rect x="1802.50" y="709.43" width="16.50" height="1.6" fill="#d5dde5"/>
<rect x="1802.50" y="738.00" width="16.50" height="1.6" fill="#d5dde5"/>
<rect x="1802.50" y="766.57" width="16.50" height="1.6" fill="#d5dde5"/>
<rect x="1802.50" y="795.14" width="16.50" height="1.6" fill="#d5dde5"/>
<rect x="1802.50" y="823.71" width="16.50" height="1.6" fill="#d5dde5"/>
<rect x="1802.50" y="852.29" width="16.50" height="1.6" fill="#d5dde5"/>
<rect x="1802.50" y="880.86" width="16.50" height="1.6" fill="#d5dde5"/>
<rect x="1802.50" y="909.43" width="16.50" height="1.6" fill="#d5dde5"/>
<rect x="1802.50" y="938.00" width="16.50" height="1.6" fill="#d5dde5"/>
<rect x="1802.50" y="966.57" width="16.50" height="1.6" fill="#d5dde5"/>
<rect x="1802.50" y="995.14" width="16.50" height="1.6" fill="#d5dde5"/>
<rect x="1802.50" y="1023.71" width="16.50" height="1.6" fill="#d5dde5"/>
<rect x="1802.50" y="1052.29" width="16.50" height="1.6" fill="#d5dde5"/>
<rect x="1802.50" y="1080.86" width="16.50" height="1.6" fill="#d5dde5"/>
<rect x="1802.50" y="1109.43" width="16.50" height="1.6" fill="#d5dde5"/>
<rect x="1802.50" y="1138.00" width="16.50" height="1.6" fill="#d5dde5"/>
<rect x="1802.50" y="1166.57" width="16.50" height="1.6" fill="#d5dde5"/>
<rect x="1802.50" y="1195.14" width="16.50" height="1.6" fill="#d5dde5"/>
<rect x="1802.50" y="1223.71" width="16.50" height="1.6" fill="#d5dde5"/>
<rect x="1802.50" y="1252.29" width="16.50" height="1.6" fill="#d5dde5"/>
<rect x="1802.50" y="1280.86" width="16.50" height="1.6" fill="#d5dde5"/>
<rect x="1802.50" y="1309.43" width="16.50" height="1.6" fill="#d5dde5"/>
<rect x="1802.50" y="1338.00" width="16.50" height="1.6" fill="#d5dde5"/>
<rect x="1802.50" y="1366.57" width="16.50" height="1.6" fill="#d5dde5"/>
<rect x="1802.50" y="1395.14" width="16.50" height="1.6" fill="#d5dde5"/>
<rect x="1802.50" y="1423.71" width="16.50" height="1.6" fill="#d5dde5"/>
<rect x="1802.50" y="1452.29" width="16.50" height="1.6" fill="#d5dde5"/>
<rect x="1802.50" y="1480.86" width="16.50" height="1.6" fill="#d5dde5"/>
<rect x="1802.50" y="1509.43" width="16.50" height="1.6" fill="#d5dde5"/>
<rect x="1802.50" y="1538.00" width="16.50" height="1.6" fill="#d5dde5"/>
<rect x="1802.50" y="1566.57" width="16.50" height="1.6" fill="#d5dde5"/>
<rect x="1802.50" y="1595.14" width="16.50" height="1.6" fill="#d5dde5"/>
<rect x="1802.50" y="1623.71" width="16.50" height="1.6" fill="#d5dde5"/>
<rect x="1802.50" y="1652.29" width="16.50" height="1.6" fill="#d5dde5"/>
<rect x="1802.50" y="1680.86" width="16.50" height="1.6" fill="#d5dde5"/>
<rect x="1802.50" y="1709.43" width="16.50" height="1.6" fill="#d5dde5"/>
<rect x="1802.50" y="1738.00" width="16.50" height="1.6" fill="#d5dde5"/>
<text x="1831.00" y="1730.61" font-size="17" fill="#5f7686" stroke="#5f7686" stroke-width="0.35" text-anchor="middle" font-family="Liberation Sans">0</text>
<text x="1831.00" y="1702.04" font-size="17" fill="#5f7686" stroke="#5f7686" stroke-width="0.35" text-anchor="middle" font-family="Liberation Sans">1</text>
<text x="1831.00" y="1673.47" font-size="17" fill="#5f7686" stroke="#5f7686" stroke-width="0.35" text-anchor="middle" font-family="Liberation Sans">2</text>
<text x="1831.00" y="1644.90" font-size="17" fill="#5f7686" stroke="#5f7686" stroke-width="0.35" text-anchor="middle" font-family="Liberation Sans">3</text>
<text x="1831.00" y="1616.33" font-size="17" fill="#5f7686" stroke="#5f7686" stroke-width="0.35" text-anchor="middle" font-family="Liberation Sans">4</text>
<text x="1831.00" y="1587.76" font-size="17" fill="#5f7686" stroke="#5f7686" stroke-width="0.35" text-anchor="middle" font-family="Liberation Sans">5</text>
<text x="1831.00" y="1559.19" font-size="17" fill="#5f7686" stroke="#5f7686" stroke-width="0.35" text-anchor="middle" font-family="Liberation Sans">6</text>
<text x="1831.00" y="1530.61" font-size="17" fill="#5f7686" stroke="#5f7686" stroke-width="0.35" text-anchor="middle" font-family="Liberation Sans">7</text>
<text x="1831.00" y="1502.04" font-size="17" fill="#5f7686" stroke="#5f7686" stroke-width="0.35" text-anchor="middle" font-family="Liberation Sans">8</text>
<text x="1831.00" y="1473.47" font-size="17" fill="#5f7686" stroke="#5f7686" stroke-width="0.35" text-anchor="middle" font-family="Liberation Sans">9</text>
<text x="1831.00" y="1444.90" font-size="17" fill="#5f7686" stroke="#5f7686" stroke-width="0.35" text-anchor="middle" font-family="Liberation Sans">10</text>
<text x="1831.00" y="1416.33" font-size="17" fill="#5f7686" stroke="#5f7686" stroke-width="0.35" text-anchor="middle" font-family="Liberation Sans">11</text>
<text x="1831.00" y="1387.76" font-size="17" fill="#5f7686" stroke="#5f7686" stroke-width="0.35" text-anchor="middle" font-family="Liberation Sans">12</text>
<text x="1831.00" y="1359.19" font-size="17" fill="#5f7686" stroke="#5f7686" stroke-width="0.35" text-anchor="middle" font-family="Liberation Sans">13</text>
<text x="1831.00" y="1330.61" font-size="17" fill="#5f7686" stroke="#5f7686" stroke-width="0.35" text-anchor="middle" font-family="Liberation Sans">14</text>
<text x="1831.00" y="1302.04" font-size="17" fill="#5f7686" stroke="#5f7686" stroke-width="0.35" text-anchor="middle" font-family="Liberation Sans">15</text>
<text x="1831.00" y="1273.47" font-size="17" fill="#5f7686" stroke="#5f7686" stroke-width="0.35" text-anchor="middle" font-family="Liberation Sans">16</text>
<text x="1831.00" y="1244.90" font-size="17" fill="#5f7686" stroke="#5f7686" stroke-width="0.35" text-anchor="middle" font-family="Liberation Sans">17</text>
<text x="1831.00" y="1216.33" font-size="17" fill="#5f7686" stroke="#5f7686" stroke-width="0.35" text-anchor="middle" font-family="Liberation Sans">18</text>
<text x="1831.00" y="1187.76" font-size="17" fill="#5f7686" stroke="#5f7686" stroke-width="0.35" text-anchor="middle" font-family="Liberation Sans">19</text>
<text x="1831.00" y="1159.19" font-size="17" fill="#5f7686" stroke="#5f7686" stroke-width="0.35" text-anchor="middle" font-family="Liberation Sans">20</text>
<text x="1831.00" y="1130.61" font-size="17" fill="#5f7686" stroke="#5f7686" stroke-width="0.35" text-anchor="middle" font-family="Liberation Sans">21</text>
<text x="1831.00" y="1102.04" font-size="17" fill="#5f7686" stroke="#5f7686" stroke-width="0.35" text-anchor="middle" font-family="Liberation Sans">22</text>
<text x="1831.00" y="1073.47" font-size="17" fill="#5f7686" stroke="#5f7686" stroke-width="0.35" text-anchor="middle" font-family="Liberation Sans">23</text>
<text x="1831.00" y="1044.90" font-size="17" fill="#5f7686" stroke="#5f7686" stroke-width="0.35" text-anchor="middle" font-family="Liberation Sans">24</text>
<text x="1831.00" y="1016.33" font-size="17" fill="#5f7686" stroke="#5f7686" stroke-width="0.35" text-anchor="middle" font-family="Liberation Sans">25</text>
<text x="1831.00" y="987.76" font-size="17" fill="#5f7686" stroke="#5f7686" stroke-width="0.35" text-anchor="middle" font-family="Liberation Sans">26</text>
<text x="1831.00" y="959.19" font-size="17" fill="#5f7686" stroke="#5f7686" stroke-width="0.35" text-anchor="middle" font-family="Liberation Sans">27</text>
<text x="1831.00" y="930.61" font-size="17" fill="#5f7686" stroke="#5f7686" stroke-width="0.35" text-anchor="middle" font-family="Liberation Sans">28</text>
<text x="1831.00" y="902.04" font-size="17" fill="#5f7686" stroke="#5f7686" stroke-width="0.35" text-anchor="middle" font-family="Liberation Sans">29</text>
<text x="1831.00" y="873.47" font-size="17" fill="#5f7686" stroke="#5f7686" stroke-width="0.35" text-anchor="middle" font-family="Liberation Sans">30</text>
<text x="1831.00" y="844.90" font-size="17" fill="#5f7686" stroke="#5f7686" stroke-width="0.35" text-anchor="middle" font-family="Liberation Sans">31</text>
<text x="1831.00" y="816.33" font-size="17" fill="#5f7686" stroke="#5f7686" stroke-width="0.35" text-anchor="middle" font-family="Liberation Sans">32</text>
<text x="1831.00" y="787.76" font-size="17" fill="#5f7686" stroke="#5f7686" stroke-width="0.35" text-anchor="middle" font-family="Liberation Sans">33</text>
<text x="1831.00" y="759.19" font-size="17" fill="#5f7686" stroke="#5f7686" stroke-width="0.35" text-anchor="middle" font-family="Liberation Sans">34</text>
<text x="1831.00" y="730.61" font-size="17" fill="#5f7686" stroke="#5f7686" stroke-width="0.35" text-anchor="middle" font-family="Liberation Sans">35</text>
<text x="1831.00" y="702.04" font-size="17" fill="#5f7686" stroke="#5f7686" stroke-width="0.35" text-anchor="middle" font-family="Liberation Sans">36</text>
<text x="1831.00" y="673.47" font-size="17" fill="#5f7686" stroke="#5f7686" stroke-width="0.35" text-anchor="middle" font-family="Liberation Sans">37</text>
<text x="1831.00" y="644.90" font-size="17" fill="#5f7686" stroke="#5f7686" stroke-width="0.35" text-anchor="middle" font-family="Liberation Sans">38</text>
<text x="1831.00" y="616.33" font-size="17" fill="#5f7686" stroke="#5f7686" stroke-width="0.35" text-anchor="middle" font-family="Liberation Sans">39</text>
<text x="1831.00" y="587.76" font-size="17" fill="#5f7686" stroke="#5f7686" stroke-width="0.35" text-anchor="middle" font-family="Liberation Sans">40</text>
<text x="1831.00" y="559.19" font-size="17" fill="#5f7686" stroke="#5f7686" stroke-width="0.35" text-anchor="middle" font-family="Liberation Sans">41</text>
<rect x="1487.50" y="538.80" width="1.20" height="1200.00" fill="#e3e8ee" />
<rect x="1802.00" y="538.80" width="1.20" height="1200.00" fill="#e3e8ee" />
<rect x="1489.00" y="538.80" width="313.00" height="57.14" fill="#3b3b3b" />
<rect x="1489.00" y="538.80" width="313.00" height="2.00" fill="#1a1a1a" />
<rect x="1513" y="544.8" width="90" height="18" fill="none" stroke="#555" stroke-width="1"/>
<path d="M1516.0 559.8v-8h3v-2h4v2h3v8z" fill="#262626" stroke="#6a6a6a" stroke-width="0.9"/>
<path d="M1526.8 559.8v-8h3v-2h4v2h3v8z" fill="#262626" stroke="#6a6a6a" stroke-width="0.9"/>
<path d="M1537.6 559.8v-8h3v-2h4v2h3v8z" fill="#262626" stroke="#6a6a6a" stroke-width="0.9"/>
<path d="M1548.4 559.8v-8h3v-2h4v2h3v8z" fill="#262626" stroke="#6a6a6a" stroke-width="0.9"/>
<path d="M1559.2 559.8v-8h3v-2h4v2h3v8z" fill="#262626" stroke="#6a6a6a" stroke-width="0.9"/>
<path d="M1570.0 559.8v-8h3v-2h4v2h3v8z" fill="#262626" stroke="#6a6a6a" stroke-width="0.9"/>
<path d="M1580.8 559.8v-8h3v-2h4v2h3v8z" fill="#262626" stroke="#6a6a6a" stroke-width="0.9"/>
<path d="M1591.6 559.8v-8h3v-2h4v2h3v8z" fill="#262626" stroke="#6a6a6a" stroke-width="0.9"/>
<rect x="1513" y="569.8" width="90" height="18" fill="none" stroke="#555" stroke-width="1"/>
<path d="M1516.0 584.8v-8h3v-2h4v2h3v8z" fill="#262626" stroke="#6a6a6a" stroke-width="0.9"/>
<path d="M1526.8 584.8v-8h3v-2h4v2h3v8z" fill="#262626" stroke="#6a6a6a" stroke-width="0.9"/>
<path d="M1537.6 584.8v-8h3v-2h4v2h3v8z" fill="#262626" stroke="#6a6a6a" stroke-width="0.9"/>
<path d="M1548.4 584.8v-8h3v-2h4v2h3v8z" fill="#262626" stroke="#6a6a6a" stroke-width="0.9"/>
<path d="M1559.2 584.8v-8h3v-2h4v2h3v8z" fill="#262626" stroke="#6a6a6a" stroke-width="0.9"/>
<path d="M1570.0 584.8v-8h3v-2h4v2h3v8z" fill="#262626" stroke="#6a6a6a" stroke-width="0.9"/>
<path d="M1580.8 584.8v-8h3v-2h4v2h3v8z" fill="#262626" stroke="#6a6a6a" stroke-width="0.9"/>
<path d="M1591.6 584.8v-8h3v-2h4v2h3v8z" fill="#262626" stroke="#6a6a6a" stroke-width="0.9"/>
<rect x="1607" y="544.8" width="90" height="18" fill="none" stroke="#555" stroke-width="1"/>
<path d="M1610.0 559.8v-8h3v-2h4v2h3v8z" fill="#262626" stroke="#6a6a6a" stroke-width="0.9"/>
<path d="M1620.8 559.8v-8h3v-2h4v2h3v8z" fill="#262626" stroke="#6a6a6a" stroke-width="0.9"/>
<path d="M1631.6 559.8v-8h3v-2h4v2h3v8z" fill="#262626" stroke="#6a6a6a" stroke-width="0.9"/>
<path d="M1642.4 559.8v-8h3v-2h4v2h3v8z" fill="#262626" stroke="#6a6a6a" stroke-width="0.9"/>
<path d="M1653.2 559.8v-8h3v-2h4v2h3v8z" fill="#262626" stroke="#6a6a6a" stroke-width="0.9"/>
<path d="M1664.0 559.8v-8h3v-2h4v2h3v8z" fill="#262626" stroke="#6a6a6a" stroke-width="0.9"/>
<path d="M1674.8 559.8v-8h3v-2h4v2h3v8z" fill="#262626" stroke="#6a6a6a" stroke-width="0.9"/>
<path d="M1685.6 559.8v-8h3v-2h4v2h3v8z" fill="#262626" stroke="#6a6a6a" stroke-width="0.9"/>
<rect x="1607" y="569.8" width="90" height="18" fill="none" stroke="#555" stroke-width="1"/>
<path d="M1610.0 584.8v-8h3v-2h4v2h3v8z" fill="#262626" stroke="#6a6a6a" stroke-width="0.9"/>
<path d="M1620.8 584.8v-8h3v-2h4v2h3v8z" fill="#262626" stroke="#6a6a6a" stroke-width="0.9"/>
<path d="M1631.6 584.8v-8h3v-2h4v2h3v8z" fill="#262626" stroke="#6a6a6a" stroke-width="0.9"/>
<path d="M1642.4 584.8v-8h3v-2h4v2h3v8z" fill="#262626" stroke="#6a6a6a" stroke-width="0.9"/>
<path d="M1653.2 584.8v-8h3v-2h4v2h3v8z" fill="#262626" stroke="#6a6a6a" stroke-width="0.9"/>
<path d="M1664.0 584.8v-8h3v-2h4v2h3v8z" fill="#262626" stroke="#6a6a6a" stroke-width="0.9"/>
<path d="M1674.8 584.8v-8h3v-2h4v2h3v8z" fill="#262626" stroke="#6a6a6a" stroke-width="0.9"/>
<path d="M1685.6 584.8v-8h3v-2h4v2h3v8z" fill="#262626" stroke="#6a6a6a" stroke-width="0.9"/>
<rect x="1701" y="544.8" width="90" height="18" fill="none" stroke="#555" stroke-width="1"/>
<path d="M1704.0 559.8v-8h3v-2h4v2h3v8z" fill="#262626" stroke="#6a6a6a" stroke-width="0.9"/>
<path d="M1714.8 559.8v-8h3v-2h4v2h3v8z" fill="#262626" stroke="#6a6a6a" stroke-width="0.9"/>
<path d="M1725.6 559.8v-8h3v-2h4v2h3v8z" fill="#262626" stroke="#6a6a6a" stroke-width="0.9"/>
<path d="M1736.4 559.8v-8h3v-2h4v2h3v8z" fill="#262626" stroke="#6a6a6a" stroke-width="0.9"/>
<path d="M1747.2 559.8v-8h3v-2h4v2h3v8z" fill="#262626" stroke="#6a6a6a" stroke-width="0.9"/>
<path d="M1758.0 559.8v-8h3v-2h4v2h3v8z" fill="#262626" stroke="#6a6a6a" stroke-width="0.9"/>
<path d="M1768.8 559.8v-8h3v-2h4v2h3v8z" fill="#262626" stroke="#6a6a6a" stroke-width="0.9"/>
<path d="M1779.6 559.8v-8h3v-2h4v2h3v8z" fill="#262626" stroke="#6a6a6a" stroke-width="0.9"/>
<rect x="1701" y="569.8" width="90" height="18" fill="none" stroke="#555" stroke-width="1"/>
<path d="M1704.0 584.8v-8h3v-2h4v2h3v8z" fill="#262626" stroke="#6a6a6a" stroke-width="0.9"/>
<path d="M1714.8 584.8v-8h3v-2h4v2h3v8z" fill="#262626" stroke="#6a6a6a" stroke-width="0.9"/>
<path d="M1725.6 584.8v-8h3v-2h4v2h3v8z" fill="#262626" stroke="#6a6a6a" stroke-width="0.9"/>
<path d="M1736.4 584.8v-8h3v-2h4v2h3v8z" fill="#262626" stroke="#6a6a6a" stroke-width="0.9"/>
<path d="M1747.2 584.8v-8h3v-2h4v2h3v8z" fill="#262626" stroke="#6a6a6a" stroke-width="0.9"/>
<path d="M1758.0 584.8v-8h3v-2h4v2h3v8z" fill="#262626" stroke="#6a6a6a" stroke-width="0.9"/>
<path d="M1768.8 584.8v-8h3v-2h4v2h3v8z" fill="#262626" stroke="#6a6a6a" stroke-width="0.9"/>
<path d="M1779.6 584.8v-8h3v-2h4v2h3v8z" fill="#262626" stroke="#6a6a6a" stroke-width="0.9"/>
<ellipse cx="1495" cy="545" rx="4" ry="2.5" fill="#eee"/>
<ellipse cx="1795" cy="545" rx="4" ry="2.5" fill="#eee"/>
<ellipse cx="1495" cy="590" rx="4" ry="2.5" fill="#eee"/>
<ellipse cx="1795" cy="590" rx="4" ry="2.5" fill="#eee"/>
<rect x="1514.00" y="591.94" width="3.00" height="4.00" fill="#cfcfcf" />
<rect x="1524.20" y="591.94" width="3.00" height="4.00" fill="#cfcfcf" />
<rect x="1534.40" y="591.94" width="3.00" height="4.00" fill="#cfcfcf" />
<rect x="1544.60" y="591.94" width="3.00" height="4.00" fill="#cfcfcf" />
<rect x="1554.80" y="591.94" width="3.00" height="4.00" fill="#cfcfcf" />
<rect x="1565.00" y="591.94" width="3.00" height="4.00" fill="#cfcfcf" />
<rect x="1575.20" y="591.94" width="3.00" height="4.00" fill="#cfcfcf" />
<rect x="1585.40" y="591.94" width="3.00" height="4.00" fill="#cfcfcf" />
<rect x="1595.60" y="591.94" width="3.00" height="4.00" fill="#cfcfcf" />
<rect x="1605.80" y="591.94" width="3.00" height="4.00" fill="#cfcfcf" />
<rect x="1616.00" y="591.94" width="3.00" height="4.00" fill="#cfcfcf" />
<rect x="1626.20" y="591.94" width="3.00" height="4.00" fill="#cfcfcf" />
<rect x="1636.40" y="591.94" width="3.00" height="4.00" fill="#cfcfcf" />
<rect x="1646.60" y="591.94" width="3.00" height="4.00" fill="#cfcfcf" />
<rect x="1656.80" y="591.94" width="3.00" height="4.00" fill="#cfcfcf" />
<rect x="1667.00" y="591.94" width="3.00" height="4.00" fill="#cfcfcf" />
<rect x="1677.20" y="591.94" width="3.00" height="4.00" fill="#cfcfcf" />
<rect x="1687.40" y="591.94" width="3.00" height="4.00" fill="#cfcfcf" />
<rect x="1697.60" y="591.94" width="3.00" height="4.00" fill="#cfcfcf" />
<rect x="1707.80" y="591.94" width="3.00" height="4.00" fill="#cfcfcf" />
<rect x="1718.00" y="591.94" width="3.00" height="4.00" fill="#cfcfcf" />
<rect x="1728.20" y="591.94" width="3.00" height="4.00" fill="#cfcfcf" />
<rect x="1738.40" y="591.94" width="3.00" height="4.00" fill="#cfcfcf" />
<rect x="1748.60" y="591.94" width="3.00" height="4.00" fill="#cfcfcf" />
<rect x="1758.80" y="591.94" width="3.00" height="4.00" fill="#cfcfcf" />
<rect x="1769.00" y="591.94" width="3.00" height="4.00" fill="#cfcfcf" />
<rect x="1779.20" y="591.94" width="3.00" height="4.00" fill="#cfcfcf" />
<rect x="1789.40" y="591.94" width="3.00" height="4.00" fill="#cfcfcf" />
<path d="M1490 566h16M1786 566h14" stroke="#ccc" stroke-width="2"/>
<rect x="1539.90" y="557.00" width="210.90" height="21.70" fill="#6f8393" stroke="#111" stroke-width="2.4"/>
<text x="1645.35" y="573.90" font-size="16.8" fill="#fff" text-anchor="middle" font-family="Liberation Sans">DC1R1PP1 - Patch Panel</text>
<rect x="1489.00" y="595.94" width="313.00" height="28.57" fill="#9e9a94" />
<rect x="1490.00" y="596.44" width="95.00" height="13.29" fill="url(#gMeshL)" />
<ellipse cx="1539.00" cy="602.37" rx="13" ry="3.14" fill="#e0e0e0" opacity="0.8"/>
<rect x="1491.00" y="606.23" width="93.00" height="3.00" fill="#1c1c1c" />
<rect x="1579.00" y="604.23" width="7.00" height="5.00" fill="#2aa3b5" />
<rect x="1490.00" y="610.73" width="95.00" height="13.29" fill="url(#gMeshL)" />
<ellipse cx="1539.00" cy="616.66" rx="13" ry="3.14" fill="#e0e0e0" opacity="0.8"/>
<rect x="1491.00" y="620.51" width="93.00" height="3.00" fill="#1c1c1c" />
<rect x="1579.00" y="618.51" width="7.00" height="5.00" fill="#2aa3b5" />
<rect x="1585.00" y="595.94" width="5.00" height="28.57" fill="#bcbcbc" />
<rect x="1590.00" y="595.94" width="121.00" height="28.57" fill="#8a837a" />
<rect x="1597.00" y="598.94" width="22.00" height="22.57" fill="#3a332d" />
<rect x="1600.00" y="605.94" width="16.00" height="2.50" fill="#a89e93" />
<rect x="1600.00" y="613.09" width="16.00" height="2.50" fill="#a89e93" />
<rect x="1604.20" y="617.37" width="7.20" height="3.00" fill="#d6d0c8" />
<rect x="1611.00" y="597.94" width="7.00" height="5.00" fill="#2fb6c4" />
<rect x="1623.00" y="598.94" width="24.00" height="22.57" fill="#3a332d" />
<rect x="1626.00" y="605.94" width="18.00" height="2.50" fill="#a89e93" />
<rect x="1626.00" y="613.09" width="18.00" height="2.50" fill="#a89e93" />
<rect x="1630.80" y="617.37" width="7.80" height="3.00" fill="#d6d0c8" />
<rect x="1639.00" y="597.94" width="7.00" height="5.00" fill="#2fb6c4" />
<rect x="1651.00" y="598.94" width="20.00" height="22.57" fill="#3a332d" />
<rect x="1654.00" y="605.94" width="14.00" height="2.50" fill="#a89e93" />
<rect x="1654.00" y="613.09" width="14.00" height="2.50" fill="#a89e93" />
<rect x="1657.60" y="617.37" width="6.60" height="3.00" fill="#d6d0c8" />
<rect x="1663.00" y="597.94" width="7.00" height="5.00" fill="#2fb6c4" />
<rect x="1675.00" y="598.94" width="24.00" height="22.57" fill="#3a332d" />
<rect x="1678.00" y="605.94" width="18.00" height="2.50" fill="#a89e93" />
<rect x="1678.00" y="613.09" width="18.00" height="2.50" fill="#a89e93" />
<rect x="1682.80" y="617.37" width="7.80" height="3.00" fill="#d6d0c8" />
<rect x="1691.00" y="597.94" width="7.00" height="5.00" fill="#2fb6c4" />
<rect x="1703.00" y="598.94" width="6.00" height="22.57" fill="#3a332d" />
<rect x="1706.00" y="605.94" width="0.00" height="2.50" fill="#a89e93" />
<rect x="1706.00" y="613.09" width="0.00" height="2.50" fill="#a89e93" />
<rect x="1705.40" y="617.37" width="2.40" height="3.00" fill="#d6d0c8" />
<rect x="1596.00" y="621.51" width="114.00" height="3.00" fill="#b5b0aa" />
<rect x="1711.00" y="595.94" width="8.00" height="28.57" fill="#a7a7a7" />
<rect x="1719.00" y="596.94" width="82.00" height="12.29" fill="url(#gMeshL)" />
<rect x="1721.00" y="603.80" width="72.00" height="2.50" fill="#151515" />
<rect x="1779.00" y="597.94" width="20.00" height="5.71" fill="#111" />
<rect x="1794.00" y="600.23" width="8.00" height="5.00" fill="#2fb6c4" />
<rect x="1719.00" y="611.23" width="82.00" height="12.29" fill="url(#gMeshL)" />
<rect x="1721.00" y="618.09" width="72.00" height="2.50" fill="#151515" />
<rect x="1779.00" y="612.23" width="20.00" height="5.71" fill="#111" />
<rect x="1794.00" y="614.51" width="8.00" height="5.00" fill="#2fb6c4" />
<rect x="1489.00" y="623.01" width="313.00" height="1.50" fill="#77736e" />
<rect x="1489.00" y="652.80" width="312.50" height="286.20" fill="#2f2f2f" />
<rect x="1489.00" y="652.80" width="312.50" height="4.00" fill="#181818" />
<rect x="1489.00" y="652.80" width="10.00" height="266.00" fill="#3a3a3a" />
<rect x="1490.00" y="669.50" width="8.00" height="21.50" fill="#bdbdbd" />
<rect x="1492.00" y="704.00" width="4.00" height="117.00" fill="#c9c9c9" />
<rect x="1490.00" y="835.00" width="8.00" height="12.00" fill="#bdbdbd" />
<rect x="1499.20" y="658" width="58.5" height="59" fill="#474747"/>
<rect x="1499.20" y="658" width="58.5" height="59" fill="url(#fanbay)"/>
<circle cx="1528.00" cy="686.80" r="25.8" fill="#050505"/>
<circle cx="1528.00" cy="686.80" r="23.2" fill="none" stroke="#bdbdbd" stroke-width="1.8"/>
<path d="M1506.00 686.80H1550.00" stroke="#bdbdbd" stroke-width="1.6"/>
<circle cx="1531.00" cy="686.80" r="9" fill="none" stroke="#9a9a9a" stroke-width="1.5"/>
<path d="M1530.00 677.80c8 -2 13 3 13 9s-5 11 -13 9z" fill="#b9aa98"/>
<path d="M1522.00 664.80L1529.50 664.80L1527.50 708.80L1520.00 708.80L1519.00 686.80z" fill="#d9525e"/>
<path d="M1533.00 683.80l2 14" stroke="#e5d12a" stroke-width="2"/>
<circle cx="1552.00" cy="711.80" r="3" fill="#e8e8e8" stroke="#222" stroke-width="1.5"/>
<rect x="1558.90" y="658" width="58.5" height="59" fill="#474747"/>
<rect x="1558.90" y="658" width="58.5" height="59" fill="url(#fanbay)"/>
<circle cx="1587.63" cy="686.80" r="25.8" fill="#050505"/>
<circle cx="1587.63" cy="686.80" r="23.2" fill="none" stroke="#bdbdbd" stroke-width="1.8"/>
<path d="M1565.63 686.80H1609.63" stroke="#bdbdbd" stroke-width="1.6"/>
<circle cx="1590.63" cy="686.80" r="9" fill="none" stroke="#9a9a9a" stroke-width="1.5"/>
<path d="M1589.63 677.80c8 -2 13 3 13 9s-5 11 -13 9z" fill="#b9aa98"/>
<path d="M1581.63 664.80L1589.13 664.80L1587.13 708.80L1579.63 708.80L1578.63 686.80z" fill="#d9525e"/>
<path d="M1592.63 683.80l2 14" stroke="#e5d12a" stroke-width="2"/>
<circle cx="1611.63" cy="711.80" r="3" fill="#e8e8e8" stroke="#222" stroke-width="1.5"/>
<rect x="1618.60" y="658" width="58.5" height="59" fill="#474747"/>
<rect x="1618.60" y="658" width="58.5" height="59" fill="url(#fanbay)"/>
<circle cx="1647.26" cy="686.80" r="25.8" fill="#050505"/>
<circle cx="1647.26" cy="686.80" r="23.2" fill="none" stroke="#bdbdbd" stroke-width="1.8"/>
<path d="M1625.26 686.80H1669.26" stroke="#bdbdbd" stroke-width="1.6"/>
<circle cx="1650.26" cy="686.80" r="9" fill="none" stroke="#9a9a9a" stroke-width="1.5"/>
<path d="M1649.26 677.80c8 -2 13 3 13 9s-5 11 -13 9z" fill="#b9aa98"/>
<path d="M1641.26 664.80L1648.76 664.80L1646.76 708.80L1639.26 708.80L1638.26 686.80z" fill="#d9525e"/>
<path d="M1652.26 683.80l2 14" stroke="#e5d12a" stroke-width="2"/>
<circle cx="1671.26" cy="711.80" r="3" fill="#e8e8e8" stroke="#222" stroke-width="1.5"/>
<rect x="1678.30" y="658" width="58.5" height="59" fill="#474747"/>
<rect x="1678.30" y="658" width="58.5" height="59" fill="url(#fanbay)"/>
<circle cx="1706.89" cy="686.80" r="25.8" fill="#050505"/>
<circle cx="1706.89" cy="686.80" r="23.2" fill="none" stroke="#bdbdbd" stroke-width="1.8"/>
<path d="M1684.89 686.80H1728.89" stroke="#bdbdbd" stroke-width="1.6"/>
<circle cx="1709.89" cy="686.80" r="9" fill="none" stroke="#9a9a9a" stroke-width="1.5"/>
<path d="M1708.89 677.80c8 -2 13 3 13 9s-5 11 -13 9z" fill="#b9aa98"/>
<path d="M1700.89 664.80L1708.39 664.80L1706.39 708.80L1698.89 708.80L1697.89 686.80z" fill="#d9525e"/>
<path d="M1711.89 683.80l2 14" stroke="#e5d12a" stroke-width="2"/>
<circle cx="1730.89" cy="711.80" r="3" fill="#e8e8e8" stroke="#222" stroke-width="1.5"/>
<rect x="1738.00" y="658" width="58.5" height="59" fill="#474747"/>
<rect x="1738.00" y="658" width="58.5" height="59" fill="url(#fanbay)"/>
<circle cx="1766.52" cy="686.80" r="25.8" fill="#050505"/>
<circle cx="1766.52" cy="686.80" r="23.2" fill="none" stroke="#bdbdbd" stroke-width="1.8"/>
<path d="M1744.52 686.80H1788.52" stroke="#bdbdbd" stroke-width="1.6"/>
<circle cx="1769.52" cy="686.80" r="9" fill="none" stroke="#9a9a9a" stroke-width="1.5"/>
<path d="M1768.52 677.80c8 -2 13 3 13 9s-5 11 -13 9z" fill="#b9aa98"/>
<path d="M1760.52 664.80L1768.02 664.80L1766.02 708.80L1758.52 708.80L1757.52 686.80z" fill="#d9525e"/>
<path d="M1771.52 683.80l2 14" stroke="#e5d12a" stroke-width="2"/>
<circle cx="1790.52" cy="711.80" r="3" fill="#e8e8e8" stroke="#222" stroke-width="1.5"/>
<rect x="1499.20" y="835.9" width="58.5" height="59" fill="#474747"/>
<rect x="1499.20" y="835.9" width="58.5" height="59" fill="url(#fanbay)"/>
<circle cx="1528.00" cy="864.00" r="25.8" fill="#050505"/>
<circle cx="1528.00" cy="864.00" r="23.2" fill="none" stroke="#bdbdbd" stroke-width="1.8"/>
<path d="M1506.00 864.00H1550.00" stroke="#bdbdbd" stroke-width="1.6"/>
<circle cx="1531.00" cy="864.00" r="9" fill="none" stroke="#9a9a9a" stroke-width="1.5"/>
<path d="M1530.00 855.00c8 -2 13 3 13 9s-5 11 -13 9z" fill="#b9aa98"/>
<path d="M1522.00 842.00L1529.50 842.00L1527.50 886.00L1520.00 886.00L1519.00 864.00z" fill="#d9525e"/>
<path d="M1533.00 861.00l2 14" stroke="#e5d12a" stroke-width="2"/>
<circle cx="1552.00" cy="889.00" r="3" fill="#e8e8e8" stroke="#222" stroke-width="1.5"/>
<rect x="1558.90" y="835.9" width="58.5" height="59" fill="#474747"/>
<rect x="1558.90" y="835.9" width="58.5" height="59" fill="url(#fanbay)"/>
<circle cx="1587.63" cy="864.00" r="25.8" fill="#050505"/>
<circle cx="1587.63" cy="864.00" r="23.2" fill="none" stroke="#bdbdbd" stroke-width="1.8"/>
<path d="M1565.63 864.00H1609.63" stroke="#bdbdbd" stroke-width="1.6"/>
<circle cx="1590.63" cy="864.00" r="9" fill="none" stroke="#9a9a9a" stroke-width="1.5"/>
<path d="M1589.63 855.00c8 -2 13 3 13 9s-5 11 -13 9z" fill="#b9aa98"/>
<path d="M1581.63 842.00L1589.13 842.00L1587.13 886.00L1579.63 886.00L1578.63 864.00z" fill="#d9525e"/>
<path d="M1592.63 861.00l2 14" stroke="#e5d12a" stroke-width="2"/>
<circle cx="1611.63" cy="889.00" r="3" fill="#e8e8e8" stroke="#222" stroke-width="1.5"/>
<rect x="1618.60" y="835.9" width="58.5" height="59" fill="#474747"/>
<rect x="1618.60" y="835.9" width="58.5" height="59" fill="url(#fanbay)"/>
<circle cx="1647.26" cy="864.00" r="25.8" fill="#050505"/>
<circle cx="1647.26" cy="864.00" r="23.2" fill="none" stroke="#bdbdbd" stroke-width="1.8"/>
<path d="M1625.26 864.00H1669.26" stroke="#bdbdbd" stroke-width="1.6"/>
<circle cx="1650.26" cy="864.00" r="9" fill="none" stroke="#9a9a9a" stroke-width="1.5"/>
<path d="M1649.26 855.00c8 -2 13 3 13 9s-5 11 -13 9z" fill="#b9aa98"/>
<path d="M1641.26 842.00L1648.76 842.00L1646.76 886.00L1639.26 886.00L1638.26 864.00z" fill="#d9525e"/>
<path d="M1652.26 861.00l2 14" stroke="#e5d12a" stroke-width="2"/>
<circle cx="1671.26" cy="889.00" r="3" fill="#e8e8e8" stroke="#222" stroke-width="1.5"/>
<rect x="1678.30" y="835.9" width="58.5" height="59" fill="#474747"/>
<rect x="1678.30" y="835.9" width="58.5" height="59" fill="url(#fanbay)"/>
<circle cx="1706.89" cy="864.00" r="25.8" fill="#050505"/>
<circle cx="1706.89" cy="864.00" r="23.2" fill="none" stroke="#bdbdbd" stroke-width="1.8"/>
<path d="M1684.89 864.00H1728.89" stroke="#bdbdbd" stroke-width="1.6"/>
<circle cx="1709.89" cy="864.00" r="9" fill="none" stroke="#9a9a9a" stroke-width="1.5"/>
<path d="M1708.89 855.00c8 -2 13 3 13 9s-5 11 -13 9z" fill="#b9aa98"/>
<path d="M1700.89 842.00L1708.39 842.00L1706.39 886.00L1698.89 886.00L1697.89 864.00z" fill="#d9525e"/>
<path d="M1711.89 861.00l2 14" stroke="#e5d12a" stroke-width="2"/>
<circle cx="1730.89" cy="889.00" r="3" fill="#e8e8e8" stroke="#222" stroke-width="1.5"/>
<rect x="1738.00" y="835.9" width="58.5" height="59" fill="#474747"/>
<rect x="1738.00" y="835.9" width="58.5" height="59" fill="url(#fanbay)"/>
<circle cx="1766.52" cy="864.00" r="25.8" fill="#050505"/>
<circle cx="1766.52" cy="864.00" r="23.2" fill="none" stroke="#bdbdbd" stroke-width="1.8"/>
<path d="M1744.52 864.00H1788.52" stroke="#bdbdbd" stroke-width="1.6"/>
<circle cx="1769.52" cy="864.00" r="9" fill="none" stroke="#9a9a9a" stroke-width="1.5"/>
<path d="M1768.52 855.00c8 -2 13 3 13 9s-5 11 -13 9z" fill="#b9aa98"/>
<path d="M1760.52 842.00L1768.02 842.00L1766.02 886.00L1758.52 886.00L1757.52 864.00z" fill="#d9525e"/>
<path d="M1771.52 861.00l2 14" stroke="#e5d12a" stroke-width="2"/>
<circle cx="1790.52" cy="889.00" r="3" fill="#e8e8e8" stroke="#222" stroke-width="1.5"/>
<rect x="1501.50" y="719.80" width="143" height="18" fill="#3a3a3a" stroke="#c2c2c2" stroke-width="1.8"/>
<rect x="1504.50" y="721.80" width="4.00" height="14.00" fill="#6a6a6a" />
<rect x="1509.50" y="721.80" width="2.00" height="14.00" fill="#0c0c0c" />
<rect x="1512.50" y="721.80" width="7.00" height="6.00" fill="#dedede" />
<rect x="1512.50" y="727.80" width="7.00" height="8.00" fill="#7b7b7b" />
<rect x="1605.50" y="720.80" width="5.00" height="16.00" fill="#1b1b1b" />
<rect x="1610.50" y="720.80" width="4.00" height="16.00" fill="#9a9a9a" />
<path d="M1590.50 723.80h10v10h-10" fill="none" stroke="#6d6d6d" stroke-width="1.2"/>
<rect x="1501.50" y="742.80" width="143" height="18" fill="#3a3a3a" stroke="#c2c2c2" stroke-width="1.8"/>
<rect x="1504.50" y="744.80" width="4.00" height="14.00" fill="#6a6a6a" />
<rect x="1509.50" y="744.80" width="2.00" height="14.00" fill="#0c0c0c" />
<rect x="1512.50" y="744.80" width="7.00" height="6.00" fill="#dedede" />
<rect x="1512.50" y="750.80" width="7.00" height="8.00" fill="#7b7b7b" />
<rect x="1605.50" y="743.80" width="5.00" height="16.00" fill="#1b1b1b" />
<rect x="1610.50" y="743.80" width="4.00" height="16.00" fill="#9a9a9a" />
<path d="M1590.50 746.80h10v10h-10" fill="none" stroke="#6d6d6d" stroke-width="1.2"/>
<rect x="1501.50" y="764.60" width="143" height="18" fill="#3a3a3a" stroke="#c2c2c2" stroke-width="1.8"/>
<rect x="1504.50" y="766.60" width="4.00" height="14.00" fill="#6a6a6a" />
<rect x="1509.50" y="766.60" width="2.00" height="14.00" fill="#0c0c0c" />
<rect x="1512.50" y="766.60" width="7.00" height="6.00" fill="#dedede" />
<rect x="1512.50" y="772.60" width="7.00" height="8.00" fill="#7b7b7b" />
<rect x="1605.50" y="765.60" width="5.00" height="16.00" fill="#1b1b1b" />
<rect x="1610.50" y="765.60" width="4.00" height="16.00" fill="#9a9a9a" />
<path d="M1590.50 768.60h10v10h-10" fill="none" stroke="#6d6d6d" stroke-width="1.2"/>
<rect x="1501.50" y="788.30" width="143" height="18" fill="#3a3a3a" stroke="#c2c2c2" stroke-width="1.8"/>
<rect x="1504.50" y="790.30" width="4.00" height="14.00" fill="#6a6a6a" />
<rect x="1509.50" y="790.30" width="2.00" height="14.00" fill="#0c0c0c" />
<rect x="1512.50" y="790.30" width="7.00" height="6.00" fill="#dedede" />
<rect x="1512.50" y="796.30" width="7.00" height="8.00" fill="#7b7b7b" />
<rect x="1605.50" y="789.30" width="5.00" height="16.00" fill="#1b1b1b" />
<rect x="1610.50" y="789.30" width="4.00" height="16.00" fill="#9a9a9a" />
<path d="M1590.50 792.30h10v10h-10" fill="none" stroke="#6d6d6d" stroke-width="1.2"/>
<rect x="1500.50" y="739.00" width="145.00" height="3.00" fill="#9c9c9c" />
<rect x="1500.50" y="784.00" width="145.00" height="3.00" fill="#9c9c9c" />
<rect x="1650.70" y="719.80" width="143" height="18" fill="#3a3a3a" stroke="#c2c2c2" stroke-width="1.8"/>
<rect x="1653.70" y="721.80" width="4.00" height="14.00" fill="#6a6a6a" />
<rect x="1658.70" y="721.80" width="2.00" height="14.00" fill="#0c0c0c" />
<rect x="1661.70" y="721.80" width="7.00" height="6.00" fill="#dedede" />
<rect x="1661.70" y="727.80" width="7.00" height="8.00" fill="#7b7b7b" />
<rect x="1754.70" y="720.80" width="5.00" height="16.00" fill="#1b1b1b" />
<rect x="1759.70" y="720.80" width="4.00" height="16.00" fill="#9a9a9a" />
<path d="M1739.70 723.80h10v10h-10" fill="none" stroke="#6d6d6d" stroke-width="1.2"/>
<rect x="1650.70" y="742.80" width="143" height="18" fill="#3a3a3a" stroke="#c2c2c2" stroke-width="1.8"/>
<rect x="1653.70" y="744.80" width="4.00" height="14.00" fill="#6a6a6a" />
<rect x="1658.70" y="744.80" width="2.00" height="14.00" fill="#0c0c0c" />
<rect x="1661.70" y="744.80" width="7.00" height="6.00" fill="#dedede" />
<rect x="1661.70" y="750.80" width="7.00" height="8.00" fill="#7b7b7b" />
<rect x="1754.70" y="743.80" width="5.00" height="16.00" fill="#1b1b1b" />
<rect x="1759.70" y="743.80" width="4.00" height="16.00" fill="#9a9a9a" />
<path d="M1739.70 746.80h10v10h-10" fill="none" stroke="#6d6d6d" stroke-width="1.2"/>
<rect x="1650.70" y="764.60" width="143" height="18" fill="#3a3a3a" stroke="#c2c2c2" stroke-width="1.8"/>
<rect x="1653.70" y="766.60" width="4.00" height="14.00" fill="#6a6a6a" />
<rect x="1658.70" y="766.60" width="2.00" height="14.00" fill="#0c0c0c" />
<rect x="1661.70" y="766.60" width="7.00" height="6.00" fill="#dedede" />
<rect x="1661.70" y="772.60" width="7.00" height="8.00" fill="#7b7b7b" />
<rect x="1754.70" y="765.60" width="5.00" height="16.00" fill="#1b1b1b" />
<rect x="1759.70" y="765.60" width="4.00" height="16.00" fill="#9a9a9a" />
<path d="M1739.70 768.60h10v10h-10" fill="none" stroke="#6d6d6d" stroke-width="1.2"/>
<rect x="1650.70" y="788.30" width="143" height="18" fill="#3a3a3a" stroke="#c2c2c2" stroke-width="1.8"/>
<rect x="1653.70" y="790.30" width="4.00" height="14.00" fill="#6a6a6a" />
<rect x="1658.70" y="790.30" width="2.00" height="14.00" fill="#0c0c0c" />
<rect x="1661.70" y="790.30" width="7.00" height="6.00" fill="#dedede" />
<rect x="1661.70" y="796.30" width="7.00" height="8.00" fill="#7b7b7b" />
<rect x="1754.70" y="789.30" width="5.00" height="16.00" fill="#1b1b1b" />
<rect x="1759.70" y="789.30" width="4.00" height="16.00" fill="#9a9a9a" />
<path d="M1739.70 792.30h10v10h-10" fill="none" stroke="#6d6d6d" stroke-width="1.2"/>
<rect x="1649.70" y="739.00" width="145.00" height="3.00" fill="#9c9c9c" />
<rect x="1649.70" y="784.00" width="145.00" height="3.00" fill="#9c9c9c" />
<rect x="1501.00" y="812.20" width="293.50" height="19.20" fill="#1f1f1f" />
<rect x="1501" y="812.2" width="293.5" height="19.2" fill="none" stroke="#565656" stroke-width="1.2"/>
<rect x="1509.00" y="818.00" width="4.00" height="4.00" fill="#ddd" />
<rect x="1525" y="817" width="13" height="8" fill="none" stroke="#ccc" stroke-width="1.3"/>
<rect x="1554" y="816" width="13" height="6" rx="1.5" fill="#2a2a2a" stroke="#5b5b5b" stroke-width="1"/>
<rect x="1573" y="816" width="13" height="6" rx="1.5" fill="#2a2a2a" stroke="#5b5b5b" stroke-width="1"/>
<rect x="1601" y="816" width="13" height="6" rx="1.5" fill="#2a2a2a" stroke="#5b5b5b" stroke-width="1"/>
<rect x="1622" y="820" width="17" height="5" rx="2.5" fill="#1f6fd0" stroke="#bbb" stroke-width="1"/>
<rect x="1778" y="820" width="17" height="5" rx="2.5" fill="#1f6fd0" stroke="#bbb" stroke-width="1"/>
<rect x="1648" y="816" width="12" height="12" fill="#222" stroke="#666" stroke-width="1.2"/>
<rect x="1664" y="816" width="12" height="12" fill="#222" stroke="#666" stroke-width="1.2"/>
<rect x="1681" y="816" width="12" height="12" fill="#222" stroke="#666" stroke-width="1.2"/>
<rect x="1751" y="820" width="19" height="5" rx="2.5" fill="#444" stroke="#bbb" stroke-width="1"/>
<rect x="1500.00" y="897.40" width="297.00" height="20.50" fill="#c7c7c7" />
<rect x="1502.50" y="899.20" width="9.00" height="3.00" fill="#151515" />
<rect x="1513.95" y="899.20" width="9.00" height="3.00" fill="#151515" />
<rect x="1525.40" y="899.20" width="9.00" height="3.00" fill="#151515" />
<rect x="1536.85" y="899.20" width="9.00" height="3.00" fill="#151515" />
<rect x="1548.30" y="899.20" width="9.00" height="3.00" fill="#151515" />
<rect x="1559.75" y="899.20" width="9.00" height="3.00" fill="#151515" />
<rect x="1571.20" y="899.20" width="9.00" height="3.00" fill="#151515" />
<rect x="1582.65" y="899.20" width="9.00" height="3.00" fill="#151515" />
<rect x="1594.10" y="899.20" width="9.00" height="3.00" fill="#151515" />
<rect x="1605.55" y="899.20" width="9.00" height="3.00" fill="#151515" />
<rect x="1617.00" y="899.20" width="9.00" height="3.00" fill="#151515" />
<rect x="1628.45" y="899.20" width="9.00" height="3.00" fill="#151515" />
<rect x="1639.90" y="899.20" width="9.00" height="3.00" fill="#151515" />
<rect x="1651.35" y="899.20" width="9.00" height="3.00" fill="#151515" />
<rect x="1662.80" y="899.20" width="9.00" height="3.00" fill="#151515" />
<rect x="1674.25" y="899.20" width="9.00" height="3.00" fill="#151515" />
<rect x="1685.70" y="899.20" width="9.00" height="3.00" fill="#151515" />
<rect x="1697.15" y="899.20" width="9.00" height="3.00" fill="#151515" />
<rect x="1708.60" y="899.20" width="9.00" height="3.00" fill="#151515" />
<rect x="1720.05" y="899.20" width="9.00" height="3.00" fill="#151515" />
<rect x="1731.50" y="899.20" width="9.00" height="3.00" fill="#151515" />
<rect x="1742.95" y="899.20" width="9.00" height="3.00" fill="#151515" />
<rect x="1754.40" y="899.20" width="9.00" height="3.00" fill="#151515" />
<rect x="1765.85" y="899.20" width="9.00" height="3.00" fill="#151515" />
<rect x="1777.30" y="899.20" width="9.00" height="3.00" fill="#151515" />
<rect x="1788.75" y="899.20" width="9.00" height="3.00" fill="#151515" />
<rect x="1502.50" y="903.80" width="9.00" height="3.00" fill="#151515" />
<rect x="1513.95" y="903.80" width="9.00" height="3.00" fill="#151515" />
<rect x="1525.40" y="903.80" width="9.00" height="3.00" fill="#151515" />
<rect x="1536.85" y="903.80" width="9.00" height="3.00" fill="#151515" />
<rect x="1548.30" y="903.80" width="9.00" height="3.00" fill="#151515" />
<rect x="1559.75" y="903.80" width="9.00" height="3.00" fill="#151515" />
<rect x="1571.20" y="903.80" width="9.00" height="3.00" fill="#151515" />
<rect x="1582.65" y="903.80" width="9.00" height="3.00" fill="#151515" />
<rect x="1594.10" y="903.80" width="9.00" height="3.00" fill="#151515" />
<rect x="1605.55" y="903.80" width="9.00" height="3.00" fill="#151515" />
<rect x="1617.00" y="903.80" width="9.00" height="3.00" fill="#151515" />
<rect x="1628.45" y="903.80" width="9.00" height="3.00" fill="#151515" />
<rect x="1639.90" y="903.80" width="9.00" height="3.00" fill="#151515" />
<rect x="1651.35" y="903.80" width="9.00" height="3.00" fill="#151515" />
<rect x="1662.80" y="903.80" width="9.00" height="3.00" fill="#151515" />
<rect x="1674.25" y="903.80" width="9.00" height="3.00" fill="#151515" />
<rect x="1685.70" y="903.80" width="9.00" height="3.00" fill="#151515" />
<rect x="1697.15" y="903.80" width="9.00" height="3.00" fill="#151515" />
<rect x="1708.60" y="903.80" width="9.00" height="3.00" fill="#151515" />
<rect x="1720.05" y="903.80" width="9.00" height="3.00" fill="#151515" />
<rect x="1731.50" y="903.80" width="9.00" height="3.00" fill="#151515" />
<rect x="1742.95" y="903.80" width="9.00" height="3.00" fill="#151515" />
<rect x="1754.40" y="903.80" width="9.00" height="3.00" fill="#151515" />
<rect x="1765.85" y="903.80" width="9.00" height="3.00" fill="#151515" />
<rect x="1777.30" y="903.80" width="9.00" height="3.00" fill="#151515" />
<rect x="1788.75" y="903.80" width="9.00" height="3.00" fill="#151515" />
<rect x="1502.50" y="908.40" width="9.00" height="3.00" fill="#151515" />
<rect x="1513.95" y="908.40" width="9.00" height="3.00" fill="#151515" />
<rect x="1525.40" y="908.40" width="9.00" height="3.00" fill="#151515" />
<rect x="1536.85" y="908.40" width="9.00" height="3.00" fill="#151515" />
<rect x="1548.30" y="908.40" width="9.00" height="3.00" fill="#151515" />
<rect x="1559.75" y="908.40" width="9.00" height="3.00" fill="#151515" />
<rect x="1571.20" y="908.40" width="9.00" height="3.00" fill="#151515" />
<rect x="1582.65" y="908.40" width="9.00" height="3.00" fill="#151515" />
<rect x="1594.10" y="908.40" width="9.00" height="3.00" fill="#151515" />
<rect x="1605.55" y="908.40" width="9.00" height="3.00" fill="#151515" />
<rect x="1617.00" y="908.40" width="9.00" height="3.00" fill="#151515" />
<rect x="1628.45" y="908.40" width="9.00" height="3.00" fill="#151515" />
<rect x="1639.90" y="908.40" width="9.00" height="3.00" fill="#151515" />
<rect x="1651.35" y="908.40" width="9.00" height="3.00" fill="#151515" />
<rect x="1662.80" y="908.40" width="9.00" height="3.00" fill="#151515" />
<rect x="1674.25" y="908.40" width="9.00" height="3.00" fill="#151515" />
<rect x="1685.70" y="908.40" width="9.00" height="3.00" fill="#151515" />
<rect x="1697.15" y="908.40" width="9.00" height="3.00" fill="#151515" />
<rect x="1708.60" y="908.40" width="9.00" height="3.00" fill="#151515" />
<rect x="1720.05" y="908.40" width="9.00" height="3.00" fill="#151515" />
<rect x="1731.50" y="908.40" width="9.00" height="3.00" fill="#151515" />
<rect x="1742.95" y="908.40" width="9.00" height="3.00" fill="#151515" />
<rect x="1754.40" y="908.40" width="9.00" height="3.00" fill="#151515" />
<rect x="1765.85" y="908.40" width="9.00" height="3.00" fill="#151515" />
<rect x="1777.30" y="908.40" width="9.00" height="3.00" fill="#151515" />
<rect x="1788.75" y="908.40" width="9.00" height="3.00" fill="#151515" />
<rect x="1502.50" y="913.00" width="9.00" height="3.00" fill="#151515" />
<rect x="1513.95" y="913.00" width="9.00" height="3.00" fill="#151515" />
<rect x="1525.40" y="913.00" width="9.00" height="3.00" fill="#151515" />
<rect x="1536.85" y="913.00" width="9.00" height="3.00" fill="#151515" />
<rect x="1548.30" y="913.00" width="9.00" height="3.00" fill="#151515" />
<rect x="1559.75" y="913.00" width="9.00" height="3.00" fill="#151515" />
<rect x="1571.20" y="913.00" width="9.00" height="3.00" fill="#151515" />
<rect x="1582.65" y="913.00" width="9.00" height="3.00" fill="#151515" />
<rect x="1594.10" y="913.00" width="9.00" height="3.00" fill="#151515" />
<rect x="1605.55" y="913.00" width="9.00" height="3.00" fill="#151515" />
<rect x="1617.00" y="913.00" width="9.00" height="3.00" fill="#151515" />
<rect x="1628.45" y="913.00" width="9.00" height="3.00" fill="#151515" />
<rect x="1639.90" y="913.00" width="9.00" height="3.00" fill="#151515" />
<rect x="1651.35" y="913.00" width="9.00" height="3.00" fill="#151515" />
<rect x="1662.80" y="913.00" width="9.00" height="3.00" fill="#151515" />
<rect x="1674.25" y="913.00" width="9.00" height="3.00" fill="#151515" />
<rect x="1685.70" y="913.00" width="9.00" height="3.00" fill="#151515" />
<rect x="1697.15" y="913.00" width="9.00" height="3.00" fill="#151515" />
<rect x="1708.60" y="913.00" width="9.00" height="3.00" fill="#151515" />
<rect x="1720.05" y="913.00" width="9.00" height="3.00" fill="#151515" />
<rect x="1731.50" y="913.00" width="9.00" height="3.00" fill="#151515" />
<rect x="1742.95" y="913.00" width="9.00" height="3.00" fill="#151515" />
<rect x="1754.40" y="913.00" width="9.00" height="3.00" fill="#151515" />
<rect x="1765.85" y="913.00" width="9.00" height="3.00" fill="#151515" />
<rect x="1777.30" y="913.00" width="9.00" height="3.00" fill="#151515" />
<rect x="1788.75" y="913.00" width="9.00" height="3.00" fill="#151515" />
<rect x="1489.00" y="919.20" width="312.50" height="19.80" fill="#cfcfcf" />
<rect x="1489.00" y="919.20" width="312.50" height="1.40" fill="#8f8f8f" />
<rect x="1492" y="921.5" width="24" height="13.5" fill="#2f86d9" stroke="#5aa6f0" stroke-width="1"/>
<rect x="1496.00" y="929.50" width="5.00" height="1.50" fill="#dce9f7" />
<rect x="1506.00" y="929.50" width="5.00" height="1.50" fill="#dce9f7" />
<rect x="1528" y="921.5" width="24" height="13.5" fill="#2f86d9" stroke="#5aa6f0" stroke-width="1"/>
<rect x="1532.00" y="929.50" width="5.00" height="1.50" fill="#dce9f7" />
<rect x="1542.00" y="929.50" width="5.00" height="1.50" fill="#dce9f7" />
<rect x="1563" y="921.5" width="24" height="13.5" fill="#2f86d9" stroke="#5aa6f0" stroke-width="1"/>
<rect x="1567.00" y="929.50" width="5.00" height="1.50" fill="#dce9f7" />
<rect x="1577.00" y="929.50" width="5.00" height="1.50" fill="#dce9f7" />
<rect x="1702.6" y="921.5" width="24" height="13.5" fill="#2f86d9" stroke="#5aa6f0" stroke-width="1"/>
<rect x="1706.60" y="929.50" width="5.00" height="1.50" fill="#dce9f7" />
<rect x="1716.60" y="929.50" width="5.00" height="1.50" fill="#dce9f7" />
<rect x="1737.7" y="921.5" width="24" height="13.5" fill="#2f86d9" stroke="#5aa6f0" stroke-width="1"/>
<rect x="1741.70" y="929.50" width="5.00" height="1.50" fill="#dce9f7" />
<rect x="1751.70" y="929.50" width="5.00" height="1.50" fill="#dce9f7" />
<rect x="1773" y="921.5" width="24" height="13.5" fill="#2f86d9" stroke="#5aa6f0" stroke-width="1"/>
<rect x="1777.00" y="929.50" width="5.00" height="1.50" fill="#dce9f7" />
<rect x="1787.00" y="929.50" width="5.00" height="1.50" fill="#dce9f7" />
<rect x="1600" y="923" width="90" height="11" fill="#c3c3c3" stroke="#a9a9a9" stroke-width="1"/>
<rect x="1489.00" y="938.80" width="313.00" height="57.14" fill="#b9c1c8" />
<circle cx="1496" cy="944.8" r="4" fill="#8fb2dd" stroke="#6c7f99" stroke-width="1"/><circle cx="1796" cy="944.8" r="4" fill="#8fb2dd" stroke="#6c7f99" stroke-width="1"/>
<rect x="1506.00" y="940.80" width="22.00" height="22.00" fill="url(#gMesh)" />
<rect x="1533.00" y="940.80" width="46.00" height="10.00" fill="#121212" />
<rect x="1533.00" y="940.80" width="2.50" height="10.00" fill="#c23a3f" />
<rect x="1570.00" y="941.80" width="8.00" height="8.00" fill="#bfbfbf" />
<rect x="1533.00" y="951.80" width="46.00" height="10.00" fill="#121212" />
<rect x="1533.00" y="951.80" width="2.50" height="10.00" fill="#c23a3f" />
<rect x="1570.00" y="952.80" width="8.00" height="8.00" fill="#bfbfbf" />
<rect x="1583.00" y="940.80" width="46.00" height="10.00" fill="#121212" />
<rect x="1583.00" y="940.80" width="2.50" height="10.00" fill="#c23a3f" />
<rect x="1620.00" y="941.80" width="8.00" height="8.00" fill="#bfbfbf" />
<rect x="1583.00" y="951.80" width="46.00" height="10.00" fill="#121212" />
<rect x="1583.00" y="951.80" width="2.50" height="10.00" fill="#c23a3f" />
<rect x="1620.00" y="952.80" width="8.00" height="8.00" fill="#bfbfbf" />
<rect x="1638.00" y="940.80" width="23.00" height="22.00" fill="url(#gMesh)" />
<rect x="1668.00" y="943.80" width="32.00" height="23.00" fill="url(#gMesh)" />
<rect x="1708" y="940.8" width="80" height="47" fill="#a9b1b8" stroke="#98a0a7" stroke-width="1"/>
<rect x="1714.00" y="944.80" width="68.00" height="9.00" fill="#262626" />
<rect x="1720.00" y="958.80" width="62.00" height="4.00" fill="#6c7379" />
<rect x="1720.00" y="971.80" width="62.00" height="4.00" fill="#6c7379" />
<rect x="1714.00" y="965.80" width="6.00" height="3.00" fill="#5d646a" />
<rect x="1722.60" y="965.80" width="6.00" height="3.00" fill="#5d646a" />
<rect x="1731.20" y="965.80" width="6.00" height="3.00" fill="#5d646a" />
<rect x="1739.80" y="965.80" width="6.00" height="3.00" fill="#5d646a" />
<rect x="1748.40" y="965.80" width="6.00" height="3.00" fill="#5d646a" />
<rect x="1757.00" y="965.80" width="6.00" height="3.00" fill="#5d646a" />
<rect x="1765.60" y="965.80" width="6.00" height="3.00" fill="#5d646a" />
<rect x="1774.20" y="965.80" width="6.00" height="3.00" fill="#5d646a" />
<rect x="1782.00" y="942.80" width="9.00" height="42.00" fill="#1c1c1c" />
<circle cx="1796" cy="955.8" r="2" fill="#5b6167"/>
<circle cx="1796" cy="961.3" r="2" fill="#5b6167"/>
<circle cx="1796" cy="966.8" r="2" fill="#5b6167"/>
<circle cx="1796" cy="972.3" r="2" fill="#5b6167"/>
<circle cx="1796" cy="977.8" r="2" fill="#5b6167"/>
<circle cx="1796" cy="983.3" r="2" fill="#5b6167"/>
<circle cx="1796" cy="988.8" r="2" fill="#5b6167"/>
<rect x="1570.00" y="968.80" width="130.00" height="14.00" fill="url(#gMesh)" />
<rect x="1502.00" y="968.80" width="6.00" height="20.00" fill="#2a2a2a" />
<circle cx="1505" cy="979.8" r="1.6" fill="#39d24a"/><circle cx="1505" cy="984.8" r="1.6" fill="#39d24a"/>
<rect x="1510.00" y="968.80" width="22.00" height="25.00" fill="#3f4449" />
<rect x="1514.00" y="969.80" width="15.00" height="14.00" fill="#0e0e0e" />
<rect x="1520.00" y="988.80" width="4.00" height="4.00" fill="#d33" />
<rect x="1532.00" y="968.80" width="6.00" height="20.00" fill="#2a2a2a" />
<circle cx="1535" cy="979.8" r="1.6" fill="#39d24a"/><circle cx="1535" cy="984.8" r="1.6" fill="#39d24a"/>
<rect x="1540.00" y="968.80" width="22.00" height="25.00" fill="#3f4449" />
<rect x="1544.00" y="969.80" width="15.00" height="14.00" fill="#0e0e0e" />
<rect x="1550.00" y="988.80" width="4.00" height="4.00" fill="#d33" />
<rect x="1596.00" y="982.80" width="14.00" height="5.00" fill="#2a8c8f" />
<rect x="1622.00" y="982.80" width="14.00" height="5.00" fill="#2f63c8" />
<rect x="1650.00" y="978.80" width="13.00" height="4.00" fill="#222" />
<rect x="1650.00" y="984.80" width="13.00" height="4.00" fill="#222" />
<path d="M1668 990.8v-7a6 6 0 0 1 12 0v7z" fill="#222"/>
<path d="M1684 990.8v-7a6 6 0 0 1 12 0v7z" fill="#222"/>
<path d="M1700 990.8v-7a6 6 0 0 1 12 0v7z" fill="#222"/>
<rect x="1578.00" y="988.80" width="130.00" height="5.00" fill="url(#gMesh)" />
<rect x="1489.00" y="995.94" width="313.00" height="85.71" fill="#9e9a94" />
<rect x="1490.00" y="996.44" width="95.00" height="20.43" fill="url(#gMeshL)" />
<ellipse cx="1539.00" cy="1005.59" rx="13" ry="4.71" fill="#e0e0e0" opacity="0.8"/>
<rect x="1491.00" y="1013.37" width="93.00" height="3.00" fill="#1c1c1c" />
<rect x="1579.00" y="1011.37" width="7.00" height="5.00" fill="#2aa3b5" />
<rect x="1490.00" y="1017.87" width="95.00" height="20.43" fill="url(#gMeshL)" />
<ellipse cx="1539.00" cy="1027.01" rx="13" ry="4.71" fill="#e0e0e0" opacity="0.8"/>
<rect x="1491.00" y="1034.80" width="93.00" height="3.00" fill="#1c1c1c" />
<rect x="1579.00" y="1032.80" width="7.00" height="5.00" fill="#2aa3b5" />
<rect x="1490.00" y="1039.30" width="95.00" height="20.43" fill="url(#gMeshL)" />
<ellipse cx="1539.00" cy="1048.44" rx="13" ry="4.71" fill="#e0e0e0" opacity="0.8"/>
<rect x="1491.00" y="1056.23" width="93.00" height="3.00" fill="#1c1c1c" />
<rect x="1579.00" y="1054.23" width="7.00" height="5.00" fill="#2aa3b5" />
<rect x="1490.00" y="1060.73" width="95.00" height="20.43" fill="url(#gMeshL)" />
<ellipse cx="1539.00" cy="1069.87" rx="13" ry="4.71" fill="#e0e0e0" opacity="0.8"/>
<rect x="1491.00" y="1077.66" width="93.00" height="3.00" fill="#1c1c1c" />
<rect x="1579.00" y="1075.66" width="7.00" height="5.00" fill="#2aa3b5" />
<rect x="1585.00" y="995.94" width="5.00" height="85.71" fill="#bcbcbc" />
<rect x="1590.00" y="995.94" width="121.00" height="85.71" fill="#8a837a" />
<rect x="1597.00" y="998.94" width="22.00" height="36.86" fill="#3a332d" />
<rect x="1600.00" y="1010.94" width="16.00" height="2.50" fill="#a89e93" />
<rect x="1600.00" y="1021.66" width="16.00" height="2.50" fill="#a89e93" />
<rect x="1604.20" y="1028.09" width="7.20" height="3.00" fill="#d6d0c8" />
<rect x="1611.00" y="997.94" width="7.00" height="5.00" fill="#2fb6c4" />
<rect x="1623.00" y="998.94" width="24.00" height="36.86" fill="#3a332d" />
<rect x="1626.00" y="1010.94" width="18.00" height="2.50" fill="#a89e93" />
<rect x="1626.00" y="1021.66" width="18.00" height="2.50" fill="#a89e93" />
<rect x="1630.80" y="1028.09" width="7.80" height="3.00" fill="#d6d0c8" />
<rect x="1639.00" y="997.94" width="7.00" height="5.00" fill="#2fb6c4" />
<rect x="1651.00" y="998.94" width="20.00" height="36.86" fill="#3a332d" />
<rect x="1654.00" y="1010.94" width="14.00" height="2.50" fill="#a89e93" />
<rect x="1654.00" y="1021.66" width="14.00" height="2.50" fill="#a89e93" />
<rect x="1657.60" y="1028.09" width="6.60" height="3.00" fill="#d6d0c8" />
<rect x="1663.00" y="997.94" width="7.00" height="5.00" fill="#2fb6c4" />
<rect x="1675.00" y="998.94" width="24.00" height="36.86" fill="#3a332d" />
<rect x="1678.00" y="1010.94" width="18.00" height="2.50" fill="#a89e93" />
<rect x="1678.00" y="1021.66" width="18.00" height="2.50" fill="#a89e93" />
<rect x="1682.80" y="1028.09" width="7.80" height="3.00" fill="#d6d0c8" />
<rect x="1691.00" y="997.94" width="7.00" height="5.00" fill="#2fb6c4" />
<rect x="1703.00" y="998.94" width="6.00" height="36.86" fill="#3a332d" />
<rect x="1706.00" y="1010.94" width="0.00" height="2.50" fill="#a89e93" />
<rect x="1706.00" y="1021.66" width="0.00" height="2.50" fill="#a89e93" />
<rect x="1705.40" y="1028.09" width="2.40" height="3.00" fill="#d6d0c8" />
<rect x="1596.00" y="1035.80" width="114.00" height="3.00" fill="#b5b0aa" />
<rect x="1597.00" y="1041.80" width="22.00" height="36.86" fill="#3a332d" />
<rect x="1600.00" y="1053.80" width="16.00" height="2.50" fill="#a89e93" />
<rect x="1600.00" y="1064.51" width="16.00" height="2.50" fill="#a89e93" />
<rect x="1604.20" y="1070.94" width="7.20" height="3.00" fill="#d6d0c8" />
<rect x="1611.00" y="1040.80" width="7.00" height="5.00" fill="#2fb6c4" />
<rect x="1623.00" y="1041.80" width="24.00" height="36.86" fill="#3a332d" />
<rect x="1626.00" y="1053.80" width="18.00" height="2.50" fill="#a89e93" />
<rect x="1626.00" y="1064.51" width="18.00" height="2.50" fill="#a89e93" />
<rect x="1630.80" y="1070.94" width="7.80" height="3.00" fill="#d6d0c8" />
<rect x="1639.00" y="1040.80" width="7.00" height="5.00" fill="#2fb6c4" />
<rect x="1651.00" y="1041.80" width="20.00" height="36.86" fill="#3a332d" />
<rect x="1654.00" y="1053.80" width="14.00" height="2.50" fill="#a89e93" />
<rect x="1654.00" y="1064.51" width="14.00" height="2.50" fill="#a89e93" />
<rect x="1657.60" y="1070.94" width="6.60" height="3.00" fill="#d6d0c8" />
<rect x="1663.00" y="1040.80" width="7.00" height="5.00" fill="#2fb6c4" />
<rect x="1675.00" y="1041.80" width="24.00" height="36.86" fill="#3a332d" />
<rect x="1678.00" y="1053.80" width="18.00" height="2.50" fill="#a89e93" />
<rect x="1678.00" y="1064.51" width="18.00" height="2.50" fill="#a89e93" />
<rect x="1682.80" y="1070.94" width="7.80" height="3.00" fill="#d6d0c8" />
<rect x="1691.00" y="1040.80" width="7.00" height="5.00" fill="#2fb6c4" />
<rect x="1703.00" y="1041.80" width="6.00" height="36.86" fill="#3a332d" />
<rect x="1706.00" y="1053.80" width="0.00" height="2.50" fill="#a89e93" />
<rect x="1706.00" y="1064.51" width="0.00" height="2.50" fill="#a89e93" />
<rect x="1705.40" y="1070.94" width="2.40" height="3.00" fill="#d6d0c8" />
<rect x="1596.00" y="1078.66" width="114.00" height="3.00" fill="#b5b0aa" />
<rect x="1711.00" y="995.94" width="8.00" height="85.71" fill="#a7a7a7" />
<rect x="1719.00" y="996.94" width="82.00" height="19.43" fill="url(#gMeshL)" />
<rect x="1721.00" y="1007.73" width="72.00" height="2.50" fill="#151515" />
<rect x="1779.00" y="997.94" width="20.00" height="8.57" fill="#111" />
<rect x="1794.00" y="1002.37" width="8.00" height="5.00" fill="#2fb6c4" />
<rect x="1719.00" y="1018.37" width="82.00" height="19.43" fill="url(#gMeshL)" />
<rect x="1721.00" y="1029.16" width="72.00" height="2.50" fill="#151515" />
<rect x="1779.00" y="1019.37" width="20.00" height="8.57" fill="#111" />
<rect x="1794.00" y="1023.80" width="8.00" height="5.00" fill="#2fb6c4" />
<rect x="1719.00" y="1039.80" width="82.00" height="19.43" fill="url(#gMeshL)" />
<rect x="1721.00" y="1050.59" width="72.00" height="2.50" fill="#151515" />
<rect x="1779.00" y="1040.80" width="20.00" height="8.57" fill="#111" />
<rect x="1794.00" y="1045.23" width="8.00" height="5.00" fill="#2fb6c4" />
<rect x="1719.00" y="1061.23" width="82.00" height="19.43" fill="url(#gMeshL)" />
<rect x="1721.00" y="1072.01" width="72.00" height="2.50" fill="#151515" />
<rect x="1779.00" y="1062.23" width="20.00" height="8.57" fill="#111" />
<rect x="1794.00" y="1066.66" width="8.00" height="5.00" fill="#2fb6c4" />
<rect x="1489.00" y="1080.16" width="313.00" height="1.50" fill="#77736e" />
<rect x="1489.00" y="1110.23" width="313.00" height="366.00" fill="url(#tealG)" />
<rect x="1506.00" y="1126.00" width="280.70" height="103.00" fill="url(#gTeal)" />
<circle cx="1494.2" cy="1115.8" r="3.8" fill="#1e2427" stroke="#6b7a80" stroke-width="1"/>
<circle cx="1494.2" cy="1458.9" r="3.8" fill="#1e2427" stroke="#6b7a80" stroke-width="1"/>
<circle cx="1555" cy="1115.8" r="3.8" fill="#1e2427" stroke="#6b7a80" stroke-width="1"/>
<circle cx="1555" cy="1458.9" r="3.8" fill="#1e2427" stroke="#6b7a80" stroke-width="1"/>
<circle cx="1617.6" cy="1115.8" r="3.8" fill="#1e2427" stroke="#6b7a80" stroke-width="1"/>
<circle cx="1617.6" cy="1458.9" r="3.8" fill="#1e2427" stroke="#6b7a80" stroke-width="1"/>
<circle cx="1676.8" cy="1115.8" r="3.8" fill="#1e2427" stroke="#6b7a80" stroke-width="1"/>
<circle cx="1676.8" cy="1458.9" r="3.8" fill="#1e2427" stroke="#6b7a80" stroke-width="1"/>
<circle cx="1737.6" cy="1115.8" r="3.8" fill="#1e2427" stroke="#6b7a80" stroke-width="1"/>
<circle cx="1737.6" cy="1458.9" r="3.8" fill="#1e2427" stroke="#6b7a80" stroke-width="1"/>
<circle cx="1796.8" cy="1115.8" r="3.8" fill="#1e2427" stroke="#6b7a80" stroke-width="1"/>
<circle cx="1796.8" cy="1458.9" r="3.8" fill="#1e2427" stroke="#6b7a80" stroke-width="1"/>
<circle cx="1494.2" cy="1224" r="3.8" fill="#1e2427" stroke="#6b7a80" stroke-width="1"/><circle cx="1796.8" cy="1224" r="3.8" fill="#1e2427" stroke="#6b7a80" stroke-width="1"/>
<circle cx="1494.2" cy="1299" r="3.8" fill="#1e2427" stroke="#6b7a80" stroke-width="1"/><circle cx="1796.8" cy="1299" r="3.8" fill="#1e2427" stroke="#6b7a80" stroke-width="1"/>
<circle cx="1494.2" cy="1377.8" r="3.8" fill="#1e2427" stroke="#6b7a80" stroke-width="1"/><circle cx="1796.8" cy="1377.8" r="3.8" fill="#1e2427" stroke="#6b7a80" stroke-width="1"/>
<rect x="1622.7" y="1248.7" width="45.6" height="9" rx="2" fill="#0d0d0d"/><rect x="1628" y="1250.5" width="10" height="5" fill="#9a9a9a"/>
<rect x="1518.3" y="1391.3" width="251.5" height="43.5" rx="5" fill="#325e70"/>
<text x="1540" y="1413" font-family="Liberation Serif" font-size="8" fill="#c0392b" textLength="45" lengthAdjust="spacingAndGlyphs">Cisco Systems</text>
<rect x="1540" y="1414.7" width="43.8" height="17.3" fill="#2a9aa8"/>
<path d="M1546 1430l7-10 7 10zM1562 1430l7-10 7 10z" fill="#bfe6ea"/>
<text x="1662.8" y="1422.7" font-family="Liberation Serif" font-size="11" fill="#e8eef0" textLength="80" lengthAdjust="spacingAndGlyphs">Catalyst 6500...</text>
<rect x="1489.00" y="1476.30" width="313.00" height="5.30" fill="#ffffff" />
<rect x="1525" y="1474.5" width="33.4" height="7" rx="3" fill="#2b3438"/><rect x="1729.7" y="1474.5" width="34.7" height="7" rx="3" fill="#2b3438"/>
<rect x="1489.00" y="1481.66" width="313.00" height="28.57" fill="#9e9a94" />
<rect x="1490.00" y="1482.16" width="95.00" height="13.29" fill="url(#gMeshL)" />
<ellipse cx="1539.00" cy="1488.09" rx="13" ry="3.14" fill="#e0e0e0" opacity="0.8"/>
<rect x="1491.00" y="1491.94" width="93.00" height="3.00" fill="#1c1c1c" />
<rect x="1579.00" y="1489.94" width="7.00" height="5.00" fill="#2aa3b5" />
<rect x="1490.00" y="1496.44" width="95.00" height="13.29" fill="url(#gMeshL)" />
<ellipse cx="1539.00" cy="1502.37" rx="13" ry="3.14" fill="#e0e0e0" opacity="0.8"/>
<rect x="1491.00" y="1506.23" width="93.00" height="3.00" fill="#1c1c1c" />
<rect x="1579.00" y="1504.23" width="7.00" height="5.00" fill="#2aa3b5" />
<rect x="1585.00" y="1481.66" width="5.00" height="28.57" fill="#bcbcbc" />
<rect x="1590.00" y="1481.66" width="121.00" height="28.57" fill="#8a837a" />
<rect x="1597.00" y="1484.66" width="22.00" height="22.57" fill="#3a332d" />
<rect x="1600.00" y="1491.66" width="16.00" height="2.50" fill="#a89e93" />
<rect x="1600.00" y="1498.80" width="16.00" height="2.50" fill="#a89e93" />
<rect x="1604.20" y="1503.09" width="7.20" height="3.00" fill="#d6d0c8" />
<rect x="1611.00" y="1483.66" width="7.00" height="5.00" fill="#2fb6c4" />
<rect x="1623.00" y="1484.66" width="24.00" height="22.57" fill="#3a332d" />
<rect x="1626.00" y="1491.66" width="18.00" height="2.50" fill="#a89e93" />
<rect x="1626.00" y="1498.80" width="18.00" height="2.50" fill="#a89e93" />
<rect x="1630.80" y="1503.09" width="7.80" height="3.00" fill="#d6d0c8" />
<rect x="1639.00" y="1483.66" width="7.00" height="5.00" fill="#2fb6c4" />
<rect x="1651.00" y="1484.66" width="20.00" height="22.57" fill="#3a332d" />
<rect x="1654.00" y="1491.66" width="14.00" height="2.50" fill="#a89e93" />
<rect x="1654.00" y="1498.80" width="14.00" height="2.50" fill="#a89e93" />
<rect x="1657.60" y="1503.09" width="6.60" height="3.00" fill="#d6d0c8" />
<rect x="1663.00" y="1483.66" width="7.00" height="5.00" fill="#2fb6c4" />
<rect x="1675.00" y="1484.66" width="24.00" height="22.57" fill="#3a332d" />
<rect x="1678.00" y="1491.66" width="18.00" height="2.50" fill="#a89e93" />
<rect x="1678.00" y="1498.80" width="18.00" height="2.50" fill="#a89e93" />
<rect x="1682.80" y="1503.09" width="7.80" height="3.00" fill="#d6d0c8" />
<rect x="1691.00" y="1483.66" width="7.00" height="5.00" fill="#2fb6c4" />
<rect x="1703.00" y="1484.66" width="6.00" height="22.57" fill="#3a332d" />
<rect x="1706.00" y="1491.66" width="0.00" height="2.50" fill="#a89e93" />
<rect x="1706.00" y="1498.80" width="0.00" height="2.50" fill="#a89e93" />
<rect x="1705.40" y="1503.09" width="2.40" height="3.00" fill="#d6d0c8" />
<rect x="1596.00" y="1507.23" width="114.00" height="3.00" fill="#b5b0aa" />
<rect x="1711.00" y="1481.66" width="8.00" height="28.57" fill="#a7a7a7" />
<rect x="1719.00" y="1482.66" width="82.00" height="12.29" fill="url(#gMeshL)" />
<rect x="1721.00" y="1489.51" width="72.00" height="2.50" fill="#151515" />
<rect x="1779.00" y="1483.66" width="20.00" height="5.71" fill="#111" />
<rect x="1794.00" y="1485.94" width="8.00" height="5.00" fill="#2fb6c4" />
<rect x="1719.00" y="1496.94" width="82.00" height="12.29" fill="url(#gMeshL)" />
<rect x="1721.00" y="1503.80" width="72.00" height="2.50" fill="#151515" />
<rect x="1779.00" y="1497.94" width="20.00" height="5.71" fill="#111" />
<rect x="1794.00" y="1500.23" width="8.00" height="5.00" fill="#2fb6c4" />
<rect x="1489.00" y="1508.73" width="313.00" height="1.50" fill="#77736e" />
<rect x="1486.00" y="1508.00" width="318.60" height="232.00" fill="#ffff00" />
<rect x="1491.00" y="1512.40" width="309.60" height="223.40" fill="#cfd0d0" />
<rect x="1491.00" y="1512.40" width="34.00" height="183.00" fill="#b8b9ba" />
<rect x="1645.40" y="1512.40" width="29.40" height="183.00" fill="#b8b9ba" />
<rect x="1494.00" y="1520.00" width="20.00" height="14.00" fill="url(#gMesh)" />
<rect x="1503.50" y="1546.00" width="7.50" height="51.00" fill="#161616" />
<rect x="1503.50" y="1603.00" width="7.50" height="48.00" fill="#161616" />
<circle cx="1518" cy="1541" r="3.5" fill="none" stroke="#d5d5d5" stroke-width="1.5"/><circle cx="1518" cy="1665" r="3.5" fill="none" stroke="#d5d5d5" stroke-width="1.5"/>
<rect x="1517.00" y="1550.00" width="5.00" height="120.00" fill="#9b9d9f" />
<rect x="1648.40" y="1520.00" width="20.00" height="14.00" fill="url(#gMesh)" />
<rect x="1657.90" y="1546.00" width="7.50" height="51.00" fill="#161616" />
<rect x="1657.90" y="1603.00" width="7.50" height="48.00" fill="#161616" />
<circle cx="1672.4" cy="1541" r="3.5" fill="none" stroke="#d5d5d5" stroke-width="1.5"/><circle cx="1672.4" cy="1665" r="3.5" fill="none" stroke="#d5d5d5" stroke-width="1.5"/>
<rect x="1671.40" y="1550.00" width="5.00" height="120.00" fill="#9b9d9f" />
<rect x="1526.30" y="1515.80" width="57.50" height="9.00" fill="#d9d9d9" />
<rect x="1526.30" y="1525.80" width="57.50" height="66.80" fill="#2b2d2f" />
<rect x="1528.30" y="1527.80" width="53.50" height="62.80" fill="url(#gBlk)" opacity="0.55"/>
<circle cx="1555.0" cy="1559.2" r="12" fill="none" stroke="#4a4d50" stroke-width="2.5"/>
<rect x="1550.55" y="1517.80" width="9.00" height="76.80" fill="#3d6676" />
<rect x="1550.55" y="1517.80" width="9.00" height="3.00" fill="#9fc3d0" />
<rect x="1526.30" y="1592.60" width="57.50" height="3.00" fill="#c5c6c7" />
<rect x="1526.30" y="1608.00" width="57.50" height="9.00" fill="#d9d9d9" />
<rect x="1526.30" y="1618.00" width="57.50" height="65.60" fill="#2b2d2f" />
<rect x="1528.30" y="1620.00" width="53.50" height="61.60" fill="url(#gBlk)" opacity="0.55"/>
<circle cx="1555.0" cy="1650.8" r="12" fill="none" stroke="#4a4d50" stroke-width="2.5"/>
<rect x="1550.55" y="1610.00" width="9.00" height="75.60" fill="#3d6676" />
<rect x="1550.55" y="1610.00" width="9.00" height="3.00" fill="#9fc3d0" />
<rect x="1526.30" y="1683.60" width="57.50" height="3.00" fill="#c5c6c7" />
<rect x="1524.30" y="1512.40" width="2.50" height="183.00" fill="#9fa1a3" />
<rect x="1586.50" y="1515.80" width="57.50" height="9.00" fill="#d9d9d9" />
<rect x="1586.50" y="1525.80" width="57.50" height="66.80" fill="#2b2d2f" />
<rect x="1588.50" y="1527.80" width="53.50" height="62.80" fill="url(#gBlk)" opacity="0.55"/>
<circle cx="1615.2" cy="1559.2" r="12" fill="none" stroke="#4a4d50" stroke-width="2.5"/>
<rect x="1610.75" y="1517.80" width="9.00" height="76.80" fill="#3d6676" />
<rect x="1610.75" y="1517.80" width="9.00" height="3.00" fill="#9fc3d0" />
<rect x="1586.50" y="1592.60" width="57.50" height="3.00" fill="#c5c6c7" />
<rect x="1586.50" y="1608.00" width="57.50" height="9.00" fill="#d9d9d9" />
<rect x="1586.50" y="1618.00" width="57.50" height="65.60" fill="#2b2d2f" />
<rect x="1588.50" y="1620.00" width="53.50" height="61.60" fill="url(#gBlk)" opacity="0.55"/>
<circle cx="1615.2" cy="1650.8" r="12" fill="none" stroke="#4a4d50" stroke-width="2.5"/>
<rect x="1610.75" y="1610.00" width="9.00" height="75.60" fill="#3d6676" />
<rect x="1610.75" y="1610.00" width="9.00" height="3.00" fill="#9fc3d0" />
<rect x="1586.50" y="1683.60" width="57.50" height="3.00" fill="#c5c6c7" />
<rect x="1584.50" y="1512.40" width="2.50" height="183.00" fill="#9fa1a3" />
<rect x="1676.00" y="1515.80" width="57.70" height="9.00" fill="#d9d9d9" />
<rect x="1676.00" y="1525.80" width="57.70" height="66.80" fill="#2b2d2f" />
<rect x="1678.00" y="1527.80" width="53.70" height="62.80" fill="url(#gBlk)" opacity="0.55"/>
<circle cx="1704.8" cy="1559.2" r="12" fill="none" stroke="#4a4d50" stroke-width="2.5"/>
<rect x="1700.35" y="1517.80" width="9.00" height="76.80" fill="#3d6676" />
<rect x="1700.35" y="1517.80" width="9.00" height="3.00" fill="#9fc3d0" />
<rect x="1676.00" y="1592.60" width="57.70" height="3.00" fill="#c5c6c7" />
<rect x="1676.00" y="1608.00" width="57.70" height="9.00" fill="#d9d9d9" />
<rect x="1676.00" y="1618.00" width="57.70" height="65.60" fill="#2b2d2f" />
<rect x="1678.00" y="1620.00" width="53.70" height="61.60" fill="url(#gBlk)" opacity="0.55"/>
<circle cx="1704.8" cy="1650.8" r="12" fill="none" stroke="#4a4d50" stroke-width="2.5"/>
<rect x="1700.35" y="1610.00" width="9.00" height="75.60" fill="#3d6676" />
<rect x="1700.35" y="1610.00" width="9.00" height="3.00" fill="#9fc3d0" />
<rect x="1676.00" y="1683.60" width="57.70" height="3.00" fill="#c5c6c7" />
<rect x="1674.00" y="1512.40" width="2.50" height="183.00" fill="#9fa1a3" />
<rect x="1736.00" y="1515.80" width="59.00" height="9.00" fill="#d9d9d9" />
<rect x="1736.00" y="1525.80" width="59.00" height="66.80" fill="#2b2d2f" />
<rect x="1738.00" y="1527.80" width="55.00" height="62.80" fill="url(#gBlk)" opacity="0.55"/>
<circle cx="1765.5" cy="1559.2" r="12" fill="none" stroke="#4a4d50" stroke-width="2.5"/>
<rect x="1761.00" y="1517.80" width="9.00" height="76.80" fill="#3d6676" />
<rect x="1761.00" y="1517.80" width="9.00" height="3.00" fill="#9fc3d0" />
<rect x="1736.00" y="1592.60" width="59.00" height="3.00" fill="#c5c6c7" />
<rect x="1736.00" y="1608.00" width="59.00" height="9.00" fill="#d9d9d9" />
<rect x="1736.00" y="1618.00" width="59.00" height="65.60" fill="#2b2d2f" />
<rect x="1738.00" y="1620.00" width="55.00" height="61.60" fill="url(#gBlk)" opacity="0.55"/>
<circle cx="1765.5" cy="1650.8" r="12" fill="none" stroke="#4a4d50" stroke-width="2.5"/>
<rect x="1761.00" y="1610.00" width="9.00" height="75.60" fill="#3d6676" />
<rect x="1761.00" y="1610.00" width="9.00" height="3.00" fill="#9fc3d0" />
<rect x="1736.00" y="1683.60" width="59.00" height="3.00" fill="#c5c6c7" />
<rect x="1734.00" y="1512.40" width="2.50" height="183.00" fill="#9fa1a3" />
<rect x="1491.00" y="1593.00" width="309.60" height="24.00" fill="#c9caca" opacity="0.6"/>
<rect x="1491.00" y="1684.00" width="309.60" height="11.00" fill="#d5d5d5" />
<rect x="1496.00" y="1695.60" width="301.00" height="34.80" fill="#d8d8d8" />
<rect x="1500.00" y="1700.00" width="293.00" height="26.00" fill="url(#gMesh)" />
<rect x="1516.7" y="1700" width="38" height="26" rx="3" fill="#1b1b1b"/><rect x="1524.7" y="1705" width="22" height="16" fill="#2b2b2b"/>
<rect x="1591.6" y="1700" width="38" height="26" rx="3" fill="#1b1b1b"/><rect x="1599.6" y="1705" width="22" height="16" fill="#2b2b2b"/>
<rect x="1662.5" y="1700" width="38" height="26" rx="3" fill="#1b1b1b"/><rect x="1670.5" y="1705" width="22" height="16" fill="#2b2b2b"/>
<rect x="1733.4" y="1700" width="38" height="26" rx="3" fill="#1b1b1b"/><rect x="1741.4" y="1705" width="22" height="16" fill="#2b2b2b"/>
<rect x="1496.00" y="1730.00" width="301.00" height="4.00" fill="#efefef" />
<rect x="1451.4" y="510.2" width="28.2" height="1198.2" fill="url(#pduL)" stroke="#161616" stroke-width="1.6"/>
<circle cx="1457.5" cy="521.6" r="3" fill="#888" stroke="#222" stroke-width="1.2"/><circle cx="1473.5" cy="521.6" r="3" fill="#888" stroke="#222" stroke-width="1.2"/>
<circle cx="1457.5" cy="1697.6" r="3" fill="#888" stroke="#222" stroke-width="1.2"/><circle cx="1473.5" cy="1697.6" r="3" fill="#888" stroke="#222" stroke-width="1.2"/>
<rect x="1456" y="579.3" width="19" height="30" rx="6" fill="#cfcfcf" stroke="#2a2a2a" stroke-width="1.8"/>
<rect x="1460.00" y="592.30" width="3.50" height="4.00" fill="#111" />
<rect x="1468.00" y="584.30" width="2.00" height="4.00" fill="#555" />
<rect x="1468.00" y="600.30" width="3.00" height="2.00" fill="#555" />
<rect x="1456" y="726.3" width="19" height="30" rx="6" fill="#cfcfcf" stroke="#2a2a2a" stroke-width="1.8"/>
<rect x="1460.00" y="739.30" width="3.50" height="4.00" fill="#111" />
<rect x="1468.00" y="731.30" width="2.00" height="4.00" fill="#555" />
<rect x="1468.00" y="747.30" width="3.00" height="2.00" fill="#555" />
<rect x="1456" y="873.2" width="19" height="30" rx="6" fill="#cfcfcf" stroke="#2a2a2a" stroke-width="1.8"/>
<rect x="1460.00" y="886.20" width="3.50" height="4.00" fill="#111" />
<rect x="1468.00" y="878.20" width="2.00" height="4.00" fill="#555" />
<rect x="1468.00" y="894.20" width="3.00" height="2.00" fill="#555" />
<rect x="1456" y="1314.5" width="19" height="30" rx="6" fill="#cfcfcf" stroke="#2a2a2a" stroke-width="1.8"/>
<rect x="1460.00" y="1327.50" width="3.50" height="4.00" fill="#111" />
<rect x="1468.00" y="1319.50" width="2.00" height="4.00" fill="#555" />
<rect x="1468.00" y="1335.50" width="3.00" height="2.00" fill="#555" />
<rect x="1456" y="1458.3" width="19" height="30" rx="6" fill="#cfcfcf" stroke="#2a2a2a" stroke-width="1.8"/>
<rect x="1460.00" y="1471.30" width="3.50" height="4.00" fill="#111" />
<rect x="1468.00" y="1463.30" width="2.00" height="4.00" fill="#555" />
<rect x="1468.00" y="1479.30" width="3.00" height="2.00" fill="#555" />
<rect x="1456" y="1602.1" width="19" height="30" rx="6" fill="#cfcfcf" stroke="#2a2a2a" stroke-width="1.8"/>
<rect x="1460.00" y="1615.10" width="3.50" height="4.00" fill="#111" />
<rect x="1468.00" y="1607.10" width="2.00" height="4.00" fill="#555" />
<rect x="1468.00" y="1623.10" width="3.00" height="2.00" fill="#555" />
<rect x="1453.7" y="906.7" width="23.6" height="405.3" fill="#6f8393" stroke="#111" stroke-width="2"/>
<text transform="translate(1459.6 909.5) rotate(90)" x="0" y="0" font-family="Liberation Sans" font-size="16.5" fill="#fff" textLength="400" lengthAdjust="spacingAndGlyphs">dev-vert-220v-pdu-01 / ZA1047003969 / 10.42.10.8</text>
<rect x="1845.00" y="509.90" width="28.00" height="1198.50" fill="#3b3431" />
<rect x="1845" y="509.9" width="28" height="1198.5" fill="none" stroke="#1d1816" stroke-width="1.4"/>
<rect x="1852.2" y="512.0" width="16.6" height="12.7" rx="1.5" fill="#4b4340" stroke="#141111" stroke-width="1.3"/>
<rect x="1856.00" y="514.00" width="6.00" height="3.00" fill="#0a0a0a" />
<rect x="1854.00" y="518.00" width="2.50" height="4.00" fill="#0a0a0a" />
<rect x="1861.00" y="518.00" width="5.00" height="4.00" fill="#0a0a0a" />
<rect x="1852.2" y="529.6" width="16.6" height="12.7" rx="1.5" fill="#4b4340" stroke="#141111" stroke-width="1.3"/>
<rect x="1856.00" y="531.60" width="6.00" height="3.00" fill="#0a0a0a" />
<rect x="1854.00" y="535.60" width="2.50" height="4.00" fill="#0a0a0a" />
<rect x="1861.00" y="535.60" width="5.00" height="4.00" fill="#0a0a0a" />
<rect x="1852.2" y="547.2" width="16.6" height="12.7" rx="1.5" fill="#4b4340" stroke="#141111" stroke-width="1.3"/>
<rect x="1856.00" y="549.20" width="6.00" height="3.00" fill="#0a0a0a" />
<rect x="1854.00" y="553.20" width="2.50" height="4.00" fill="#0a0a0a" />
<rect x="1861.00" y="553.20" width="5.00" height="4.00" fill="#0a0a0a" />
<rect x="1852.2" y="564.8" width="16.6" height="12.7" rx="1.5" fill="#4b4340" stroke="#141111" stroke-width="1.3"/>
<rect x="1856.00" y="566.80" width="6.00" height="3.00" fill="#0a0a0a" />
<rect x="1854.00" y="570.80" width="2.50" height="4.00" fill="#0a0a0a" />
<rect x="1861.00" y="570.80" width="5.00" height="4.00" fill="#0a0a0a" />
<rect x="1852.2" y="582.4" width="16.6" height="12.7" rx="1.5" fill="#4b4340" stroke="#141111" stroke-width="1.3"/>
<rect x="1856.00" y="584.40" width="6.00" height="3.00" fill="#0a0a0a" />
<rect x="1854.00" y="588.40" width="2.50" height="4.00" fill="#0a0a0a" />
<rect x="1861.00" y="588.40" width="5.00" height="4.00" fill="#0a0a0a" />
<rect x="1852.2" y="600.0" width="16.6" height="12.7" rx="1.5" fill="#4b4340" stroke="#141111" stroke-width="1.3"/>
<rect x="1856.00" y="602.00" width="6.00" height="3.00" fill="#0a0a0a" />
<rect x="1854.00" y="606.00" width="2.50" height="4.00" fill="#0a0a0a" />
<rect x="1861.00" y="606.00" width="5.00" height="4.00" fill="#0a0a0a" />
<rect x="1852.2" y="617.6" width="16.6" height="12.7" rx="1.5" fill="#4b4340" stroke="#141111" stroke-width="1.3"/>
<rect x="1856.00" y="619.60" width="6.00" height="3.00" fill="#0a0a0a" />
<rect x="1854.00" y="623.60" width="2.50" height="4.00" fill="#0a0a0a" />
<rect x="1861.00" y="623.60" width="5.00" height="4.00" fill="#0a0a0a" />
<rect x="1852.2" y="635.2" width="16.6" height="12.7" rx="1.5" fill="#4b4340" stroke="#141111" stroke-width="1.3"/>
<rect x="1856.00" y="637.20" width="6.00" height="3.00" fill="#0a0a0a" />
<rect x="1854.00" y="641.20" width="2.50" height="4.00" fill="#0a0a0a" />
<rect x="1861.00" y="641.20" width="5.00" height="4.00" fill="#0a0a0a" />
<rect x="1852.2" y="652.8" width="16.6" height="12.7" rx="1.5" fill="#4b4340" stroke="#141111" stroke-width="1.3"/>
<rect x="1856.00" y="654.80" width="6.00" height="3.00" fill="#0a0a0a" />
<rect x="1854.00" y="658.80" width="2.50" height="4.00" fill="#0a0a0a" />
<rect x="1861.00" y="658.80" width="5.00" height="4.00" fill="#0a0a0a" />
<rect x="1852.2" y="670.4" width="16.6" height="12.7" rx="1.5" fill="#4b4340" stroke="#141111" stroke-width="1.3"/>
<rect x="1856.00" y="672.40" width="6.00" height="3.00" fill="#0a0a0a" />
<rect x="1854.00" y="676.40" width="2.50" height="4.00" fill="#0a0a0a" />
<rect x="1861.00" y="676.40" width="5.00" height="4.00" fill="#0a0a0a" />
<rect x="1852.2" y="688.0" width="16.6" height="12.7" rx="1.5" fill="#4b4340" stroke="#141111" stroke-width="1.3"/>
<rect x="1856.00" y="690.00" width="6.00" height="3.00" fill="#0a0a0a" />
<rect x="1854.00" y="694.00" width="2.50" height="4.00" fill="#0a0a0a" />
<rect x="1861.00" y="694.00" width="5.00" height="4.00" fill="#0a0a0a" />
<rect x="1852.2" y="705.6" width="16.6" height="12.7" rx="1.5" fill="#4b4340" stroke="#141111" stroke-width="1.3"/>
<rect x="1856.00" y="707.60" width="6.00" height="3.00" fill="#0a0a0a" />
<rect x="1854.00" y="711.60" width="2.50" height="4.00" fill="#0a0a0a" />
<rect x="1861.00" y="711.60" width="5.00" height="4.00" fill="#0a0a0a" />
<rect x="1852.2" y="723.2" width="16.6" height="12.7" rx="1.5" fill="#4b4340" stroke="#141111" stroke-width="1.3"/>
<rect x="1856.00" y="725.20" width="6.00" height="3.00" fill="#0a0a0a" />
<rect x="1854.00" y="729.20" width="2.50" height="4.00" fill="#0a0a0a" />
<rect x="1861.00" y="729.20" width="5.00" height="4.00" fill="#0a0a0a" />
<rect x="1852.2" y="740.8" width="16.6" height="12.7" rx="1.5" fill="#4b4340" stroke="#141111" stroke-width="1.3"/>
<rect x="1856.00" y="742.80" width="6.00" height="3.00" fill="#0a0a0a" />
<rect x="1854.00" y="746.80" width="2.50" height="4.00" fill="#0a0a0a" />
<rect x="1861.00" y="746.80" width="5.00" height="4.00" fill="#0a0a0a" />
<rect x="1852.2" y="758.4" width="16.6" height="12.7" rx="1.5" fill="#4b4340" stroke="#141111" stroke-width="1.3"/>
<rect x="1856.00" y="760.40" width="6.00" height="3.00" fill="#0a0a0a" />
<rect x="1854.00" y="764.40" width="2.50" height="4.00" fill="#0a0a0a" />
<rect x="1861.00" y="764.40" width="5.00" height="4.00" fill="#0a0a0a" />
<rect x="1852.2" y="776.0" width="16.6" height="12.7" rx="1.5" fill="#4b4340" stroke="#141111" stroke-width="1.3"/>
<rect x="1856.00" y="778.00" width="6.00" height="3.00" fill="#0a0a0a" />
<rect x="1854.00" y="782.00" width="2.50" height="4.00" fill="#0a0a0a" />
<rect x="1861.00" y="782.00" width="5.00" height="4.00" fill="#0a0a0a" />
<rect x="1852.2" y="793.6" width="16.6" height="12.7" rx="1.5" fill="#4b4340" stroke="#141111" stroke-width="1.3"/>
<rect x="1856.00" y="795.60" width="6.00" height="3.00" fill="#0a0a0a" />
<rect x="1854.00" y="799.60" width="2.50" height="4.00" fill="#0a0a0a" />
<rect x="1861.00" y="799.60" width="5.00" height="4.00" fill="#0a0a0a" />
<rect x="1852.2" y="811.2" width="16.6" height="12.7" rx="1.5" fill="#4b4340" stroke="#141111" stroke-width="1.3"/>
<rect x="1856.00" y="813.20" width="6.00" height="3.00" fill="#0a0a0a" />
<rect x="1854.00" y="817.20" width="2.50" height="4.00" fill="#0a0a0a" />
<rect x="1861.00" y="817.20" width="5.00" height="4.00" fill="#0a0a0a" />
<rect x="1852.2" y="828.8" width="16.6" height="12.7" rx="1.5" fill="#4b4340" stroke="#141111" stroke-width="1.3"/>
<rect x="1856.00" y="830.80" width="6.00" height="3.00" fill="#0a0a0a" />
<rect x="1854.00" y="834.80" width="2.50" height="4.00" fill="#0a0a0a" />
<rect x="1861.00" y="834.80" width="5.00" height="4.00" fill="#0a0a0a" />
<rect x="1852.2" y="846.4" width="16.6" height="12.7" rx="1.5" fill="#4b4340" stroke="#141111" stroke-width="1.3"/>
<rect x="1856.00" y="848.40" width="6.00" height="3.00" fill="#0a0a0a" />
<rect x="1854.00" y="852.40" width="2.50" height="4.00" fill="#0a0a0a" />
<rect x="1861.00" y="852.40" width="5.00" height="4.00" fill="#0a0a0a" />
<rect x="1852.2" y="864.0" width="16.6" height="12.7" rx="1.5" fill="#4b4340" stroke="#141111" stroke-width="1.3"/>
<rect x="1856.00" y="866.00" width="6.00" height="3.00" fill="#0a0a0a" />
<rect x="1854.00" y="870.00" width="2.50" height="4.00" fill="#0a0a0a" />
<rect x="1861.00" y="870.00" width="5.00" height="4.00" fill="#0a0a0a" />
<rect x="1852.2" y="881.6" width="16.6" height="12.7" rx="1.5" fill="#4b4340" stroke="#141111" stroke-width="1.3"/>
<rect x="1856.00" y="883.60" width="6.00" height="3.00" fill="#0a0a0a" />
<rect x="1854.00" y="887.60" width="2.50" height="4.00" fill="#0a0a0a" />
<rect x="1861.00" y="887.60" width="5.00" height="4.00" fill="#0a0a0a" />
<rect x="1852.2" y="899.2" width="16.6" height="12.7" rx="1.5" fill="#4b4340" stroke="#141111" stroke-width="1.3"/>
<rect x="1856.00" y="901.20" width="6.00" height="3.00" fill="#0a0a0a" />
<rect x="1854.00" y="905.20" width="2.50" height="4.00" fill="#0a0a0a" />
<rect x="1861.00" y="905.20" width="5.00" height="4.00" fill="#0a0a0a" />
<rect x="1852.2" y="1304.0" width="16.6" height="12.7" rx="1.5" fill="#4b4340" stroke="#141111" stroke-width="1.3"/>
<rect x="1856.00" y="1306.00" width="6.00" height="3.00" fill="#0a0a0a" />
<rect x="1854.00" y="1310.00" width="2.50" height="4.00" fill="#0a0a0a" />
<rect x="1861.00" y="1310.00" width="5.00" height="4.00" fill="#0a0a0a" />
<rect x="1852.2" y="1321.6" width="16.6" height="12.7" rx="1.5" fill="#4b4340" stroke="#141111" stroke-width="1.3"/>
<rect x="1856.00" y="1323.60" width="6.00" height="3.00" fill="#0a0a0a" />
<rect x="1854.00" y="1327.60" width="2.50" height="4.00" fill="#0a0a0a" />
<rect x="1861.00" y="1327.60" width="5.00" height="4.00" fill="#0a0a0a" />
<rect x="1852.2" y="1339.2" width="16.6" height="12.7" rx="1.5" fill="#4b4340" stroke="#141111" stroke-width="1.3"/>
<rect x="1856.00" y="1341.20" width="6.00" height="3.00" fill="#0a0a0a" />
<rect x="1854.00" y="1345.20" width="2.50" height="4.00" fill="#0a0a0a" />
<rect x="1861.00" y="1345.20" width="5.00" height="4.00" fill="#0a0a0a" />
<rect x="1852.2" y="1356.8" width="16.6" height="12.7" rx="1.5" fill="#4b4340" stroke="#141111" stroke-width="1.3"/>
<rect x="1856.00" y="1358.80" width="6.00" height="3.00" fill="#0a0a0a" />
<rect x="1854.00" y="1362.80" width="2.50" height="4.00" fill="#0a0a0a" />
<rect x="1861.00" y="1362.80" width="5.00" height="4.00" fill="#0a0a0a" />
<rect x="1852.2" y="1374.4" width="16.6" height="12.7" rx="1.5" fill="#4b4340" stroke="#141111" stroke-width="1.3"/>
<rect x="1856.00" y="1376.40" width="6.00" height="3.00" fill="#0a0a0a" />
<rect x="1854.00" y="1380.40" width="2.50" height="4.00" fill="#0a0a0a" />
<rect x="1861.00" y="1380.40" width="5.00" height="4.00" fill="#0a0a0a" />
<rect x="1852.2" y="1392.0" width="16.6" height="12.7" rx="1.5" fill="#4b4340" stroke="#141111" stroke-width="1.3"/>
<rect x="1856.00" y="1394.00" width="6.00" height="3.00" fill="#0a0a0a" />
<rect x="1854.00" y="1398.00" width="2.50" height="4.00" fill="#0a0a0a" />
<rect x="1861.00" y="1398.00" width="5.00" height="4.00" fill="#0a0a0a" />
<rect x="1852.2" y="1409.6" width="16.6" height="12.7" rx="1.5" fill="#4b4340" stroke="#141111" stroke-width="1.3"/>
<rect x="1856.00" y="1411.60" width="6.00" height="3.00" fill="#0a0a0a" />
<rect x="1854.00" y="1415.60" width="2.50" height="4.00" fill="#0a0a0a" />
<rect x="1861.00" y="1415.60" width="5.00" height="4.00" fill="#0a0a0a" />
<rect x="1852.2" y="1427.2" width="16.6" height="12.7" rx="1.5" fill="#4b4340" stroke="#141111" stroke-width="1.3"/>
<rect x="1856.00" y="1429.20" width="6.00" height="3.00" fill="#0a0a0a" />
<rect x="1854.00" y="1433.20" width="2.50" height="4.00" fill="#0a0a0a" />
<rect x="1861.00" y="1433.20" width="5.00" height="4.00" fill="#0a0a0a" />
<rect x="1852.2" y="1444.8" width="16.6" height="12.7" rx="1.5" fill="#4b4340" stroke="#141111" stroke-width="1.3"/>
<rect x="1856.00" y="1446.80" width="6.00" height="3.00" fill="#0a0a0a" />
<rect x="1854.00" y="1450.80" width="2.50" height="4.00" fill="#0a0a0a" />
<rect x="1861.00" y="1450.80" width="5.00" height="4.00" fill="#0a0a0a" />
<rect x="1852.2" y="1462.4" width="16.6" height="12.7" rx="1.5" fill="#4b4340" stroke="#141111" stroke-width="1.3"/>
<rect x="1856.00" y="1464.40" width="6.00" height="3.00" fill="#0a0a0a" />
<rect x="1854.00" y="1468.40" width="2.50" height="4.00" fill="#0a0a0a" />
<rect x="1861.00" y="1468.40" width="5.00" height="4.00" fill="#0a0a0a" />
<rect x="1852.2" y="1480.0" width="16.6" height="12.7" rx="1.5" fill="#4b4340" stroke="#141111" stroke-width="1.3"/>
<rect x="1856.00" y="1482.00" width="6.00" height="3.00" fill="#0a0a0a" />
<rect x="1854.00" y="1486.00" width="2.50" height="4.00" fill="#0a0a0a" />
<rect x="1861.00" y="1486.00" width="5.00" height="4.00" fill="#0a0a0a" />
<rect x="1852.2" y="1497.6" width="16.6" height="12.7" rx="1.5" fill="#4b4340" stroke="#141111" stroke-width="1.3"/>
<rect x="1856.00" y="1499.60" width="6.00" height="3.00" fill="#0a0a0a" />
<rect x="1854.00" y="1503.60" width="2.50" height="4.00" fill="#0a0a0a" />
<rect x="1861.00" y="1503.60" width="5.00" height="4.00" fill="#0a0a0a" />
<rect x="1852.2" y="1515.2" width="16.6" height="12.7" rx="1.5" fill="#4b4340" stroke="#141111" stroke-width="1.3"/>
<rect x="1856.00" y="1517.20" width="6.00" height="3.00" fill="#0a0a0a" />
<rect x="1854.00" y="1521.20" width="2.50" height="4.00" fill="#0a0a0a" />
<rect x="1861.00" y="1521.20" width="5.00" height="4.00" fill="#0a0a0a" />
<rect x="1852.2" y="1532.8" width="16.6" height="12.7" rx="1.5" fill="#4b4340" stroke="#141111" stroke-width="1.3"/>
<rect x="1856.00" y="1534.80" width="6.00" height="3.00" fill="#0a0a0a" />
<rect x="1854.00" y="1538.80" width="2.50" height="4.00" fill="#0a0a0a" />
<rect x="1861.00" y="1538.80" width="5.00" height="4.00" fill="#0a0a0a" />
<rect x="1852.2" y="1550.4" width="16.6" height="12.7" rx="1.5" fill="#4b4340" stroke="#141111" stroke-width="1.3"/>
<rect x="1856.00" y="1552.40" width="6.00" height="3.00" fill="#0a0a0a" />
<rect x="1854.00" y="1556.40" width="2.50" height="4.00" fill="#0a0a0a" />
<rect x="1861.00" y="1556.40" width="5.00" height="4.00" fill="#0a0a0a" />
<rect x="1852.2" y="1568.0" width="16.6" height="12.7" rx="1.5" fill="#4b4340" stroke="#141111" stroke-width="1.3"/>
<rect x="1856.00" y="1570.00" width="6.00" height="3.00" fill="#0a0a0a" />
<rect x="1854.00" y="1574.00" width="2.50" height="4.00" fill="#0a0a0a" />
<rect x="1861.00" y="1574.00" width="5.00" height="4.00" fill="#0a0a0a" />
<rect x="1852.2" y="1585.6" width="16.6" height="12.7" rx="1.5" fill="#4b4340" stroke="#141111" stroke-width="1.3"/>
<rect x="1856.00" y="1587.60" width="6.00" height="3.00" fill="#0a0a0a" />
<rect x="1854.00" y="1591.60" width="2.50" height="4.00" fill="#0a0a0a" />
<rect x="1861.00" y="1591.60" width="5.00" height="4.00" fill="#0a0a0a" />
<rect x="1852.2" y="1603.2" width="16.6" height="12.7" rx="1.5" fill="#4b4340" stroke="#141111" stroke-width="1.3"/>
<rect x="1856.00" y="1605.20" width="6.00" height="3.00" fill="#0a0a0a" />
<rect x="1854.00" y="1609.20" width="2.50" height="4.00" fill="#0a0a0a" />
<rect x="1861.00" y="1609.20" width="5.00" height="4.00" fill="#0a0a0a" />
<rect x="1852.2" y="1620.8" width="16.6" height="12.7" rx="1.5" fill="#4b4340" stroke="#141111" stroke-width="1.3"/>
<rect x="1856.00" y="1622.80" width="6.00" height="3.00" fill="#0a0a0a" />
<rect x="1854.00" y="1626.80" width="2.50" height="4.00" fill="#0a0a0a" />
<rect x="1861.00" y="1626.80" width="5.00" height="4.00" fill="#0a0a0a" />
<rect x="1852.2" y="1638.4" width="16.6" height="12.7" rx="1.5" fill="#4b4340" stroke="#141111" stroke-width="1.3"/>
<rect x="1856.00" y="1640.40" width="6.00" height="3.00" fill="#0a0a0a" />
<rect x="1854.00" y="1644.40" width="2.50" height="4.00" fill="#0a0a0a" />
<rect x="1861.00" y="1644.40" width="5.00" height="4.00" fill="#0a0a0a" />
<rect x="1852.2" y="1656.0" width="16.6" height="12.7" rx="1.5" fill="#4b4340" stroke="#141111" stroke-width="1.3"/>
<rect x="1856.00" y="1658.00" width="6.00" height="3.00" fill="#0a0a0a" />
<rect x="1854.00" y="1662.00" width="2.50" height="4.00" fill="#0a0a0a" />
<rect x="1861.00" y="1662.00" width="5.00" height="4.00" fill="#0a0a0a" />
<rect x="1852.2" y="1673.6" width="16.6" height="12.7" rx="1.5" fill="#4b4340" stroke="#141111" stroke-width="1.3"/>
<rect x="1856.00" y="1675.60" width="6.00" height="3.00" fill="#0a0a0a" />
<rect x="1854.00" y="1679.60" width="2.50" height="4.00" fill="#0a0a0a" />
<rect x="1861.00" y="1679.60" width="5.00" height="4.00" fill="#0a0a0a" />
<rect x="1852.2" y="1691.2" width="16.6" height="12.7" rx="1.5" fill="#4b4340" stroke="#141111" stroke-width="1.3"/>
<rect x="1856.00" y="1693.20" width="6.00" height="3.00" fill="#0a0a0a" />
<rect x="1854.00" y="1697.20" width="2.50" height="4.00" fill="#0a0a0a" />
<rect x="1861.00" y="1697.20" width="5.00" height="4.00" fill="#0a0a0a" />
<rect x="1847.5" y="925.6" width="22.5" height="367.7" fill="#6f8393" stroke="#111" stroke-width="2"/>
<text transform="translate(1853.2 928.5) rotate(90)" x="0" y="0" font-family="Liberation Sans" font-size="16.5" fill="#fff" textLength="362" lengthAdjust="spacingAndGlyphs">prod-vert-pdu-01 / ZA0737007687 / 10.42.10.5</text>
</svg>
</body></html>
